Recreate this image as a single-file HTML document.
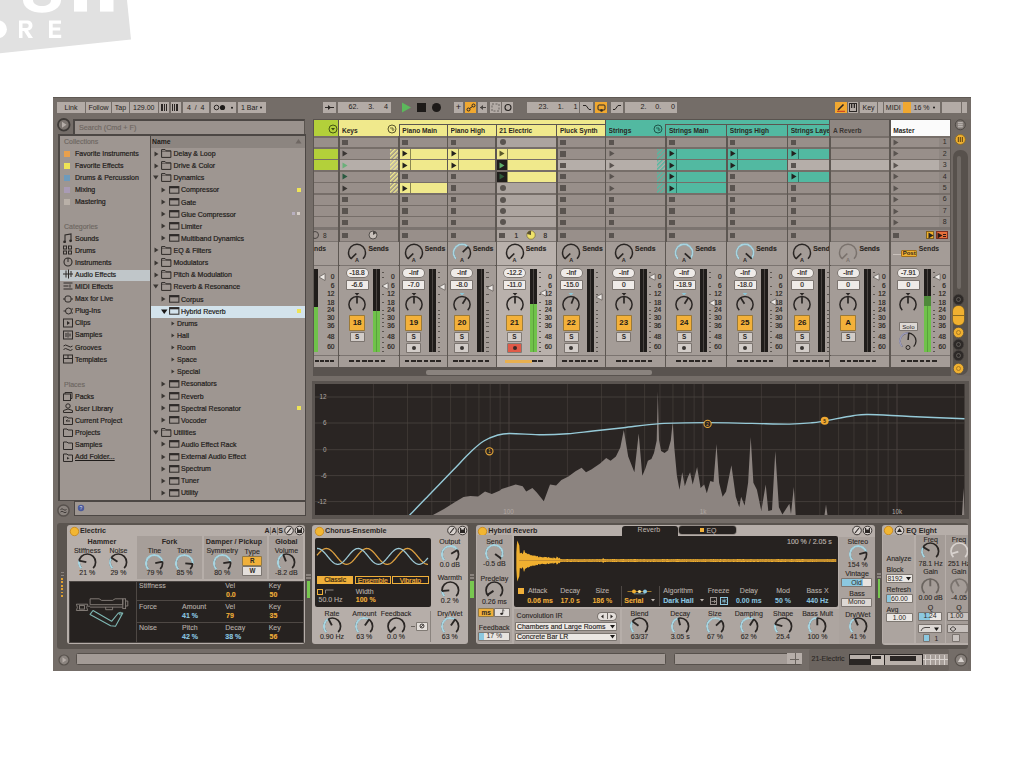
<!DOCTYPE html><html><head><meta charset="utf-8"><style>
html,body{margin:0;padding:0;background:#fff;width:1024px;height:768px;overflow:hidden;position:relative}
body>div,body>span,body>svg{position:absolute}
.t{position:absolute;font-family:"Liberation Sans",sans-serif;white-space:nowrap}
.s{-webkit-text-stroke:0.25px currentColor}
</style></head><body>
<svg style="left:0px;top:0px" width="140" height="60" viewBox="0 0 140 60"><polygon points="0,0 127,0 131,39.6 0,53.3" fill="#e1e1e1"/><path d="M23,0 C23,17 61,17 61,0 Z" fill="#fff"/><path d="M33,0 C33,8 51,8 51,0 Z" fill="#e1e1e1"/><rect x="74" y="0" width="13" height="11.6" fill="#fff"/><rect x="100" y="0" width="13.5" height="11.6" fill="#fff"/><path d="M-6,20.5 h6 a9,9 0 0 1 0,17.5 h-6z" fill="#fff"/><path d="M19,20.5 h8 a5,5 0 0 1 1,10 l5,7.5 h-4.5 l-4.5,-7 h-1.5 v7 h-3.5z M22.5,23.5 v4.5 h4 a2.2,2.2 0 0 0 0,-4.5z" fill="#fff" fill-rule="evenodd"/><path d="M49,20.5 h12 v3.2 h-8.3 v3.8 h7.5 v3 h-7.5 v4.3 h8.5 v3.2 h-12.2z" fill="#fff"/></svg>
<div style="left:53px;top:97px;width:918px;height:574px;background:#746d68;"></div>
<div style="left:53px;top:97px;width:918px;height:1px;background:#5f5954;"></div>
<div style="left:57px;top:102px;width:28px;height:11px;background:#b3aba6;"></div>
<span class="t" style="left:57px;top:102px;width:28px;height:11px;line-height:11px;text-align:center;font-size:7px;color:#1f1c1a;">Link</span>
<div style="left:86px;top:102px;width:25px;height:11px;background:#b3aba6;"></div>
<span class="t" style="left:86px;top:102px;width:25px;height:11px;line-height:11px;text-align:center;font-size:7px;color:#1f1c1a;">Follow</span>
<div style="left:112px;top:102px;width:17px;height:11px;background:#b3aba6;"></div>
<span class="t" style="left:112px;top:102px;width:17px;height:11px;line-height:11px;text-align:center;font-size:7px;color:#1f1c1a;">Tap</span>
<div style="left:130px;top:102px;width:27.5px;height:11px;background:#b3aba6;"></div>
<span class="t" style="left:130px;top:102px;width:27.5px;height:11px;line-height:11px;text-align:center;font-size:7px;color:#1f1c1a;">129.00</span>
<div style="left:159px;top:102px;width:10px;height:11px;background:#b3aba6;"></div>
<svg style="left:161px;top:104px" width="7" height="7" viewBox="0 0 7 7"><rect x="0" y="0" width="2" height="7" fill="#2a2624"/><rect x="3" y="0" width="1" height="7" fill="#2a2624"/><rect x="5" y="0" width="1" height="7" fill="#2a2624"/></svg>
<div style="left:170.5px;top:102px;width:10.5px;height:11px;background:#b3aba6;"></div>
<svg style="left:172px;top:104px" width="7" height="7" viewBox="0 0 7 7"><rect x="0" y="0" width="1" height="7" fill="#2a2624"/><rect x="2" y="0" width="1" height="7" fill="#2a2624"/><rect x="4" y="0" width="2" height="7" fill="#2a2624"/></svg>
<div style="left:182.5px;top:102px;width:26.5px;height:11px;background:#b3aba6;"></div>
<span class="t" style="left:182.5px;top:102px;width:26.5px;height:11px;line-height:11px;text-align:center;font-size:7px;color:#1f1c1a;">4&nbsp;&nbsp;/&nbsp;&nbsp;4</span>
<div style="left:211px;top:102px;width:25px;height:11px;background:#b3aba6;"></div>
<svg style="left:213px;top:104px" width="22" height="7" viewBox="0 0 22 7"><circle cx="3.5" cy="3.5" r="2.3" fill="none" stroke="#2a2624" stroke-width="1"/><circle cx="9.5" cy="3.5" r="2.6" fill="#1c1a18"/><circle cx="19" cy="3.7" r="1" fill="#1c1a18"/></svg>
<div style="left:238px;top:102px;width:28px;height:11px;background:#b3aba6;"></div>
<span class="t" style="left:238px;top:102px;width:28px;height:11px;line-height:11px;text-align:left;font-size:7px;color:#1f1c1a;padding-left:3px;box-sizing:border-box;">1 Bar</span>
<svg style="left:259px;top:106px" width="4" height="3" viewBox="0 0 4 3"><circle cx="2" cy="1.5" r="1" fill="#1c1a18"/></svg>
<div style="left:323px;top:102px;width:13px;height:11px;background:#b3aba6;"></div>
<svg style="left:325px;top:104px" width="10" height="7" viewBox="0 0 10 7"><path d="M0,3.5 h9" stroke="#2a2624" stroke-width="1"/><path d="M3,1 l3,2.5 l-3,2.5z" fill="#2a2624"/></svg>
<div style="left:338px;top:102px;width:52.5px;height:11px;background:#b3aba6;"></div>
<span class="t" style="left:348.6px;top:103.3px;font-size:7.2px;line-height:8.28px;color:#1f1c1a;">62.</span>
<span class="t" style="left:368.3px;top:103.3px;font-size:7.2px;line-height:8.28px;color:#1f1c1a;">3.</span>
<span class="t" style="left:384px;top:103.3px;font-size:7.2px;line-height:8.28px;color:#1f1c1a;">4</span>
<svg style="left:401px;top:102px" width="12" height="11" viewBox="0 0 12 11"><path d="M1,0.5 L10,5.5 L1,10.5z" fill="#5cb85c"/></svg>
<div style="left:417px;top:103px;width:9px;height:9px;background:#1d1a18;"></div>
<div style="left:431.5px;top:103px;width:9px;height:9px;background:#1d1a18;border-radius:50%"></div>
<div style="left:454px;top:102px;width:9px;height:11px;background:#b3aba6;"></div>
<span class="t" style="left:454px;top:102px;width:9px;height:11px;line-height:11px;text-align:center;font-size:9px;color:#1f1c1a;">+</span>
<div style="left:465px;top:102px;width:11px;height:11px;background:#f0a830;"></div>
<svg style="left:466px;top:103px" width="10" height="9" viewBox="0 0 10 9"><circle cx="2.5" cy="6.5" r="1.5" fill="none" stroke="#2a2624" stroke-width="1"/><circle cx="7.5" cy="2.5" r="1.5" fill="none" stroke="#2a2624" stroke-width="1"/><path d="M3.5,5.5 L6.5,3.5" stroke="#2a2624"/></svg>
<div style="left:478px;top:102px;width:9px;height:11px;background:#b3aba6;"></div>
<svg style="left:479px;top:104px" width="8" height="7" viewBox="0 0 8 7"><path d="M1,3.5 h6" stroke="#4a4542"/><path d="M1,3.5 l3,-2.5 v5z" fill="#4a4542"/></svg>
<div style="left:490px;top:102px;width:11px;height:11px;background:#b3aba6;"></div>
<svg style="left:491px;top:103px" width="9" height="9" viewBox="0 0 9 9"><rect x="1" y="1" width="7" height="7" fill="none" stroke="#6a6460" stroke-dasharray="2,1.5"/></svg>
<div style="left:502px;top:102px;width:11px;height:11px;background:#b3aba6;"></div>
<svg style="left:503px;top:103px" width="10" height="9" viewBox="0 0 10 9"><circle cx="5" cy="4.5" r="3" fill="none" stroke="#2a2624" stroke-width="1.1"/></svg>
<div style="left:527px;top:102px;width:52px;height:11px;background:#b3aba6;"></div>
<span class="t" style="left:538.5px;top:103.3px;font-size:7.2px;line-height:8.28px;color:#1f1c1a;">23.</span>
<span class="t" style="left:557.8px;top:103.3px;font-size:7.2px;line-height:8.28px;color:#1f1c1a;">1.</span>
<span class="t" style="left:573.6px;top:103.3px;font-size:7.2px;line-height:8.28px;color:#1f1c1a;">1</span>
<div style="left:580px;top:102px;width:13px;height:11px;background:#b3aba6;"></div>
<svg style="left:582px;top:104px" width="10" height="7" viewBox="0 0 10 7"><path d="M1,1.5 h3 l3,4 h2" fill="none" stroke="#2a2624" stroke-width="1"/></svg>
<div style="left:595px;top:102px;width:12px;height:11px;background:#f0a830;"></div>
<svg style="left:596px;top:103px" width="11" height="9" viewBox="0 0 11 9"><rect x="2" y="2" width="7" height="5" rx="1" fill="none" stroke="#2a2624" stroke-width="1"/><circle cx="5.5" cy="7.5" r="1.3" fill="#2a2624"/></svg>
<div style="left:610.5px;top:102px;width:12.5px;height:11px;background:#b3aba6;"></div>
<svg style="left:612px;top:104px" width="10" height="7" viewBox="0 0 10 7"><path d="M1,5.5 h2 l3,-4 h3" fill="none" stroke="#2a2624" stroke-width="1"/></svg>
<div style="left:625px;top:102px;width:52px;height:11px;background:#b3aba6;"></div>
<span class="t" style="left:640.4px;top:103.3px;font-size:7.2px;line-height:8.28px;color:#1f1c1a;">2.</span>
<span class="t" style="left:655.3px;top:103.3px;font-size:7.2px;line-height:8.28px;color:#1f1c1a;">0.</span>
<span class="t" style="left:671px;top:103.3px;font-size:7.2px;line-height:8.28px;color:#1f1c1a;">0</span>
<div style="left:835px;top:102px;width:11.5px;height:11px;background:#f0a830;"></div>
<svg style="left:836px;top:103px" width="10" height="9" viewBox="0 0 10 9"><path d="M2,7 L7.5,1.5" stroke="#2a2624" stroke-width="1.6"/><path d="M1,8.3 h8" stroke="#c83020" stroke-width="1"/></svg>
<div style="left:847.5px;top:102px;width:10.5px;height:11px;background:#b3aba6;"></div>
<svg style="left:849px;top:103px" width="8" height="9" viewBox="0 0 8 9"><rect x="0.5" y="0.5" width="7" height="8" fill="none" stroke="#2a2624"/><rect x="2" y="1" width="1.3" height="4" fill="#2a2624"/><rect x="4.7" y="1" width="1.3" height="4" fill="#2a2624"/></svg>
<div style="left:860px;top:102px;width:17px;height:11px;background:#b3aba6;"></div>
<span class="t" style="left:860px;top:102px;width:17px;height:11px;line-height:11px;text-align:center;font-size:7px;color:#1f1c1a;">Key</span>
<div style="left:878px;top:102px;width:5px;height:11px;background:#b3aba6;"></div>
<div style="left:884px;top:102px;width:18.5px;height:11px;background:#b3aba6;"></div>
<span class="t" style="left:884px;top:102px;width:18.5px;height:11px;line-height:11px;text-align:center;font-size:7px;color:#1f1c1a;">MIDI</span>
<div style="left:903px;top:102px;width:37px;height:11px;background:#b3aba6;"></div>
<span class="t" style="left:903px;top:102px;width:37px;height:11px;line-height:11px;text-align:center;font-size:7px;color:#1f1c1a;">16 %</span>
<div style="left:903px;top:102px;width:8px;height:11px;background:#f0a830;"></div>
<svg style="left:932px;top:106px" width="4" height="3" viewBox="0 0 4 3"><circle cx="2" cy="1.5" r="1" fill="#1c1a18"/></svg>
<div style="left:941.5px;top:102px;width:19.5px;height:11px;background:#b3aba6;"></div>
<div style="left:962px;top:102px;width:5px;height:11px;background:#b3aba6;"></div>
<svg style="left:57px;top:118px" width="14" height="14" viewBox="0 0 14 14"><circle cx="6.8" cy="6.8" r="5.8" fill="#7c7570" stroke="#3e3a37" stroke-width="1.8"/><path d="M5,3.8 L9.5,6.8 L5,9.8z" fill="#b5ada8"/></svg>
<div style="left:73px;top:119px;width:232px;height:16px;background:#9a928d;border-top:2px solid #4c4744;border-left:2px solid #4c4744;border-right:1px solid #5a544f;box-sizing:border-box;"></div>
<span class="t" style="left:79px;top:124px;font-size:7.2px;line-height:8.28px;color:#6e6762;-webkit-text-stroke:0.15px #6e6762">Search (Cmd + F)</span>
<div style="left:58px;top:134px;width:247.5px;height:367px;background:#9e9691;border:2px solid #4c4744;border-right-width:1px;border-bottom-width:1px;box-sizing:border-box;"></div>
<div style="left:149.5px;top:135px;width:1.2px;height:365px;background:#4c4744;"></div>
<div style="left:150.5px;top:136px;width:154px;height:12px;background:#8c8580;"></div>
<span class="t" style="left:152px;top:138.3px;font-size:6.8px;line-height:7.82px;color:#1f1c1a;font-weight:bold;">Name</span>
<svg style="left:295px;top:138px" width="7" height="6" viewBox="0 0 7 6"><path d="M0.5,5.5 L3.5,1 L6.5,5.5z" fill="#6e6762"/></svg>
<span class="t" style="left:64px;top:138.2px;font-size:7px;line-height:8.05px;color:#6d6661;-webkit-text-stroke:0.15px #6d6661">Collections</span>
<div style="left:64px;top:150.5px;width:6px;height:6px;background:#e9a04c;"></div>
<span class="t" style="left:75px;top:150.1px;font-size:7.0px;line-height:8.05px;color:#1f1c1a;-webkit-text-stroke:0.2px #1f1c1a;">Favorite Instruments</span>
<div style="left:64px;top:162.55px;width:6px;height:6px;background:#eee456;"></div>
<span class="t" style="left:75px;top:162.15px;font-size:7.0px;line-height:8.05px;color:#1f1c1a;-webkit-text-stroke:0.2px #1f1c1a;">Favorite Effects</span>
<div style="left:64px;top:174.6px;width:6px;height:6px;background:#6d9bbd;"></div>
<span class="t" style="left:75px;top:174.2px;font-size:7.0px;line-height:8.05px;color:#1f1c1a;-webkit-text-stroke:0.2px #1f1c1a;">Drums &amp; Percussion</span>
<div style="left:64px;top:186.65px;width:6px;height:6px;background:#a99bb5;"></div>
<span class="t" style="left:75px;top:186.25px;font-size:7.0px;line-height:8.05px;color:#1f1c1a;-webkit-text-stroke:0.2px #1f1c1a;">Mixing</span>
<div style="left:64px;top:198.7px;width:6px;height:6px;background:#b9b0a8;"></div>
<span class="t" style="left:75px;top:198.29999999999998px;font-size:7.0px;line-height:8.05px;color:#1f1c1a;-webkit-text-stroke:0.2px #1f1c1a;">Mastering</span>
<span class="t" style="left:64px;top:222.7px;font-size:7px;line-height:8.05px;color:#6d6661;-webkit-text-stroke:0.15px #6d6661">Categories</span>
<div style="left:60px;top:269.5px;width:89.5px;height:11.5px;background:#c0c6c9;"></div>
<svg style="left:63px;top:233.0px" width="10" height="10" viewBox="0 0 10 10"><path d="M2,9 V2 L8,1 V8" fill="none" stroke="#2e2a28" stroke-width="1.1"/><circle cx="1.6" cy="8.8" r="1.4" fill="#2e2a28"/><circle cx="7.6" cy="7.8" r="1.4" fill="#2e2a28"/></svg>
<span class="t" style="left:75px;top:234.6px;font-size:7.0px;line-height:8.05px;color:#1f1c1a;-webkit-text-stroke:0.2px #1f1c1a;">Sounds</span>
<svg style="left:63px;top:245.1px" width="10" height="10" viewBox="0 0 10 10"><rect x="0.5" y="1" width="3" height="3" fill="none" stroke="#2e2a28"/><rect x="5.5" y="1" width="3" height="3" fill="none" stroke="#2e2a28"/><rect x="0.5" y="6" width="3" height="3" fill="none" stroke="#2e2a28"/><rect x="5.5" y="6" width="3" height="3" fill="none" stroke="#2e2a28"/></svg>
<span class="t" style="left:75px;top:246.7px;font-size:7.0px;line-height:8.05px;color:#1f1c1a;-webkit-text-stroke:0.2px #1f1c1a;">Drums</span>
<svg style="left:63px;top:257.2px" width="10" height="10" viewBox="0 0 10 10"><circle cx="5" cy="5" r="4" fill="none" stroke="#2e2a28" stroke-width="1.1"/><path d="M5,1 V5" stroke="#2e2a28"/></svg>
<span class="t" style="left:75px;top:258.8px;font-size:7.0px;line-height:8.05px;color:#1f1c1a;-webkit-text-stroke:0.2px #1f1c1a;">Instruments</span>
<svg style="left:63px;top:269.3px" width="10" height="10" viewBox="0 0 10 10"><path d="M0,5 h10 M3,1.5 v7 M5.5,0.5 v9 M8,2 v6" stroke="#2e2a28" stroke-width="1"/></svg>
<span class="t" style="left:75px;top:270.90000000000003px;font-size:7.0px;line-height:8.05px;color:#1f1c1a;-webkit-text-stroke:0.2px #1f1c1a;">Audio Effects</span>
<svg style="left:63px;top:281.4px" width="10" height="10" viewBox="0 0 10 10"><path d="M0.5,2 h9 M0.5,5 h5 M0.5,8 h9 M7,3.5 v3" stroke="#2e2a28" stroke-width="1"/></svg>
<span class="t" style="left:75px;top:283.0px;font-size:7.0px;line-height:8.05px;color:#1f1c1a;-webkit-text-stroke:0.2px #1f1c1a;">MIDI Effects</span>
<svg style="left:63px;top:293.5px" width="10" height="10" viewBox="0 0 10 10"><rect x="2" y="2" width="6" height="6" rx="2" fill="none" stroke="#2e2a28"/><path d="M0,5 h2 M8,5 h2" stroke="#2e2a28"/></svg>
<span class="t" style="left:75px;top:295.1px;font-size:7.0px;line-height:8.05px;color:#1f1c1a;-webkit-text-stroke:0.2px #1f1c1a;">Max for Live</span>
<svg style="left:63px;top:305.6px" width="10" height="10" viewBox="0 0 10 10"><circle cx="5.5" cy="5" r="3" fill="none" stroke="#2e2a28"/><path d="M0.5,5 h2 M8.5,3 h1.5 M8.5,7 h1.5" stroke="#2e2a28"/></svg>
<span class="t" style="left:75px;top:307.20000000000005px;font-size:7.0px;line-height:8.05px;color:#1f1c1a;-webkit-text-stroke:0.2px #1f1c1a;">Plug-Ins</span>
<svg style="left:63px;top:317.7px" width="10" height="10" viewBox="0 0 10 10"><rect x="0.5" y="1" width="9" height="8" fill="none" stroke="#2e2a28"/><path d="M4,3 l3,2 l-3,2z" fill="#2e2a28"/></svg>
<span class="t" style="left:75px;top:319.3px;font-size:7.0px;line-height:8.05px;color:#1f1c1a;-webkit-text-stroke:0.2px #1f1c1a;">Clips</span>
<svg style="left:63px;top:329.8px" width="10" height="10" viewBox="0 0 10 10"><rect x="0.5" y="1" width="9" height="8" fill="none" stroke="#2e2a28"/><path d="M3,3 v4 M5,2.5 v5 M7,3.5 v3" stroke="#2e2a28"/></svg>
<span class="t" style="left:75px;top:331.40000000000003px;font-size:7.0px;line-height:8.05px;color:#1f1c1a;-webkit-text-stroke:0.2px #1f1c1a;">Samples</span>
<svg style="left:63px;top:341.9px" width="10" height="10" viewBox="0 0 10 10"><path d="M0.5,4 q2,-2 4.5,0 t4.5,0 M0.5,7.5 q2,-2 4.5,0 t4.5,0" fill="none" stroke="#2e2a28" stroke-width="1"/></svg>
<span class="t" style="left:75px;top:343.5px;font-size:7.0px;line-height:8.05px;color:#1f1c1a;-webkit-text-stroke:0.2px #1f1c1a;">Grooves</span>
<svg style="left:63px;top:354.0px" width="10" height="10" viewBox="0 0 10 10"><rect x="0.5" y="1" width="9" height="8" fill="none" stroke="#2e2a28"/><path d="M0.5,4.5 h9 M5,1 v3.5" stroke="#2e2a28"/></svg>
<span class="t" style="left:75px;top:355.6px;font-size:7.0px;line-height:8.05px;color:#1f1c1a;-webkit-text-stroke:0.2px #1f1c1a;">Templates</span>
<span class="t" style="left:64px;top:380.7px;font-size:7px;line-height:8.05px;color:#6d6661;-webkit-text-stroke:0.15px #6d6661">Places</span>
<svg style="left:63px;top:391.0px" width="10" height="10" viewBox="0 0 10 10"><rect x="0.5" y="3" width="7" height="6.5" fill="none" stroke="#2e2a28"/><path d="M2,3 V1.5 h7 v6 h-1.5" fill="none" stroke="#2e2a28"/></svg>
<span class="t" style="left:75px;top:392.6px;font-size:7.0px;line-height:8.05px;color:#1f1c1a;-webkit-text-stroke:0.2px #1f1c1a;">Packs</span>
<svg style="left:63px;top:403.15px" width="10" height="10" viewBox="0 0 10 10"><circle cx="5" cy="3" r="2.2" fill="none" stroke="#2e2a28"/><path d="M0.5,9.5 v-2 q4.5,-3 9,0 v2z" fill="none" stroke="#2e2a28"/></svg>
<span class="t" style="left:75px;top:404.75px;font-size:7.0px;line-height:8.05px;color:#1f1c1a;-webkit-text-stroke:0.2px #1f1c1a;">User Library</span>
<svg style="left:63px;top:415.3px" width="10" height="10" viewBox="0 0 10 10"><path d="M0.5,2 h3.5 l1,1 h4.5 v6.5 h-9z" fill="none" stroke="#2e2a28"/><path d="M3,6 h4 M3,6 l1.5,-1.3" stroke="#2e2a28"/></svg>
<span class="t" style="left:75px;top:416.90000000000003px;font-size:7.0px;line-height:8.05px;color:#1f1c1a;-webkit-text-stroke:0.2px #1f1c1a;">Current Project</span>
<svg style="left:63px;top:427.45px" width="10" height="10" viewBox="0 0 10 10"><path d="M0.5,2 h3.5 l1,1 h4.5 v6.5 h-9z" fill="none" stroke="#2e2a28"/></svg>
<span class="t" style="left:75px;top:429.05px;font-size:7.0px;line-height:8.05px;color:#1f1c1a;-webkit-text-stroke:0.2px #1f1c1a;">Projects</span>
<svg style="left:63px;top:439.6px" width="10" height="10" viewBox="0 0 10 10"><path d="M0.5,2 h3.5 l1,1 h4.5 v6.5 h-9z" fill="none" stroke="#2e2a28"/></svg>
<span class="t" style="left:75px;top:441.20000000000005px;font-size:7.0px;line-height:8.05px;color:#1f1c1a;-webkit-text-stroke:0.2px #1f1c1a;">Samples</span>
<svg style="left:63px;top:451.75px" width="10" height="10" viewBox="0 0 10 10"><path d="M0.5,2 h3.5 l1,1 h4.5 v6.5 h-9z" fill="none" stroke="#2e2a28"/><path d="M4,5 l2.5,1.3 l-2.5,1.3z" fill="#2e2a28"/></svg>
<span class="t" style="left:75px;top:453.35px;font-size:7.0px;line-height:8.05px;color:#1f1c1a;-webkit-text-stroke:0.2px #1f1c1a;text-decoration:underline;">Add Folder...</span>
<div style="left:150.5px;top:305.5px;width:154px;height:12px;background:#d3e3ec;"></div>
<svg style="left:153.5px;top:150.5px" width="5" height="6" viewBox="0 0 5 6"><path d="M0.5,0.5 L4.5,3 L0.5,5.5z" fill="#3a3633"/></svg>
<svg style="left:160.8px;top:149.0px" width="11" height="9" viewBox="0 0 11 9"><path d="M0.6,0.6 h3.5 l1,1.2 h4.8 v6.6 h-9.3z" fill="none" stroke="#2e2a28" stroke-width="1"/><path d="M0.6,2.4 h9.3" stroke="#2e2a28" stroke-width="0.5"/></svg>
<span class="t" style="left:173.5px;top:150.1px;font-size:7.0px;line-height:8.05px;color:#1f1c1a;-webkit-text-stroke:0.2px #1f1c1a;">Delay &amp; Loop</span>
<svg style="left:153.5px;top:162.62px" width="5" height="6" viewBox="0 0 5 6"><path d="M0.5,0.5 L4.5,3 L0.5,5.5z" fill="#3a3633"/></svg>
<svg style="left:160.8px;top:161.12px" width="11" height="9" viewBox="0 0 11 9"><path d="M0.6,0.6 h3.5 l1,1.2 h4.8 v6.6 h-9.3z" fill="none" stroke="#2e2a28" stroke-width="1"/><path d="M0.6,2.4 h9.3" stroke="#2e2a28" stroke-width="0.5"/></svg>
<span class="t" style="left:173.5px;top:162.22px;font-size:7.0px;line-height:8.05px;color:#1f1c1a;-webkit-text-stroke:0.2px #1f1c1a;">Drive &amp; Color</span>
<svg style="left:153.0px;top:175.24px" width="6" height="5" viewBox="0 0 6 5"><path d="M0,0.5 L5.5,0.5 L2.75,4.5z" fill="#3a3633"/></svg>
<svg style="left:160.8px;top:173.24px" width="11" height="9" viewBox="0 0 11 9"><path d="M0.6,0.6 h3.5 l1,1.2 h4.8 v6.6 h-9.3z" fill="none" stroke="#2e2a28" stroke-width="1"/><path d="M0.6,2.4 h9.3" stroke="#2e2a28" stroke-width="0.5"/></svg>
<span class="t" style="left:173.5px;top:174.34px;font-size:7.0px;line-height:8.05px;color:#1f1c1a;-webkit-text-stroke:0.2px #1f1c1a;">Dynamics</span>
<svg style="left:161.0px;top:186.86px" width="5" height="6" viewBox="0 0 5 6"><path d="M0.5,0.5 L4.5,3 L0.5,5.5z" fill="#3a3633"/></svg>
<svg style="left:168.8px;top:185.86px" width="11" height="8" viewBox="0 0 11 8"><rect x="0.6" y="0.6" width="9.3" height="6.6" fill="none" stroke="#2e2a28" stroke-width="1"/><rect x="0.6" y="0.6" width="9.3" height="1.7" fill="#2e2a28"/></svg>
<span class="t" style="left:181.0px;top:186.46px;font-size:7.0px;line-height:8.05px;color:#1f1c1a;-webkit-text-stroke:0.2px #1f1c1a;">Compressor</span>
<svg style="left:161.0px;top:198.98px" width="5" height="6" viewBox="0 0 5 6"><path d="M0.5,0.5 L4.5,3 L0.5,5.5z" fill="#3a3633"/></svg>
<svg style="left:168.8px;top:197.98px" width="11" height="8" viewBox="0 0 11 8"><rect x="0.6" y="0.6" width="9.3" height="6.6" fill="none" stroke="#2e2a28" stroke-width="1"/><rect x="0.6" y="0.6" width="9.3" height="1.7" fill="#2e2a28"/></svg>
<span class="t" style="left:181.0px;top:198.57999999999998px;font-size:7.0px;line-height:8.05px;color:#1f1c1a;-webkit-text-stroke:0.2px #1f1c1a;">Gate</span>
<svg style="left:161.0px;top:211.1px" width="5" height="6" viewBox="0 0 5 6"><path d="M0.5,0.5 L4.5,3 L0.5,5.5z" fill="#3a3633"/></svg>
<svg style="left:168.8px;top:210.1px" width="11" height="8" viewBox="0 0 11 8"><rect x="0.6" y="0.6" width="9.3" height="6.6" fill="none" stroke="#2e2a28" stroke-width="1"/><rect x="0.6" y="0.6" width="9.3" height="1.7" fill="#2e2a28"/></svg>
<span class="t" style="left:181.0px;top:210.7px;font-size:7.0px;line-height:8.05px;color:#1f1c1a;-webkit-text-stroke:0.2px #1f1c1a;">Glue Compressor</span>
<svg style="left:161.0px;top:223.22px" width="5" height="6" viewBox="0 0 5 6"><path d="M0.5,0.5 L4.5,3 L0.5,5.5z" fill="#3a3633"/></svg>
<svg style="left:168.8px;top:222.22px" width="11" height="8" viewBox="0 0 11 8"><rect x="0.6" y="0.6" width="9.3" height="6.6" fill="none" stroke="#2e2a28" stroke-width="1"/><rect x="0.6" y="0.6" width="9.3" height="1.7" fill="#2e2a28"/></svg>
<span class="t" style="left:181.0px;top:222.82px;font-size:7.0px;line-height:8.05px;color:#1f1c1a;-webkit-text-stroke:0.2px #1f1c1a;">Limiter</span>
<svg style="left:161.0px;top:235.33999999999997px" width="5" height="6" viewBox="0 0 5 6"><path d="M0.5,0.5 L4.5,3 L0.5,5.5z" fill="#3a3633"/></svg>
<svg style="left:168.8px;top:234.33999999999997px" width="11" height="8" viewBox="0 0 11 8"><rect x="0.6" y="0.6" width="9.3" height="6.6" fill="none" stroke="#2e2a28" stroke-width="1"/><rect x="0.6" y="0.6" width="9.3" height="1.7" fill="#2e2a28"/></svg>
<span class="t" style="left:181.0px;top:234.93999999999997px;font-size:7.0px;line-height:8.05px;color:#1f1c1a;-webkit-text-stroke:0.2px #1f1c1a;">Multiband Dynamics</span>
<svg style="left:153.5px;top:247.45999999999998px" width="5" height="6" viewBox="0 0 5 6"><path d="M0.5,0.5 L4.5,3 L0.5,5.5z" fill="#3a3633"/></svg>
<svg style="left:160.8px;top:245.95999999999998px" width="11" height="9" viewBox="0 0 11 9"><path d="M0.6,0.6 h3.5 l1,1.2 h4.8 v6.6 h-9.3z" fill="none" stroke="#2e2a28" stroke-width="1"/><path d="M0.6,2.4 h9.3" stroke="#2e2a28" stroke-width="0.5"/></svg>
<span class="t" style="left:173.5px;top:247.05999999999997px;font-size:7.0px;line-height:8.05px;color:#1f1c1a;-webkit-text-stroke:0.2px #1f1c1a;">EQ &amp; Filters</span>
<svg style="left:153.5px;top:259.58px" width="5" height="6" viewBox="0 0 5 6"><path d="M0.5,0.5 L4.5,3 L0.5,5.5z" fill="#3a3633"/></svg>
<svg style="left:160.8px;top:258.08px" width="11" height="9" viewBox="0 0 11 9"><path d="M0.6,0.6 h3.5 l1,1.2 h4.8 v6.6 h-9.3z" fill="none" stroke="#2e2a28" stroke-width="1"/><path d="M0.6,2.4 h9.3" stroke="#2e2a28" stroke-width="0.5"/></svg>
<span class="t" style="left:173.5px;top:259.18px;font-size:7.0px;line-height:8.05px;color:#1f1c1a;-webkit-text-stroke:0.2px #1f1c1a;">Modulators</span>
<svg style="left:153.5px;top:271.7px" width="5" height="6" viewBox="0 0 5 6"><path d="M0.5,0.5 L4.5,3 L0.5,5.5z" fill="#3a3633"/></svg>
<svg style="left:160.8px;top:270.2px" width="11" height="9" viewBox="0 0 11 9"><path d="M0.6,0.6 h3.5 l1,1.2 h4.8 v6.6 h-9.3z" fill="none" stroke="#2e2a28" stroke-width="1"/><path d="M0.6,2.4 h9.3" stroke="#2e2a28" stroke-width="0.5"/></svg>
<span class="t" style="left:173.5px;top:271.3px;font-size:7.0px;line-height:8.05px;color:#1f1c1a;-webkit-text-stroke:0.2px #1f1c1a;">Pitch &amp; Modulation</span>
<svg style="left:153.0px;top:284.32px" width="6" height="5" viewBox="0 0 6 5"><path d="M0,0.5 L5.5,0.5 L2.75,4.5z" fill="#3a3633"/></svg>
<svg style="left:160.8px;top:282.32px" width="11" height="9" viewBox="0 0 11 9"><path d="M0.6,0.6 h3.5 l1,1.2 h4.8 v6.6 h-9.3z" fill="none" stroke="#2e2a28" stroke-width="1"/><path d="M0.6,2.4 h9.3" stroke="#2e2a28" stroke-width="0.5"/></svg>
<span class="t" style="left:173.5px;top:283.42px;font-size:7.0px;line-height:8.05px;color:#1f1c1a;-webkit-text-stroke:0.2px #1f1c1a;">Reverb &amp; Resonance</span>
<svg style="left:161.0px;top:295.94px" width="5" height="6" viewBox="0 0 5 6"><path d="M0.5,0.5 L4.5,3 L0.5,5.5z" fill="#3a3633"/></svg>
<svg style="left:168.8px;top:294.94px" width="11" height="8" viewBox="0 0 11 8"><rect x="0.6" y="0.6" width="9.3" height="6.6" fill="none" stroke="#2e2a28" stroke-width="1"/><rect x="0.6" y="0.6" width="9.3" height="1.7" fill="#2e2a28"/></svg>
<span class="t" style="left:181.0px;top:295.54px;font-size:7.0px;line-height:8.05px;color:#1f1c1a;-webkit-text-stroke:0.2px #1f1c1a;">Corpus</span>
<svg style="left:160.5px;top:308.56px" width="7" height="6" viewBox="0 0 7 6"><path d="M0,0.5 L6.5,0.5 L3.25,5z" fill="#1a1816"/></svg>
<svg style="left:168.8px;top:307.06px" width="11" height="8" viewBox="0 0 11 8"><rect x="0.6" y="0.6" width="9.3" height="6.6" fill="none" stroke="#2e2a28" stroke-width="1"/><rect x="0.6" y="0.6" width="9.3" height="1.7" fill="#2e2a28"/></svg>
<span class="t" style="left:181.0px;top:307.66px;font-size:7.0px;line-height:8.05px;color:#1f1c1a;-webkit-text-stroke:0.2px #1f1c1a;">Hybrid Reverb</span>
<svg style="left:170.5px;top:320.67999999999995px" width="4" height="5" viewBox="0 0 4 5"><path d="M0.5,0.5 L3.5,2.5 L0.5,4.5z" fill="#3a3633"/></svg>
<span class="t" style="left:177.0px;top:319.78px;font-size:7.0px;line-height:8.05px;color:#1f1c1a;-webkit-text-stroke:0.2px #1f1c1a;">Drums</span>
<svg style="left:170.5px;top:332.79999999999995px" width="4" height="5" viewBox="0 0 4 5"><path d="M0.5,0.5 L3.5,2.5 L0.5,4.5z" fill="#3a3633"/></svg>
<span class="t" style="left:177.0px;top:331.9px;font-size:7.0px;line-height:8.05px;color:#1f1c1a;-webkit-text-stroke:0.2px #1f1c1a;">Hall</span>
<svg style="left:170.5px;top:344.91999999999996px" width="4" height="5" viewBox="0 0 4 5"><path d="M0.5,0.5 L3.5,2.5 L0.5,4.5z" fill="#3a3633"/></svg>
<span class="t" style="left:177.0px;top:344.02px;font-size:7.0px;line-height:8.05px;color:#1f1c1a;-webkit-text-stroke:0.2px #1f1c1a;">Room</span>
<svg style="left:170.5px;top:357.03999999999996px" width="4" height="5" viewBox="0 0 4 5"><path d="M0.5,0.5 L3.5,2.5 L0.5,4.5z" fill="#3a3633"/></svg>
<span class="t" style="left:177.0px;top:356.14px;font-size:7.0px;line-height:8.05px;color:#1f1c1a;-webkit-text-stroke:0.2px #1f1c1a;">Space</span>
<svg style="left:170.5px;top:369.15999999999997px" width="4" height="5" viewBox="0 0 4 5"><path d="M0.5,0.5 L3.5,2.5 L0.5,4.5z" fill="#3a3633"/></svg>
<span class="t" style="left:177.0px;top:368.26px;font-size:7.0px;line-height:8.05px;color:#1f1c1a;-webkit-text-stroke:0.2px #1f1c1a;">Special</span>
<svg style="left:161.0px;top:380.78px" width="5" height="6" viewBox="0 0 5 6"><path d="M0.5,0.5 L4.5,3 L0.5,5.5z" fill="#3a3633"/></svg>
<svg style="left:168.8px;top:379.78px" width="11" height="8" viewBox="0 0 11 8"><rect x="0.6" y="0.6" width="9.3" height="6.6" fill="none" stroke="#2e2a28" stroke-width="1"/><rect x="0.6" y="0.6" width="9.3" height="1.7" fill="#2e2a28"/></svg>
<span class="t" style="left:181.0px;top:380.38px;font-size:7.0px;line-height:8.05px;color:#1f1c1a;-webkit-text-stroke:0.2px #1f1c1a;">Resonators</span>
<svg style="left:161.0px;top:392.9px" width="5" height="6" viewBox="0 0 5 6"><path d="M0.5,0.5 L4.5,3 L0.5,5.5z" fill="#3a3633"/></svg>
<svg style="left:168.8px;top:391.9px" width="11" height="8" viewBox="0 0 11 8"><rect x="0.6" y="0.6" width="9.3" height="6.6" fill="none" stroke="#2e2a28" stroke-width="1"/><rect x="0.6" y="0.6" width="9.3" height="1.7" fill="#2e2a28"/></svg>
<span class="t" style="left:181.0px;top:392.5px;font-size:7.0px;line-height:8.05px;color:#1f1c1a;-webkit-text-stroke:0.2px #1f1c1a;">Reverb</span>
<svg style="left:161.0px;top:405.02px" width="5" height="6" viewBox="0 0 5 6"><path d="M0.5,0.5 L4.5,3 L0.5,5.5z" fill="#3a3633"/></svg>
<svg style="left:168.8px;top:404.02px" width="11" height="8" viewBox="0 0 11 8"><rect x="0.6" y="0.6" width="9.3" height="6.6" fill="none" stroke="#2e2a28" stroke-width="1"/><rect x="0.6" y="0.6" width="9.3" height="1.7" fill="#2e2a28"/></svg>
<span class="t" style="left:181.0px;top:404.62px;font-size:7.0px;line-height:8.05px;color:#1f1c1a;-webkit-text-stroke:0.2px #1f1c1a;">Spectral Resonator</span>
<svg style="left:161.0px;top:417.14px" width="5" height="6" viewBox="0 0 5 6"><path d="M0.5,0.5 L4.5,3 L0.5,5.5z" fill="#3a3633"/></svg>
<svg style="left:168.8px;top:416.14px" width="11" height="8" viewBox="0 0 11 8"><rect x="0.6" y="0.6" width="9.3" height="6.6" fill="none" stroke="#2e2a28" stroke-width="1"/><rect x="0.6" y="0.6" width="9.3" height="1.7" fill="#2e2a28"/></svg>
<span class="t" style="left:181.0px;top:416.74px;font-size:7.0px;line-height:8.05px;color:#1f1c1a;-webkit-text-stroke:0.2px #1f1c1a;">Vocoder</span>
<svg style="left:153.0px;top:429.76px" width="6" height="5" viewBox="0 0 6 5"><path d="M0,0.5 L5.5,0.5 L2.75,4.5z" fill="#3a3633"/></svg>
<svg style="left:160.8px;top:427.76px" width="11" height="9" viewBox="0 0 11 9"><path d="M0.6,0.6 h3.5 l1,1.2 h4.8 v6.6 h-9.3z" fill="none" stroke="#2e2a28" stroke-width="1"/><path d="M0.6,2.4 h9.3" stroke="#2e2a28" stroke-width="0.5"/></svg>
<span class="t" style="left:173.5px;top:428.86px;font-size:7.0px;line-height:8.05px;color:#1f1c1a;-webkit-text-stroke:0.2px #1f1c1a;">Utilities</span>
<svg style="left:161.0px;top:441.38px" width="5" height="6" viewBox="0 0 5 6"><path d="M0.5,0.5 L4.5,3 L0.5,5.5z" fill="#3a3633"/></svg>
<svg style="left:168.8px;top:440.38px" width="11" height="8" viewBox="0 0 11 8"><rect x="0.6" y="0.6" width="9.3" height="6.6" fill="none" stroke="#2e2a28" stroke-width="1"/><rect x="0.6" y="0.6" width="9.3" height="1.7" fill="#2e2a28"/></svg>
<span class="t" style="left:181.0px;top:440.98px;font-size:7.0px;line-height:8.05px;color:#1f1c1a;-webkit-text-stroke:0.2px #1f1c1a;">Audio Effect Rack</span>
<svg style="left:161.0px;top:453.5px" width="5" height="6" viewBox="0 0 5 6"><path d="M0.5,0.5 L4.5,3 L0.5,5.5z" fill="#3a3633"/></svg>
<svg style="left:168.8px;top:452.5px" width="11" height="8" viewBox="0 0 11 8"><rect x="0.6" y="0.6" width="9.3" height="6.6" fill="none" stroke="#2e2a28" stroke-width="1"/><rect x="0.6" y="0.6" width="9.3" height="1.7" fill="#2e2a28"/></svg>
<span class="t" style="left:181.0px;top:453.1px;font-size:7.0px;line-height:8.05px;color:#1f1c1a;-webkit-text-stroke:0.2px #1f1c1a;">External Audio Effect</span>
<svg style="left:161.0px;top:465.62px" width="5" height="6" viewBox="0 0 5 6"><path d="M0.5,0.5 L4.5,3 L0.5,5.5z" fill="#3a3633"/></svg>
<svg style="left:168.8px;top:464.62px" width="11" height="8" viewBox="0 0 11 8"><rect x="0.6" y="0.6" width="9.3" height="6.6" fill="none" stroke="#2e2a28" stroke-width="1"/><rect x="0.6" y="0.6" width="9.3" height="1.7" fill="#2e2a28"/></svg>
<span class="t" style="left:181.0px;top:465.22px;font-size:7.0px;line-height:8.05px;color:#1f1c1a;-webkit-text-stroke:0.2px #1f1c1a;">Spectrum</span>
<svg style="left:161.0px;top:477.73999999999995px" width="5" height="6" viewBox="0 0 5 6"><path d="M0.5,0.5 L4.5,3 L0.5,5.5z" fill="#3a3633"/></svg>
<svg style="left:168.8px;top:476.73999999999995px" width="11" height="8" viewBox="0 0 11 8"><rect x="0.6" y="0.6" width="9.3" height="6.6" fill="none" stroke="#2e2a28" stroke-width="1"/><rect x="0.6" y="0.6" width="9.3" height="1.7" fill="#2e2a28"/></svg>
<span class="t" style="left:181.0px;top:477.34px;font-size:7.0px;line-height:8.05px;color:#1f1c1a;-webkit-text-stroke:0.2px #1f1c1a;">Tuner</span>
<svg style="left:161.0px;top:489.85999999999996px" width="5" height="6" viewBox="0 0 5 6"><path d="M0.5,0.5 L4.5,3 L0.5,5.5z" fill="#3a3633"/></svg>
<svg style="left:168.8px;top:488.85999999999996px" width="11" height="8" viewBox="0 0 11 8"><rect x="0.6" y="0.6" width="9.3" height="6.6" fill="none" stroke="#2e2a28" stroke-width="1"/><rect x="0.6" y="0.6" width="9.3" height="1.7" fill="#2e2a28"/></svg>
<span class="t" style="left:181.0px;top:489.46px;font-size:7.0px;line-height:8.05px;color:#1f1c1a;-webkit-text-stroke:0.2px #1f1c1a;">Utility</span>
<div style="left:296.5px;top:187.5px;width:4px;height:4px;background:#eee456;"></div>
<div style="left:296.5px;top:309.3px;width:4px;height:4px;background:#eee456;"></div>
<div style="left:296.5px;top:406.3px;width:4px;height:4px;background:#eee456;"></div>
<div style="left:292px;top:211.5px;width:3px;height:3px;background:#b8b0c0;"></div>
<div style="left:296.5px;top:211.5px;width:3px;height:3px;background:#d8d0c8;"></div>
<div style="left:74px;top:501px;width:231.5px;height:14.5px;background:#9e9691;border:1px solid #4c4744;border-top-width:1.5px;box-sizing:border-box;"></div>
<svg style="left:57px;top:504px" width="13" height="13" viewBox="0 0 13 13"><circle cx="6.5" cy="6.5" r="5.6" fill="#8a837e" stroke="#57514d" stroke-width="1.5"/><path d="M3.5,5.5 q1.5,-1.5 3,0 t3,0 M3.5,8 q1.5,-1.5 3,0 t3,0" fill="none" stroke="#3a3633" stroke-width="0.9"/></svg>
<svg style="left:77px;top:504px" width="8" height="8" viewBox="0 0 8 8"><circle cx="4" cy="4" r="3.2" fill="#4a5a9a"/><text x="4" y="6" font-size="5" text-anchor="middle" fill="#dde" font-family="Liberation Sans">?</text></svg>
<div style="left:313px;top:119px;width:657px;height:257px;background:#59534f;"></div>
<div style="left:950.5px;top:119px;width:20px;height:257px;background:#716a65;"></div>
<div style="left:952.6px;top:150.4px;width:15.8px;height:225px;background:#57514c;border-radius:7px"></div>
<div style="left:956.8px;top:155.7px;width:4.6px;height:133.6px;background:#6f6964;border-radius:2px"></div>
<div style="left:314.2px;top:120px;width:24.0px;height:247px;background:#7b7470;"></div>
<div style="left:339.4px;top:120px;width:59.200000000000045px;height:247px;background:#7b7470;"></div>
<div style="left:399.8px;top:120px;width:47.0px;height:247px;background:#7b7470;"></div>
<div style="left:448.0px;top:120px;width:47.60000000000002px;height:247px;background:#7b7470;"></div>
<div style="left:496.8px;top:120px;width:59.400000000000034px;height:247px;background:#7b7470;"></div>
<div style="left:557.4000000000001px;top:120px;width:47.499999999999886px;height:247px;background:#7b7470;"></div>
<div style="left:606.1px;top:120px;width:59.10000000000002px;height:247px;background:#7b7470;"></div>
<div style="left:666.4000000000001px;top:120px;width:59.69999999999993px;height:247px;background:#7b7470;"></div>
<div style="left:727.3000000000001px;top:120px;width:59.69999999999993px;height:247px;background:#7b7470;"></div>
<div style="left:788.2px;top:120px;width:41.0px;height:247px;background:#7b7470;"></div>
<div style="left:830.4000000000001px;top:120px;width:59.09999999999991px;height:247px;background:#7b7470;"></div>
<div style="left:890.7px;top:120px;width:59.299999999999955px;height:247px;background:#7b7470;"></div>
<div style="left:398.6px;top:120px;width:206.3px;height:4.5px;background:#f0e98c;"></div>
<div style="left:665.2px;top:120px;width:164px;height:4.5px;background:#52b9a1;"></div>
<div style="left:314.2px;top:120px;width:24.0px;height:16px;background:#b3d03a;"></div>
<div style="left:339.4px;top:120px;width:59.200000000000045px;height:16px;background:#f0e98c;"></div>
<span class="t" style="left:341.9px;top:127px;font-size:6.6px;line-height:7.59px;color:#2a2622;font-weight:bold;overflow:hidden;width:56px;">Keys</span>
<div style="left:398.6px;top:124.2px;width:49.4px;height:12.3px;background:#5b5550;"></div>
<div style="left:399.8px;top:125.3px;width:47.0px;height:10.7px;background:#f0e98c;"></div>
<span class="t" style="left:402.3px;top:127px;font-size:6.6px;line-height:7.59px;color:#2a2622;font-weight:bold;overflow:hidden;width:44px;">Piano Main</span>
<div style="left:446.8px;top:124.2px;width:50.00000000000002px;height:12.3px;background:#5b5550;"></div>
<div style="left:448.0px;top:125.3px;width:47.60000000000002px;height:10.7px;background:#f0e98c;"></div>
<span class="t" style="left:450.5px;top:127px;font-size:6.6px;line-height:7.59px;color:#2a2622;font-weight:bold;overflow:hidden;width:44px;">Piano High</span>
<div style="left:495.6px;top:124.2px;width:61.80000000000003px;height:12.3px;background:#5b5550;"></div>
<div style="left:496.8px;top:125.3px;width:59.400000000000034px;height:10.7px;background:#f0e98c;"></div>
<span class="t" style="left:499.3px;top:127px;font-size:6.6px;line-height:7.59px;color:#2a2622;font-weight:bold;overflow:hidden;width:56px;">21 Electric</span>
<div style="left:556.2px;top:124.2px;width:49.899999999999885px;height:12.3px;background:#5b5550;"></div>
<div style="left:557.4000000000001px;top:125.3px;width:47.499999999999886px;height:10.7px;background:#f0e98c;"></div>
<span class="t" style="left:559.9000000000001px;top:127px;font-size:6.6px;line-height:7.59px;color:#2a2622;font-weight:bold;overflow:hidden;width:44px;">Pluck Synth</span>
<div style="left:606.1px;top:120px;width:59.10000000000002px;height:16px;background:#52b9a1;"></div>
<span class="t" style="left:608.6px;top:127px;font-size:6.6px;line-height:7.59px;color:#2a2622;font-weight:bold;overflow:hidden;width:56px;">Strings</span>
<div style="left:665.2px;top:124.2px;width:62.09999999999993px;height:12.3px;background:#5b5550;"></div>
<div style="left:666.4000000000001px;top:125.3px;width:59.69999999999993px;height:10.7px;background:#52b9a1;"></div>
<span class="t" style="left:668.9000000000001px;top:127px;font-size:6.6px;line-height:7.59px;color:#2a2622;font-weight:bold;overflow:hidden;width:56px;">Strings Main</span>
<div style="left:726.1px;top:124.2px;width:62.09999999999993px;height:12.3px;background:#5b5550;"></div>
<div style="left:727.3000000000001px;top:125.3px;width:59.69999999999993px;height:10.7px;background:#52b9a1;"></div>
<span class="t" style="left:729.8000000000001px;top:127px;font-size:6.6px;line-height:7.59px;color:#2a2622;font-weight:bold;overflow:hidden;width:56px;">Strings High</span>
<div style="left:787.0px;top:124.2px;width:43.4px;height:12.3px;background:#5b5550;"></div>
<div style="left:788.2px;top:125.3px;width:41.0px;height:10.7px;background:#52b9a1;"></div>
<span class="t" style="left:790.7px;top:127px;font-size:6.6px;line-height:7.59px;color:#2a2622;font-weight:bold;overflow:hidden;width:38px;">Strings Layer</span>
<div style="left:830.4000000000001px;top:120px;width:59.09999999999991px;height:16px;background:#8e8681;"></div>
<span class="t" style="left:832.9000000000001px;top:127px;font-size:6.6px;line-height:7.59px;color:#3a3532;font-weight:bold;overflow:hidden;width:56px;">A Reverb</span>
<div style="left:890.7px;top:120px;width:59.299999999999955px;height:16px;background:#fbfbfb;"></div>
<span class="t" style="left:893.2px;top:127px;font-size:6.6px;line-height:7.59px;color:#2a2622;font-weight:bold;overflow:hidden;width:56px;">Master</span>
<svg style="left:328px;top:124px" width="10" height="10" viewBox="0 0 10 10"><circle cx="5" cy="5" r="4" fill="none" stroke="#3a4a10" stroke-width="0.9"/><path d="M3,4 h4 l-2,2.5z" fill="#3a4a10"/></svg>
<svg style="left:387px;top:124px" width="10" height="10" viewBox="0 0 10 10"><circle cx="5" cy="5" r="4" fill="none" stroke="#4a4520" stroke-width="0.9"/><path d="M3,4 h3 v2.5 M5,5.5 l1,1 l1,-1" fill="none" stroke="#4a4520" stroke-width="0.8"/></svg>
<svg style="left:653px;top:124px" width="10" height="10" viewBox="0 0 10 10"><circle cx="5" cy="5" r="4" fill="none" stroke="#1a4a40" stroke-width="0.9"/><path d="M3,4 h3 v2.5 M5,5.5 l1,1 l1,-1" fill="none" stroke="#1a4a40" stroke-width="0.8"/></svg>
<div style="left:314.2px;top:136.0px;width:24.0px;height:11.425000000000011px;background:#988f8a;"></div>
<div style="left:314.2px;top:147.425px;width:24.0px;height:11.424999999999983px;background:#b3d03a;"></div>
<div style="left:314.2px;top:158.85px;width:24.0px;height:11.425000000000011px;background:#b3d03a;"></div>
<div style="left:314.2px;top:170.275px;width:24.0px;height:11.424999999999983px;background:#988f8a;"></div>
<div style="left:314.2px;top:181.7px;width:24.0px;height:11.425000000000011px;background:#988f8a;"></div>
<div style="left:314.2px;top:193.125px;width:24.0px;height:11.425000000000011px;background:#988f8a;"></div>
<div style="left:314.2px;top:204.55px;width:24.0px;height:11.425000000000011px;background:#988f8a;"></div>
<div style="left:314.2px;top:215.97500000000002px;width:24.0px;height:11.424999999999983px;background:#988f8a;"></div>
<div style="left:314.2px;top:229.5px;width:24.0px;height:11.5px;background:#988f8a;"></div>
<div style="left:339.4px;top:136.0px;width:59.200000000000045px;height:11.425000000000011px;background:#988f8a;"></div>
<div style="left:342.0px;top:139.6625px;width:5.5px;height:5.5px;background:#5a5450;"></div>
<div style="left:339.4px;top:147.425px;width:59.200000000000045px;height:11.424999999999983px;background:#988f8a;"></div>
<svg style="left:342.0px;top:150.3875px" width="6" height="7" viewBox="0 0 6 7"><path d="M0.5,0.5 L5.5,3.5 L0.5,6.5z" fill="#3a3633"/></svg>
<svg style="left:390.1px;top:148.925px" width="8.5" height="9.924999999999983" viewBox="0 0 8.5 9.924999999999983"><defs><pattern id="hp11" width="3" height="3" patternUnits="userSpaceOnUse" patternTransform="rotate(45)"><rect width="1.5" height="3" fill="#f0e98c"/></pattern></defs><rect width="8.5" height="9.924999999999983" fill="url(#hp11)"/></svg>
<div style="left:339.4px;top:158.85px;width:59.200000000000045px;height:11.425000000000011px;background:#b5aea9;"></div>
<svg style="left:342.0px;top:161.8125px" width="6" height="7" viewBox="0 0 6 7"><path d="M0.5,0.5 L5.5,3.5 L0.5,6.5z" fill="#6ab07a"/></svg>
<svg style="left:390.1px;top:160.35px" width="8.5" height="9.925000000000011" viewBox="0 0 8.5 9.925000000000011"><defs><pattern id="hp12" width="3" height="3" patternUnits="userSpaceOnUse" patternTransform="rotate(45)"><rect width="1.5" height="3" fill="#f0e98c"/></pattern></defs><rect width="8.5" height="9.925000000000011" fill="url(#hp12)"/></svg>
<div style="left:339.4px;top:170.275px;width:59.200000000000045px;height:11.424999999999983px;background:#988f8a;"></div>
<svg style="left:342.0px;top:173.2375px" width="6" height="7" viewBox="0 0 6 7"><path d="M0.5,0.5 L5.5,3.5 L0.5,6.5z" fill="#2a5a40"/></svg>
<svg style="left:390.1px;top:171.775px" width="8.5" height="9.924999999999983" viewBox="0 0 8.5 9.924999999999983"><defs><pattern id="hp13" width="3" height="3" patternUnits="userSpaceOnUse" patternTransform="rotate(45)"><rect width="1.5" height="3" fill="#f0e98c"/></pattern></defs><rect width="8.5" height="9.924999999999983" fill="url(#hp13)"/></svg>
<div style="left:339.4px;top:181.7px;width:59.200000000000045px;height:11.425000000000011px;background:#988f8a;"></div>
<svg style="left:342.0px;top:184.6625px" width="6" height="7" viewBox="0 0 6 7"><path d="M0.5,0.5 L5.5,3.5 L0.5,6.5z" fill="#3a3633"/></svg>
<svg style="left:390.1px;top:183.2px" width="8.5" height="9.925000000000011" viewBox="0 0 8.5 9.925000000000011"><defs><pattern id="hp14" width="3" height="3" patternUnits="userSpaceOnUse" patternTransform="rotate(45)"><rect width="1.5" height="3" fill="#f0e98c"/></pattern></defs><rect width="8.5" height="9.925000000000011" fill="url(#hp14)"/></svg>
<div style="left:339.4px;top:193.125px;width:59.200000000000045px;height:11.425000000000011px;background:#988f8a;"></div>
<div style="left:342.0px;top:196.7875px;width:5.5px;height:5.5px;background:#5a5450;"></div>
<div style="left:339.4px;top:204.55px;width:59.200000000000045px;height:11.425000000000011px;background:#988f8a;"></div>
<div style="left:342.0px;top:208.2125px;width:5.5px;height:5.5px;background:#5a5450;"></div>
<div style="left:339.4px;top:215.97500000000002px;width:59.200000000000045px;height:11.424999999999983px;background:#988f8a;"></div>
<div style="left:342.0px;top:219.6375px;width:5.5px;height:5.5px;background:#5a5450;"></div>
<div style="left:339.4px;top:229.5px;width:59.200000000000045px;height:11.5px;background:#988f8a;"></div>
<div style="left:342.0px;top:232.5px;width:5.5px;height:5.5px;background:#5a5450;"></div>
<div style="left:399.8px;top:136.0px;width:47.0px;height:11.425000000000011px;background:#988f8a;"></div>
<div style="left:402.40000000000003px;top:139.6625px;width:5.5px;height:5.5px;background:#5a5450;"></div>
<div style="left:399.8px;top:147.425px;width:47.0px;height:11.424999999999983px;background:#988f8a;"></div>
<div style="left:399.8px;top:148.925px;width:47.0px;height:9.924999999999983px;background:#f0e98c;"></div>
<div style="left:409.8px;top:148.925px;width:0.8px;height:9.924999999999983px;background:#8a8650;"></div>
<svg style="left:402.3px;top:150.3875px" width="6" height="7" viewBox="0 0 6 7"><path d="M0.5,0.5 L5.5,3.5 L0.5,6.5z" fill="#23211f"/></svg>
<div style="left:399.8px;top:158.85px;width:47.0px;height:11.425000000000011px;background:#b5aea9;"></div>
<div style="left:399.8px;top:160.35px;width:47.0px;height:9.925000000000011px;background:#f0e98c;"></div>
<div style="left:409.8px;top:160.35px;width:0.8px;height:9.925000000000011px;background:#8a8650;"></div>
<svg style="left:402.3px;top:161.8125px" width="6" height="7" viewBox="0 0 6 7"><path d="M0.5,0.5 L5.5,3.5 L0.5,6.5z" fill="#23211f"/></svg>
<div style="left:399.8px;top:170.275px;width:47.0px;height:11.424999999999983px;background:#988f8a;"></div>
<div style="left:402.40000000000003px;top:173.9375px;width:5.5px;height:5.5px;background:#5a5450;"></div>
<div style="left:399.8px;top:181.7px;width:47.0px;height:11.425000000000011px;background:#988f8a;"></div>
<div style="left:399.8px;top:183.2px;width:47.0px;height:9.925000000000011px;background:#f0e98c;"></div>
<div style="left:409.8px;top:183.2px;width:0.8px;height:9.925000000000011px;background:#8a8650;"></div>
<svg style="left:402.3px;top:184.6625px" width="6" height="7" viewBox="0 0 6 7"><path d="M0.5,0.5 L5.5,3.5 L0.5,6.5z" fill="#23211f"/></svg>
<div style="left:399.8px;top:193.125px;width:47.0px;height:11.425000000000011px;background:#988f8a;"></div>
<div style="left:402.40000000000003px;top:196.7875px;width:5.5px;height:5.5px;background:#5a5450;"></div>
<div style="left:399.8px;top:204.55px;width:47.0px;height:11.425000000000011px;background:#988f8a;"></div>
<div style="left:402.40000000000003px;top:208.2125px;width:5.5px;height:5.5px;background:#5a5450;"></div>
<div style="left:399.8px;top:215.97500000000002px;width:47.0px;height:11.424999999999983px;background:#988f8a;"></div>
<div style="left:402.40000000000003px;top:219.6375px;width:5.5px;height:5.5px;background:#5a5450;"></div>
<div style="left:399.8px;top:229.5px;width:47.0px;height:11.5px;background:#988f8a;"></div>
<div style="left:402.40000000000003px;top:232.5px;width:5.5px;height:5.5px;background:#5a5450;"></div>
<div style="left:448.0px;top:136.0px;width:47.60000000000002px;height:11.425000000000011px;background:#988f8a;"></div>
<div style="left:450.6px;top:139.6625px;width:5.5px;height:5.5px;background:#5a5450;"></div>
<div style="left:448.0px;top:147.425px;width:47.60000000000002px;height:11.424999999999983px;background:#988f8a;"></div>
<div style="left:448.0px;top:148.925px;width:47.60000000000002px;height:9.924999999999983px;background:#f0e98c;"></div>
<div style="left:458.0px;top:148.925px;width:0.8px;height:9.924999999999983px;background:#8a8650;"></div>
<svg style="left:450.5px;top:150.3875px" width="6" height="7" viewBox="0 0 6 7"><path d="M0.5,0.5 L5.5,3.5 L0.5,6.5z" fill="#23211f"/></svg>
<div style="left:448.0px;top:158.85px;width:47.60000000000002px;height:11.425000000000011px;background:#b5aea9;"></div>
<div style="left:448.0px;top:160.35px;width:47.60000000000002px;height:9.925000000000011px;background:#f0e98c;"></div>
<div style="left:458.0px;top:160.35px;width:0.8px;height:9.925000000000011px;background:#8a8650;"></div>
<svg style="left:450.5px;top:161.8125px" width="6" height="7" viewBox="0 0 6 7"><path d="M0.5,0.5 L5.5,3.5 L0.5,6.5z" fill="#23211f"/></svg>
<div style="left:448.0px;top:170.275px;width:47.60000000000002px;height:11.424999999999983px;background:#988f8a;"></div>
<div style="left:450.6px;top:173.9375px;width:5.5px;height:5.5px;background:#5a5450;"></div>
<div style="left:448.0px;top:181.7px;width:47.60000000000002px;height:11.425000000000011px;background:#988f8a;"></div>
<div style="left:450.6px;top:185.36249999999998px;width:5.5px;height:5.5px;background:#5a5450;"></div>
<div style="left:448.0px;top:193.125px;width:47.60000000000002px;height:11.425000000000011px;background:#988f8a;"></div>
<div style="left:450.6px;top:196.7875px;width:5.5px;height:5.5px;background:#5a5450;"></div>
<div style="left:448.0px;top:204.55px;width:47.60000000000002px;height:11.425000000000011px;background:#988f8a;"></div>
<div style="left:450.6px;top:208.2125px;width:5.5px;height:5.5px;background:#5a5450;"></div>
<div style="left:448.0px;top:215.97500000000002px;width:47.60000000000002px;height:11.424999999999983px;background:#988f8a;"></div>
<div style="left:450.6px;top:219.6375px;width:5.5px;height:5.5px;background:#5a5450;"></div>
<div style="left:448.0px;top:229.5px;width:47.60000000000002px;height:11.5px;background:#988f8a;"></div>
<div style="left:450.6px;top:232.5px;width:5.5px;height:5.5px;background:#5a5450;"></div>
<div style="left:496.8px;top:136.0px;width:59.400000000000034px;height:11.425000000000011px;background:#aca49f;"></div>
<div style="left:499.6px;top:139.4625px;width:6px;height:6px;background:#5a5450;border-radius:50%"></div>
<div style="left:496.8px;top:147.425px;width:59.400000000000034px;height:11.424999999999983px;background:#aca49f;"></div>
<div style="left:496.8px;top:148.925px;width:59.400000000000034px;height:9.924999999999983px;background:#f0e98c;"></div>
<div style="left:506.8px;top:148.925px;width:0.8px;height:9.924999999999983px;background:#8a8650;"></div>
<svg style="left:499.3px;top:150.3875px" width="6" height="7" viewBox="0 0 6 7"><path d="M0.5,0.5 L5.5,3.5 L0.5,6.5z" fill="#5c5a2a"/></svg>
<div style="left:496.8px;top:158.85px;width:59.400000000000034px;height:11.425000000000011px;background:#b5aea9;"></div>
<div style="left:496.8px;top:160.35px;width:59.400000000000034px;height:9.925000000000011px;background:#f0e98c;"></div>
<div style="left:506.8px;top:160.35px;width:0.8px;height:9.925000000000011px;background:#8a8650;"></div>
<div style="left:496.8px;top:160.35px;width:10px;height:9.925000000000011px;background:#1f1d1b;"></div>
<svg style="left:499.3px;top:161.8125px" width="6" height="7" viewBox="0 0 6 7"><path d="M0.5,0.5 L5.5,3.5 L0.5,6.5z" fill="#5fae6a"/></svg>
<div style="left:496.8px;top:170.275px;width:59.400000000000034px;height:11.424999999999983px;background:#aca49f;"></div>
<div style="left:496.8px;top:171.775px;width:59.400000000000034px;height:9.924999999999983px;background:#f0e98c;"></div>
<div style="left:506.8px;top:171.775px;width:0.8px;height:9.924999999999983px;background:#8a8650;"></div>
<div style="left:496.8px;top:171.775px;width:10px;height:9.924999999999983px;background:#1f1d1b;"></div>
<svg style="left:499.3px;top:173.2375px" width="6" height="7" viewBox="0 0 6 7"><path d="M0.5,0.5 L5.5,3.5 L0.5,6.5z" fill="#2f5a3a"/></svg>
<div style="left:496.8px;top:181.7px;width:59.400000000000034px;height:11.425000000000011px;background:#aca49f;"></div>
<div style="left:499.6px;top:185.1625px;width:6px;height:6px;background:#5a5450;border-radius:50%"></div>
<div style="left:496.8px;top:193.125px;width:59.400000000000034px;height:11.425000000000011px;background:#aca49f;"></div>
<div style="left:499.6px;top:196.5875px;width:6px;height:6px;background:#5a5450;border-radius:50%"></div>
<div style="left:496.8px;top:204.55px;width:59.400000000000034px;height:11.425000000000011px;background:#aca49f;"></div>
<div style="left:499.6px;top:208.01250000000002px;width:6px;height:6px;background:#5a5450;border-radius:50%"></div>
<div style="left:496.8px;top:215.97500000000002px;width:59.400000000000034px;height:11.424999999999983px;background:#aca49f;"></div>
<div style="left:499.6px;top:219.4375px;width:6px;height:6px;background:#5a5450;border-radius:50%"></div>
<div style="left:496.8px;top:229.5px;width:59.400000000000034px;height:11.5px;background:#aca49f;"></div>
<div style="left:499.40000000000003px;top:232.5px;width:5.5px;height:5.5px;background:#5a5450;"></div>
<div style="left:557.4000000000001px;top:136.0px;width:47.499999999999886px;height:11.425000000000011px;background:#988f8a;"></div>
<div style="left:560.0000000000001px;top:139.6625px;width:5.5px;height:5.5px;background:#5a5450;"></div>
<div style="left:557.4000000000001px;top:147.425px;width:47.499999999999886px;height:11.424999999999983px;background:#988f8a;"></div>
<div style="left:560.0000000000001px;top:151.08749999999998px;width:5.5px;height:5.5px;background:#5a5450;"></div>
<div style="left:557.4000000000001px;top:158.85px;width:47.499999999999886px;height:11.425000000000011px;background:#b5aea9;"></div>
<div style="left:560.0000000000001px;top:162.5125px;width:5.5px;height:5.5px;background:#5a5450;"></div>
<div style="left:557.4000000000001px;top:170.275px;width:47.499999999999886px;height:11.424999999999983px;background:#988f8a;"></div>
<div style="left:560.0000000000001px;top:173.9375px;width:5.5px;height:5.5px;background:#5a5450;"></div>
<div style="left:557.4000000000001px;top:181.7px;width:47.499999999999886px;height:11.425000000000011px;background:#988f8a;"></div>
<div style="left:560.0000000000001px;top:185.36249999999998px;width:5.5px;height:5.5px;background:#5a5450;"></div>
<div style="left:557.4000000000001px;top:193.125px;width:47.499999999999886px;height:11.425000000000011px;background:#988f8a;"></div>
<div style="left:560.0000000000001px;top:196.7875px;width:5.5px;height:5.5px;background:#5a5450;"></div>
<div style="left:557.4000000000001px;top:204.55px;width:47.499999999999886px;height:11.425000000000011px;background:#988f8a;"></div>
<div style="left:560.0000000000001px;top:208.2125px;width:5.5px;height:5.5px;background:#5a5450;"></div>
<div style="left:557.4000000000001px;top:215.97500000000002px;width:47.499999999999886px;height:11.424999999999983px;background:#988f8a;"></div>
<div style="left:560.0000000000001px;top:219.6375px;width:5.5px;height:5.5px;background:#5a5450;"></div>
<div style="left:557.4000000000001px;top:229.5px;width:47.499999999999886px;height:11.5px;background:#988f8a;"></div>
<div style="left:560.0000000000001px;top:232.5px;width:5.5px;height:5.5px;background:#5a5450;"></div>
<div style="left:606.1px;top:136.0px;width:59.10000000000002px;height:11.425000000000011px;background:#988f8a;"></div>
<div style="left:608.7px;top:139.6625px;width:5.5px;height:5.5px;background:#5a5450;"></div>
<div style="left:606.1px;top:147.425px;width:59.10000000000002px;height:11.424999999999983px;background:#988f8a;"></div>
<svg style="left:608.7px;top:150.3875px" width="6" height="7" viewBox="0 0 6 7"><path d="M0.5,0.5 L5.5,3.5 L0.5,6.5z" fill="#5a5450"/></svg>
<svg style="left:656.7px;top:148.925px" width="8.5" height="9.924999999999983" viewBox="0 0 8.5 9.924999999999983"><defs><pattern id="tp61" width="3" height="3" patternUnits="userSpaceOnUse" patternTransform="rotate(45)"><rect width="1.5" height="3" fill="#52b9a1"/></pattern></defs><rect width="8.5" height="9.924999999999983" fill="url(#tp61)"/></svg>
<div style="left:606.1px;top:158.85px;width:59.10000000000002px;height:11.425000000000011px;background:#b5aea9;"></div>
<svg style="left:608.7px;top:161.8125px" width="6" height="7" viewBox="0 0 6 7"><path d="M0.5,0.5 L5.5,3.5 L0.5,6.5z" fill="#5a5450"/></svg>
<svg style="left:656.7px;top:160.35px" width="8.5" height="9.925000000000011" viewBox="0 0 8.5 9.925000000000011"><defs><pattern id="tp62" width="3" height="3" patternUnits="userSpaceOnUse" patternTransform="rotate(45)"><rect width="1.5" height="3" fill="#52b9a1"/></pattern></defs><rect width="8.5" height="9.925000000000011" fill="url(#tp62)"/></svg>
<div style="left:606.1px;top:170.275px;width:59.10000000000002px;height:11.424999999999983px;background:#988f8a;"></div>
<svg style="left:608.7px;top:173.2375px" width="6" height="7" viewBox="0 0 6 7"><path d="M0.5,0.5 L5.5,3.5 L0.5,6.5z" fill="#5a5450"/></svg>
<svg style="left:656.7px;top:171.775px" width="8.5" height="9.924999999999983" viewBox="0 0 8.5 9.924999999999983"><defs><pattern id="tp63" width="3" height="3" patternUnits="userSpaceOnUse" patternTransform="rotate(45)"><rect width="1.5" height="3" fill="#52b9a1"/></pattern></defs><rect width="8.5" height="9.924999999999983" fill="url(#tp63)"/></svg>
<div style="left:606.1px;top:181.7px;width:59.10000000000002px;height:11.425000000000011px;background:#988f8a;"></div>
<svg style="left:608.7px;top:184.6625px" width="6" height="7" viewBox="0 0 6 7"><path d="M0.5,0.5 L5.5,3.5 L0.5,6.5z" fill="#5a5450"/></svg>
<svg style="left:656.7px;top:183.2px" width="8.5" height="9.925000000000011" viewBox="0 0 8.5 9.925000000000011"><defs><pattern id="tp64" width="3" height="3" patternUnits="userSpaceOnUse" patternTransform="rotate(45)"><rect width="1.5" height="3" fill="#52b9a1"/></pattern></defs><rect width="8.5" height="9.925000000000011" fill="url(#tp64)"/></svg>
<div style="left:606.1px;top:193.125px;width:59.10000000000002px;height:11.425000000000011px;background:#988f8a;"></div>
<div style="left:608.7px;top:196.7875px;width:5.5px;height:5.5px;background:#5a5450;"></div>
<div style="left:606.1px;top:204.55px;width:59.10000000000002px;height:11.425000000000011px;background:#988f8a;"></div>
<div style="left:608.7px;top:208.2125px;width:5.5px;height:5.5px;background:#5a5450;"></div>
<div style="left:606.1px;top:215.97500000000002px;width:59.10000000000002px;height:11.424999999999983px;background:#988f8a;"></div>
<div style="left:608.7px;top:219.6375px;width:5.5px;height:5.5px;background:#5a5450;"></div>
<div style="left:606.1px;top:229.5px;width:59.10000000000002px;height:11.5px;background:#988f8a;"></div>
<div style="left:608.7px;top:232.5px;width:5.5px;height:5.5px;background:#5a5450;"></div>
<div style="left:666.4000000000001px;top:136.0px;width:59.69999999999993px;height:11.425000000000011px;background:#988f8a;"></div>
<div style="left:669.0000000000001px;top:139.6625px;width:5.5px;height:5.5px;background:#5a5450;"></div>
<div style="left:666.4000000000001px;top:147.425px;width:59.69999999999993px;height:11.424999999999983px;background:#988f8a;"></div>
<div style="left:666.4000000000001px;top:148.925px;width:59.69999999999993px;height:9.924999999999983px;background:#52b9a1;"></div>
<div style="left:676.4000000000001px;top:148.925px;width:0.8px;height:9.924999999999983px;background:#2f7a68;"></div>
<svg style="left:668.9000000000001px;top:150.3875px" width="6" height="7" viewBox="0 0 6 7"><path d="M0.5,0.5 L5.5,3.5 L0.5,6.5z" fill="#23211f"/></svg>
<div style="left:666.4000000000001px;top:158.85px;width:59.69999999999993px;height:11.425000000000011px;background:#b5aea9;"></div>
<div style="left:666.4000000000001px;top:160.35px;width:59.69999999999993px;height:9.925000000000011px;background:#52b9a1;"></div>
<div style="left:676.4000000000001px;top:160.35px;width:0.8px;height:9.925000000000011px;background:#2f7a68;"></div>
<svg style="left:668.9000000000001px;top:161.8125px" width="6" height="7" viewBox="0 0 6 7"><path d="M0.5,0.5 L5.5,3.5 L0.5,6.5z" fill="#23211f"/></svg>
<div style="left:666.4000000000001px;top:170.275px;width:59.69999999999993px;height:11.424999999999983px;background:#988f8a;"></div>
<div style="left:666.4000000000001px;top:171.775px;width:59.69999999999993px;height:9.924999999999983px;background:#52b9a1;"></div>
<div style="left:676.4000000000001px;top:171.775px;width:0.8px;height:9.924999999999983px;background:#2f7a68;"></div>
<svg style="left:668.9000000000001px;top:173.2375px" width="6" height="7" viewBox="0 0 6 7"><path d="M0.5,0.5 L5.5,3.5 L0.5,6.5z" fill="#23211f"/></svg>
<div style="left:666.4000000000001px;top:181.7px;width:59.69999999999993px;height:11.425000000000011px;background:#988f8a;"></div>
<div style="left:666.4000000000001px;top:183.2px;width:59.69999999999993px;height:9.925000000000011px;background:#52b9a1;"></div>
<div style="left:676.4000000000001px;top:183.2px;width:0.8px;height:9.925000000000011px;background:#2f7a68;"></div>
<svg style="left:668.9000000000001px;top:184.6625px" width="6" height="7" viewBox="0 0 6 7"><path d="M0.5,0.5 L5.5,3.5 L0.5,6.5z" fill="#23211f"/></svg>
<div style="left:666.4000000000001px;top:193.125px;width:59.69999999999993px;height:11.425000000000011px;background:#988f8a;"></div>
<div style="left:669.0000000000001px;top:196.7875px;width:5.5px;height:5.5px;background:#5a5450;"></div>
<div style="left:666.4000000000001px;top:204.55px;width:59.69999999999993px;height:11.425000000000011px;background:#988f8a;"></div>
<div style="left:669.0000000000001px;top:208.2125px;width:5.5px;height:5.5px;background:#5a5450;"></div>
<div style="left:666.4000000000001px;top:215.97500000000002px;width:59.69999999999993px;height:11.424999999999983px;background:#988f8a;"></div>
<div style="left:669.0000000000001px;top:219.6375px;width:5.5px;height:5.5px;background:#5a5450;"></div>
<div style="left:666.4000000000001px;top:229.5px;width:59.69999999999993px;height:11.5px;background:#988f8a;"></div>
<div style="left:669.0000000000001px;top:232.5px;width:5.5px;height:5.5px;background:#5a5450;"></div>
<div style="left:727.3000000000001px;top:136.0px;width:59.69999999999993px;height:11.425000000000011px;background:#988f8a;"></div>
<div style="left:729.9000000000001px;top:139.6625px;width:5.5px;height:5.5px;background:#5a5450;"></div>
<div style="left:727.3000000000001px;top:147.425px;width:59.69999999999993px;height:11.424999999999983px;background:#988f8a;"></div>
<div style="left:727.3000000000001px;top:148.925px;width:59.69999999999993px;height:9.924999999999983px;background:#52b9a1;"></div>
<div style="left:737.3000000000001px;top:148.925px;width:0.8px;height:9.924999999999983px;background:#2f7a68;"></div>
<svg style="left:729.8000000000001px;top:150.3875px" width="6" height="7" viewBox="0 0 6 7"><path d="M0.5,0.5 L5.5,3.5 L0.5,6.5z" fill="#23211f"/></svg>
<div style="left:727.3000000000001px;top:158.85px;width:59.69999999999993px;height:11.425000000000011px;background:#b5aea9;"></div>
<div style="left:727.3000000000001px;top:160.35px;width:59.69999999999993px;height:9.925000000000011px;background:#52b9a1;"></div>
<div style="left:737.3000000000001px;top:160.35px;width:0.8px;height:9.925000000000011px;background:#2f7a68;"></div>
<svg style="left:729.8000000000001px;top:161.8125px" width="6" height="7" viewBox="0 0 6 7"><path d="M0.5,0.5 L5.5,3.5 L0.5,6.5z" fill="#23211f"/></svg>
<div style="left:727.3000000000001px;top:170.275px;width:59.69999999999993px;height:11.424999999999983px;background:#988f8a;"></div>
<div style="left:729.9000000000001px;top:173.9375px;width:5.5px;height:5.5px;background:#5a5450;"></div>
<div style="left:727.3000000000001px;top:181.7px;width:59.69999999999993px;height:11.425000000000011px;background:#988f8a;"></div>
<div style="left:729.9000000000001px;top:185.36249999999998px;width:5.5px;height:5.5px;background:#5a5450;"></div>
<div style="left:727.3000000000001px;top:193.125px;width:59.69999999999993px;height:11.425000000000011px;background:#988f8a;"></div>
<div style="left:729.9000000000001px;top:196.7875px;width:5.5px;height:5.5px;background:#5a5450;"></div>
<div style="left:727.3000000000001px;top:204.55px;width:59.69999999999993px;height:11.425000000000011px;background:#988f8a;"></div>
<div style="left:729.9000000000001px;top:208.2125px;width:5.5px;height:5.5px;background:#5a5450;"></div>
<div style="left:727.3000000000001px;top:215.97500000000002px;width:59.69999999999993px;height:11.424999999999983px;background:#988f8a;"></div>
<div style="left:729.9000000000001px;top:219.6375px;width:5.5px;height:5.5px;background:#5a5450;"></div>
<div style="left:727.3000000000001px;top:229.5px;width:59.69999999999993px;height:11.5px;background:#988f8a;"></div>
<div style="left:729.9000000000001px;top:232.5px;width:5.5px;height:5.5px;background:#5a5450;"></div>
<div style="left:788.2px;top:136.0px;width:41.0px;height:11.425000000000011px;background:#988f8a;"></div>
<div style="left:790.8000000000001px;top:139.6625px;width:5.5px;height:5.5px;background:#5a5450;"></div>
<div style="left:788.2px;top:147.425px;width:41.0px;height:11.424999999999983px;background:#988f8a;"></div>
<div style="left:788.2px;top:148.925px;width:41.0px;height:9.924999999999983px;background:#52b9a1;"></div>
<div style="left:798.2px;top:148.925px;width:0.8px;height:9.924999999999983px;background:#2f7a68;"></div>
<svg style="left:790.7px;top:150.3875px" width="6" height="7" viewBox="0 0 6 7"><path d="M0.5,0.5 L5.5,3.5 L0.5,6.5z" fill="#23211f"/></svg>
<div style="left:788.2px;top:158.85px;width:41.0px;height:11.425000000000011px;background:#b5aea9;"></div>
<div style="left:790.8000000000001px;top:162.5125px;width:5.5px;height:5.5px;background:#5a5450;"></div>
<div style="left:788.2px;top:170.275px;width:41.0px;height:11.424999999999983px;background:#988f8a;"></div>
<div style="left:788.2px;top:171.775px;width:41.0px;height:9.924999999999983px;background:#52b9a1;"></div>
<div style="left:798.2px;top:171.775px;width:0.8px;height:9.924999999999983px;background:#2f7a68;"></div>
<svg style="left:790.7px;top:173.2375px" width="6" height="7" viewBox="0 0 6 7"><path d="M0.5,0.5 L5.5,3.5 L0.5,6.5z" fill="#23211f"/></svg>
<div style="left:788.2px;top:181.7px;width:41.0px;height:11.425000000000011px;background:#988f8a;"></div>
<div style="left:790.8000000000001px;top:185.36249999999998px;width:5.5px;height:5.5px;background:#5a5450;"></div>
<div style="left:788.2px;top:193.125px;width:41.0px;height:11.425000000000011px;background:#988f8a;"></div>
<div style="left:790.8000000000001px;top:196.7875px;width:5.5px;height:5.5px;background:#5a5450;"></div>
<div style="left:788.2px;top:204.55px;width:41.0px;height:11.425000000000011px;background:#988f8a;"></div>
<div style="left:790.8000000000001px;top:208.2125px;width:5.5px;height:5.5px;background:#5a5450;"></div>
<div style="left:788.2px;top:215.97500000000002px;width:41.0px;height:11.424999999999983px;background:#988f8a;"></div>
<div style="left:790.8000000000001px;top:219.6375px;width:5.5px;height:5.5px;background:#5a5450;"></div>
<div style="left:788.2px;top:229.5px;width:41.0px;height:11.5px;background:#988f8a;"></div>
<div style="left:790.8000000000001px;top:232.5px;width:5.5px;height:5.5px;background:#5a5450;"></div>
<div style="left:830.4000000000001px;top:136.0px;width:59.09999999999991px;height:11.425000000000011px;background:#988f8a;"></div>
<div style="left:830.4000000000001px;top:147.425px;width:59.09999999999991px;height:11.424999999999983px;background:#988f8a;"></div>
<div style="left:830.4000000000001px;top:158.85px;width:59.09999999999991px;height:11.425000000000011px;background:#b5aea9;"></div>
<div style="left:830.4000000000001px;top:170.275px;width:59.09999999999991px;height:11.424999999999983px;background:#988f8a;"></div>
<div style="left:830.4000000000001px;top:181.7px;width:59.09999999999991px;height:11.425000000000011px;background:#988f8a;"></div>
<div style="left:830.4000000000001px;top:193.125px;width:59.09999999999991px;height:11.425000000000011px;background:#988f8a;"></div>
<div style="left:830.4000000000001px;top:204.55px;width:59.09999999999991px;height:11.425000000000011px;background:#988f8a;"></div>
<div style="left:830.4000000000001px;top:215.97500000000002px;width:59.09999999999991px;height:11.424999999999983px;background:#988f8a;"></div>
<div style="left:830.4000000000001px;top:229.5px;width:59.09999999999991px;height:11.5px;background:#988f8a;"></div>
<div style="left:890.7px;top:136.0px;width:59.299999999999955px;height:11.425000000000011px;background:#988f8a;"></div>
<div style="left:939px;top:137.5px;width:11px;height:9.925000000000011px;background:#8f8782;"></div>
<svg style="left:893.3000000000001px;top:138.9625px" width="6" height="7" viewBox="0 0 6 7"><path d="M0.5,0.5 L5.5,3.5 L0.5,6.5z" fill="#5a5450"/></svg>
<span class="t" style="left:894.7px;top:138.26250000000002px;width:100px;text-align:center;font-size:7px;line-height:8.05px;color:#2e2a27;">1</span>
<div style="left:890.7px;top:147.425px;width:59.299999999999955px;height:11.424999999999983px;background:#988f8a;"></div>
<div style="left:939px;top:148.925px;width:11px;height:9.924999999999983px;background:#8f8782;"></div>
<svg style="left:893.3000000000001px;top:150.3875px" width="6" height="7" viewBox="0 0 6 7"><path d="M0.5,0.5 L5.5,3.5 L0.5,6.5z" fill="#5a5450"/></svg>
<span class="t" style="left:894.7px;top:149.6875px;width:100px;text-align:center;font-size:7px;line-height:8.05px;color:#2e2a27;">2</span>
<div style="left:890.7px;top:158.85px;width:59.299999999999955px;height:11.425000000000011px;background:#b5aea9;"></div>
<div style="left:939px;top:160.35px;width:11px;height:9.925000000000011px;background:#9e9691;"></div>
<svg style="left:893.3000000000001px;top:161.8125px" width="6" height="7" viewBox="0 0 6 7"><path d="M0.5,0.5 L5.5,3.5 L0.5,6.5z" fill="#5a5450"/></svg>
<span class="t" style="left:894.7px;top:161.1125px;width:100px;text-align:center;font-size:7px;line-height:8.05px;color:#2e2a27;">3</span>
<div style="left:890.7px;top:170.275px;width:59.299999999999955px;height:11.424999999999983px;background:#988f8a;"></div>
<div style="left:939px;top:171.775px;width:11px;height:9.924999999999983px;background:#8f8782;"></div>
<svg style="left:893.3000000000001px;top:173.2375px" width="6" height="7" viewBox="0 0 6 7"><path d="M0.5,0.5 L5.5,3.5 L0.5,6.5z" fill="#5a5450"/></svg>
<span class="t" style="left:894.7px;top:172.53750000000002px;width:100px;text-align:center;font-size:7px;line-height:8.05px;color:#2e2a27;">4</span>
<div style="left:890.7px;top:181.7px;width:59.299999999999955px;height:11.425000000000011px;background:#988f8a;"></div>
<div style="left:939px;top:183.2px;width:11px;height:9.925000000000011px;background:#8f8782;"></div>
<svg style="left:893.3000000000001px;top:184.6625px" width="6" height="7" viewBox="0 0 6 7"><path d="M0.5,0.5 L5.5,3.5 L0.5,6.5z" fill="#5a5450"/></svg>
<span class="t" style="left:894.7px;top:183.9625px;width:100px;text-align:center;font-size:7px;line-height:8.05px;color:#2e2a27;">5</span>
<div style="left:890.7px;top:193.125px;width:59.299999999999955px;height:11.425000000000011px;background:#988f8a;"></div>
<div style="left:939px;top:194.625px;width:11px;height:9.925000000000011px;background:#8f8782;"></div>
<svg style="left:893.3000000000001px;top:196.0875px" width="6" height="7" viewBox="0 0 6 7"><path d="M0.5,0.5 L5.5,3.5 L0.5,6.5z" fill="#5a5450"/></svg>
<span class="t" style="left:894.7px;top:195.38750000000002px;width:100px;text-align:center;font-size:7px;line-height:8.05px;color:#2e2a27;">6</span>
<div style="left:890.7px;top:204.55px;width:59.299999999999955px;height:11.425000000000011px;background:#988f8a;"></div>
<div style="left:939px;top:206.05px;width:11px;height:9.925000000000011px;background:#8f8782;"></div>
<svg style="left:893.3000000000001px;top:207.51250000000002px" width="6" height="7" viewBox="0 0 6 7"><path d="M0.5,0.5 L5.5,3.5 L0.5,6.5z" fill="#5a5450"/></svg>
<span class="t" style="left:894.7px;top:206.81250000000003px;width:100px;text-align:center;font-size:7px;line-height:8.05px;color:#2e2a27;">7</span>
<div style="left:890.7px;top:215.97500000000002px;width:59.299999999999955px;height:11.424999999999983px;background:#988f8a;"></div>
<div style="left:939px;top:217.47500000000002px;width:11px;height:9.924999999999983px;background:#8f8782;"></div>
<svg style="left:893.3000000000001px;top:218.9375px" width="6" height="7" viewBox="0 0 6 7"><path d="M0.5,0.5 L5.5,3.5 L0.5,6.5z" fill="#5a5450"/></svg>
<span class="t" style="left:894.7px;top:218.2375px;width:100px;text-align:center;font-size:7px;line-height:8.05px;color:#2e2a27;">8</span>
<div style="left:890.7px;top:229.5px;width:59.299999999999955px;height:11.5px;background:#988f8a;"></div>
<div style="left:893.3000000000001px;top:232.5px;width:5.5px;height:5.5px;background:#5a5450;"></div>
<div style="left:314.2px;top:136.0px;width:24.0px;height:1.5px;background:#766e69;"></div>
<div style="left:314.2px;top:147.425px;width:24.0px;height:1.5px;background:#766e69;"></div>
<div style="left:314.2px;top:158.85px;width:24.0px;height:1.5px;background:#766e69;"></div>
<div style="left:314.2px;top:170.275px;width:24.0px;height:1.5px;background:#766e69;"></div>
<div style="left:314.2px;top:181.7px;width:24.0px;height:1.5px;background:#766e69;"></div>
<div style="left:314.2px;top:193.125px;width:24.0px;height:1.5px;background:#766e69;"></div>
<div style="left:314.2px;top:204.55px;width:24.0px;height:1.5px;background:#766e69;"></div>
<div style="left:314.2px;top:215.97500000000002px;width:24.0px;height:1.5px;background:#766e69;"></div>
<div style="left:339.4px;top:136.0px;width:59.200000000000045px;height:1.5px;background:#766e69;"></div>
<div style="left:339.4px;top:147.425px;width:59.200000000000045px;height:1.5px;background:#766e69;"></div>
<div style="left:339.4px;top:158.85px;width:59.200000000000045px;height:1.5px;background:#766e69;"></div>
<div style="left:339.4px;top:170.275px;width:59.200000000000045px;height:1.5px;background:#766e69;"></div>
<div style="left:339.4px;top:181.7px;width:59.200000000000045px;height:1.5px;background:#766e69;"></div>
<div style="left:339.4px;top:193.125px;width:59.200000000000045px;height:1.5px;background:#766e69;"></div>
<div style="left:339.4px;top:204.55px;width:59.200000000000045px;height:1.5px;background:#766e69;"></div>
<div style="left:339.4px;top:215.97500000000002px;width:59.200000000000045px;height:1.5px;background:#766e69;"></div>
<div style="left:399.8px;top:136.0px;width:47.0px;height:1.5px;background:#766e69;"></div>
<div style="left:399.8px;top:147.425px;width:47.0px;height:1.5px;background:#766e69;"></div>
<div style="left:399.8px;top:158.85px;width:47.0px;height:1.5px;background:#766e69;"></div>
<div style="left:399.8px;top:170.275px;width:47.0px;height:1.5px;background:#766e69;"></div>
<div style="left:399.8px;top:181.7px;width:47.0px;height:1.5px;background:#766e69;"></div>
<div style="left:399.8px;top:193.125px;width:47.0px;height:1.5px;background:#766e69;"></div>
<div style="left:399.8px;top:204.55px;width:47.0px;height:1.5px;background:#766e69;"></div>
<div style="left:399.8px;top:215.97500000000002px;width:47.0px;height:1.5px;background:#766e69;"></div>
<div style="left:448.0px;top:136.0px;width:47.60000000000002px;height:1.5px;background:#766e69;"></div>
<div style="left:448.0px;top:147.425px;width:47.60000000000002px;height:1.5px;background:#766e69;"></div>
<div style="left:448.0px;top:158.85px;width:47.60000000000002px;height:1.5px;background:#766e69;"></div>
<div style="left:448.0px;top:170.275px;width:47.60000000000002px;height:1.5px;background:#766e69;"></div>
<div style="left:448.0px;top:181.7px;width:47.60000000000002px;height:1.5px;background:#766e69;"></div>
<div style="left:448.0px;top:193.125px;width:47.60000000000002px;height:1.5px;background:#766e69;"></div>
<div style="left:448.0px;top:204.55px;width:47.60000000000002px;height:1.5px;background:#766e69;"></div>
<div style="left:448.0px;top:215.97500000000002px;width:47.60000000000002px;height:1.5px;background:#766e69;"></div>
<div style="left:496.8px;top:136.0px;width:59.400000000000034px;height:1.5px;background:#766e69;"></div>
<div style="left:496.8px;top:147.425px;width:59.400000000000034px;height:1.5px;background:#766e69;"></div>
<div style="left:496.8px;top:158.85px;width:59.400000000000034px;height:1.5px;background:#766e69;"></div>
<div style="left:496.8px;top:170.275px;width:59.400000000000034px;height:1.5px;background:#766e69;"></div>
<div style="left:496.8px;top:181.7px;width:59.400000000000034px;height:1.5px;background:#766e69;"></div>
<div style="left:496.8px;top:193.125px;width:59.400000000000034px;height:1.5px;background:#766e69;"></div>
<div style="left:496.8px;top:204.55px;width:59.400000000000034px;height:1.5px;background:#766e69;"></div>
<div style="left:496.8px;top:215.97500000000002px;width:59.400000000000034px;height:1.5px;background:#766e69;"></div>
<div style="left:557.4000000000001px;top:136.0px;width:47.499999999999886px;height:1.5px;background:#766e69;"></div>
<div style="left:557.4000000000001px;top:147.425px;width:47.499999999999886px;height:1.5px;background:#766e69;"></div>
<div style="left:557.4000000000001px;top:158.85px;width:47.499999999999886px;height:1.5px;background:#766e69;"></div>
<div style="left:557.4000000000001px;top:170.275px;width:47.499999999999886px;height:1.5px;background:#766e69;"></div>
<div style="left:557.4000000000001px;top:181.7px;width:47.499999999999886px;height:1.5px;background:#766e69;"></div>
<div style="left:557.4000000000001px;top:193.125px;width:47.499999999999886px;height:1.5px;background:#766e69;"></div>
<div style="left:557.4000000000001px;top:204.55px;width:47.499999999999886px;height:1.5px;background:#766e69;"></div>
<div style="left:557.4000000000001px;top:215.97500000000002px;width:47.499999999999886px;height:1.5px;background:#766e69;"></div>
<div style="left:606.1px;top:136.0px;width:59.10000000000002px;height:1.5px;background:#766e69;"></div>
<div style="left:606.1px;top:147.425px;width:59.10000000000002px;height:1.5px;background:#766e69;"></div>
<div style="left:606.1px;top:158.85px;width:59.10000000000002px;height:1.5px;background:#766e69;"></div>
<div style="left:606.1px;top:170.275px;width:59.10000000000002px;height:1.5px;background:#766e69;"></div>
<div style="left:606.1px;top:181.7px;width:59.10000000000002px;height:1.5px;background:#766e69;"></div>
<div style="left:606.1px;top:193.125px;width:59.10000000000002px;height:1.5px;background:#766e69;"></div>
<div style="left:606.1px;top:204.55px;width:59.10000000000002px;height:1.5px;background:#766e69;"></div>
<div style="left:606.1px;top:215.97500000000002px;width:59.10000000000002px;height:1.5px;background:#766e69;"></div>
<div style="left:666.4000000000001px;top:136.0px;width:59.69999999999993px;height:1.5px;background:#766e69;"></div>
<div style="left:666.4000000000001px;top:147.425px;width:59.69999999999993px;height:1.5px;background:#766e69;"></div>
<div style="left:666.4000000000001px;top:158.85px;width:59.69999999999993px;height:1.5px;background:#766e69;"></div>
<div style="left:666.4000000000001px;top:170.275px;width:59.69999999999993px;height:1.5px;background:#766e69;"></div>
<div style="left:666.4000000000001px;top:181.7px;width:59.69999999999993px;height:1.5px;background:#766e69;"></div>
<div style="left:666.4000000000001px;top:193.125px;width:59.69999999999993px;height:1.5px;background:#766e69;"></div>
<div style="left:666.4000000000001px;top:204.55px;width:59.69999999999993px;height:1.5px;background:#766e69;"></div>
<div style="left:666.4000000000001px;top:215.97500000000002px;width:59.69999999999993px;height:1.5px;background:#766e69;"></div>
<div style="left:727.3000000000001px;top:136.0px;width:59.69999999999993px;height:1.5px;background:#766e69;"></div>
<div style="left:727.3000000000001px;top:147.425px;width:59.69999999999993px;height:1.5px;background:#766e69;"></div>
<div style="left:727.3000000000001px;top:158.85px;width:59.69999999999993px;height:1.5px;background:#766e69;"></div>
<div style="left:727.3000000000001px;top:170.275px;width:59.69999999999993px;height:1.5px;background:#766e69;"></div>
<div style="left:727.3000000000001px;top:181.7px;width:59.69999999999993px;height:1.5px;background:#766e69;"></div>
<div style="left:727.3000000000001px;top:193.125px;width:59.69999999999993px;height:1.5px;background:#766e69;"></div>
<div style="left:727.3000000000001px;top:204.55px;width:59.69999999999993px;height:1.5px;background:#766e69;"></div>
<div style="left:727.3000000000001px;top:215.97500000000002px;width:59.69999999999993px;height:1.5px;background:#766e69;"></div>
<div style="left:788.2px;top:136.0px;width:41.0px;height:1.5px;background:#766e69;"></div>
<div style="left:788.2px;top:147.425px;width:41.0px;height:1.5px;background:#766e69;"></div>
<div style="left:788.2px;top:158.85px;width:41.0px;height:1.5px;background:#766e69;"></div>
<div style="left:788.2px;top:170.275px;width:41.0px;height:1.5px;background:#766e69;"></div>
<div style="left:788.2px;top:181.7px;width:41.0px;height:1.5px;background:#766e69;"></div>
<div style="left:788.2px;top:193.125px;width:41.0px;height:1.5px;background:#766e69;"></div>
<div style="left:788.2px;top:204.55px;width:41.0px;height:1.5px;background:#766e69;"></div>
<div style="left:788.2px;top:215.97500000000002px;width:41.0px;height:1.5px;background:#766e69;"></div>
<div style="left:830.4000000000001px;top:136.0px;width:59.09999999999991px;height:1.5px;background:#766e69;"></div>
<div style="left:830.4000000000001px;top:147.425px;width:59.09999999999991px;height:1.5px;background:#766e69;"></div>
<div style="left:830.4000000000001px;top:158.85px;width:59.09999999999991px;height:1.5px;background:#766e69;"></div>
<div style="left:830.4000000000001px;top:170.275px;width:59.09999999999991px;height:1.5px;background:#766e69;"></div>
<div style="left:830.4000000000001px;top:181.7px;width:59.09999999999991px;height:1.5px;background:#766e69;"></div>
<div style="left:830.4000000000001px;top:193.125px;width:59.09999999999991px;height:1.5px;background:#766e69;"></div>
<div style="left:830.4000000000001px;top:204.55px;width:59.09999999999991px;height:1.5px;background:#766e69;"></div>
<div style="left:830.4000000000001px;top:215.97500000000002px;width:59.09999999999991px;height:1.5px;background:#766e69;"></div>
<div style="left:890.7px;top:136.0px;width:59.299999999999955px;height:1.5px;background:#766e69;"></div>
<div style="left:890.7px;top:147.425px;width:59.299999999999955px;height:1.5px;background:#766e69;"></div>
<div style="left:890.7px;top:158.85px;width:59.299999999999955px;height:1.5px;background:#766e69;"></div>
<div style="left:890.7px;top:170.275px;width:59.299999999999955px;height:1.5px;background:#766e69;"></div>
<div style="left:890.7px;top:181.7px;width:59.299999999999955px;height:1.5px;background:#766e69;"></div>
<div style="left:890.7px;top:193.125px;width:59.299999999999955px;height:1.5px;background:#766e69;"></div>
<div style="left:890.7px;top:204.55px;width:59.299999999999955px;height:1.5px;background:#766e69;"></div>
<div style="left:890.7px;top:215.97500000000002px;width:59.299999999999955px;height:1.5px;background:#766e69;"></div>
<div style="left:312.8px;top:136px;width:1.7px;height:231px;background:#5d5752;"></div>
<div style="left:338.0px;top:136px;width:1.7px;height:231px;background:#5d5752;"></div>
<div style="left:398.40000000000003px;top:136px;width:1.7px;height:231px;background:#5d5752;"></div>
<div style="left:446.6px;top:136px;width:1.7px;height:231px;background:#5d5752;"></div>
<div style="left:495.40000000000003px;top:136px;width:1.7px;height:231px;background:#5d5752;"></div>
<div style="left:556.0px;top:136px;width:1.7px;height:231px;background:#5d5752;"></div>
<div style="left:604.6999999999999px;top:136px;width:1.7px;height:231px;background:#5d5752;"></div>
<div style="left:665.0px;top:136px;width:1.7px;height:231px;background:#5d5752;"></div>
<div style="left:725.9px;top:136px;width:1.7px;height:231px;background:#5d5752;"></div>
<div style="left:786.8px;top:136px;width:1.7px;height:231px;background:#5d5752;"></div>
<div style="left:829.0px;top:136px;width:1.7px;height:231px;background:#5d5752;"></div>
<div style="left:889.3px;top:136px;width:1.7px;height:231px;background:#5d5752;"></div>
<div style="left:949.8px;top:136px;width:1.7px;height:231px;background:#5d5752;"></div>
<svg style="left:313px;top:230px" width="9" height="10" viewBox="0 0 9 10"><circle cx="2" cy="5" r="3.5" fill="none" stroke="#4a4542"/></svg>
<span class="t" style="left:323px;top:231.5px;font-size:6.5px;line-height:7.47px;color:#2e2a27;">8</span>
<svg style="left:368px;top:230px" width="10" height="10" viewBox="0 0 10 10"><circle cx="5" cy="5" r="4" fill="#c8c0ba" stroke="#4a4542" stroke-width="0.9"/><path d="M5,5 V1 A4,4 0 0 1 8.5,3z" fill="#4a4542"/></svg>
<span class="t" style="left:514.5px;top:231.5px;font-size:6.5px;line-height:7.47px;color:#2e2a27;-webkit-text-stroke:0.2px #2e2a27">1</span>
<svg style="left:526.3px;top:230.3px" width="10" height="10" viewBox="0 0 10 10"><circle cx="5" cy="5" r="4.2" fill="#efe26a" stroke="#6a6030" stroke-width="0.6"/><path d="M5,5 V0.8 A4.2,4.2 0 0 0 1,4z" fill="#5a5030"/></svg>
<span class="t" style="left:543.5px;top:231.5px;font-size:6.5px;line-height:7.47px;color:#2e2a27;-webkit-text-stroke:0.2px #2e2a27">8</span>
<div style="left:925.5px;top:231px;width:8.5px;height:8px;background:#f0b02a;border:0.8px solid #806020;box-sizing:border-box"></div>
<svg style="left:927.5px;top:231.5px" width="6" height="7" viewBox="0 0 6 7"><path d="M0.5,0.5 L5.5,3.5 L0.5,6.5z" fill="#2a2624"/></svg>
<div style="left:935.5px;top:231px;width:12px;height:8px;background:#e8703a;border:0.8px solid #803020;box-sizing:border-box"></div>
<svg style="left:937px;top:231.5px" width="6" height="7" viewBox="0 0 6 7"><path d="M0.5,0.5 L5.5,3.5 L0.5,6.5z" fill="#2a1a14"/></svg>
<div style="left:942.5px;top:233.5px;width:3.5px;height:0.9px;background:#2a1a14;"></div>
<div style="left:942.5px;top:235.5px;width:3.5px;height:0.9px;background:#2a1a14;"></div>
<div style="left:314.2px;top:242px;width:24.0px;height:23px;background:#a49c97;"></div>
<span class="t" style="left:314px;top:245px;font-size:6.8px;line-height:7.82px;color:#2a2622;font-weight:bold;">nds</span>
<div style="left:339.4px;top:242px;width:59.200000000000045px;height:23px;background:#a49c97;"></div>
<svg style="left:346.09999999999997px;top:241px" width="22" height="22" viewBox="0 0 22 22"><path d="M4.99,17.81 A8.5,8.5 0 1 1 17.01,17.81" fill="none" stroke="#2a2624" stroke-width="1.5"/><path d="M10.29,12.51 L4.78,18.02" stroke="#2a2624" stroke-width="1.7"/></svg>
<span class="t" style="left:307.09999999999997px;top:256.5px;width:100px;text-align:center;font-size:5.5px;line-height:6.32px;color:#2a2624;font-weight:bold;">A</span>
<span class="t" style="left:368.4px;top:245px;font-size:6.8px;line-height:7.82px;color:#2a2622;font-weight:bold;-webkit-text-stroke:0.15px #2a2622;overflow:hidden;width:30px">Sends</span>
<div style="left:399.8px;top:242px;width:47.0px;height:23px;background:#a49c97;"></div>
<svg style="left:402.7px;top:241px" width="22" height="22" viewBox="0 0 22 22"><path d="M4.99,17.81 A8.5,8.5 0 1 1 17.01,17.81" fill="none" stroke="#2a2624" stroke-width="1.5"/><path d="M10.29,12.51 L4.78,18.02" stroke="#2a2624" stroke-width="1.7"/></svg>
<span class="t" style="left:363.7px;top:256.5px;width:100px;text-align:center;font-size:5.5px;line-height:6.32px;color:#2a2624;font-weight:bold;">A</span>
<span class="t" style="left:424.8px;top:245px;font-size:6.8px;line-height:7.82px;color:#2a2622;font-weight:bold;-webkit-text-stroke:0.15px #2a2622;overflow:hidden;width:22px">Sends</span>
<div style="left:448.0px;top:242px;width:47.60000000000002px;height:23px;background:#a49c97;"></div>
<svg style="left:450.9px;top:241px" width="22" height="22" viewBox="0 0 22 22"><path d="M4.99,17.81 A8.5,8.5 0 1 1 17.01,17.81" fill="none" stroke="#2a2624" stroke-width="1.5"/><path d="M4.99,17.81 A8.5,8.5 0 1 1 17.10,5.88" fill="none" stroke="#a8d4e0" stroke-width="1.9"/><path d="M11.72,11.10 L17.32,5.68" stroke="#2a2624" stroke-width="1.7"/></svg>
<span class="t" style="left:411.9px;top:256.5px;width:100px;text-align:center;font-size:5.5px;line-height:6.32px;color:#2a2624;font-weight:bold;">A</span>
<span class="t" style="left:473.0px;top:245px;font-size:6.8px;line-height:7.82px;color:#2a2622;font-weight:bold;-webkit-text-stroke:0.15px #2a2622;overflow:hidden;width:22px">Sends</span>
<div style="left:496.8px;top:242px;width:59.400000000000034px;height:23px;background:#b9b1ac;"></div>
<svg style="left:503.5px;top:241px" width="22" height="22" viewBox="0 0 22 22"><path d="M4.99,17.81 A8.5,8.5 0 1 1 17.01,17.81" fill="none" stroke="#2a2624" stroke-width="1.5"/><path d="M10.29,12.51 L4.78,18.02" stroke="#2a2624" stroke-width="1.7"/></svg>
<span class="t" style="left:464.5px;top:256.5px;width:100px;text-align:center;font-size:5.5px;line-height:6.32px;color:#2a2624;font-weight:bold;">A</span>
<span class="t" style="left:525.8px;top:245px;font-size:6.8px;line-height:7.82px;color:#2a2622;font-weight:bold;-webkit-text-stroke:0.15px #2a2622;overflow:hidden;width:30px">Sends</span>
<div style="left:557.4000000000001px;top:242px;width:47.499999999999886px;height:23px;background:#a49c97;"></div>
<svg style="left:560.3000000000001px;top:241px" width="22" height="22" viewBox="0 0 22 22"><path d="M4.99,17.81 A8.5,8.5 0 1 1 17.01,17.81" fill="none" stroke="#2a2624" stroke-width="1.5"/><path d="M10.29,12.51 L4.78,18.02" stroke="#2a2624" stroke-width="1.7"/></svg>
<span class="t" style="left:521.3000000000001px;top:256.5px;width:100px;text-align:center;font-size:5.5px;line-height:6.32px;color:#2a2624;font-weight:bold;">A</span>
<span class="t" style="left:582.4000000000001px;top:245px;font-size:6.8px;line-height:7.82px;color:#2a2622;font-weight:bold;-webkit-text-stroke:0.15px #2a2622;overflow:hidden;width:22px">Sends</span>
<div style="left:606.1px;top:242px;width:59.10000000000002px;height:23px;background:#a49c97;"></div>
<svg style="left:612.8000000000001px;top:241px" width="22" height="22" viewBox="0 0 22 22"><path d="M4.99,17.81 A8.5,8.5 0 1 1 17.01,17.81" fill="none" stroke="#2a2624" stroke-width="1.5"/><path d="M10.29,12.51 L4.78,18.02" stroke="#2a2624" stroke-width="1.7"/></svg>
<span class="t" style="left:573.8000000000001px;top:256.5px;width:100px;text-align:center;font-size:5.5px;line-height:6.32px;color:#2a2624;font-weight:bold;">A</span>
<span class="t" style="left:635.1px;top:245px;font-size:6.8px;line-height:7.82px;color:#2a2622;font-weight:bold;-webkit-text-stroke:0.15px #2a2622;overflow:hidden;width:30px">Sends</span>
<div style="left:666.4000000000001px;top:242px;width:59.69999999999993px;height:23px;background:#a49c97;"></div>
<svg style="left:673.1000000000001px;top:241px" width="22" height="22" viewBox="0 0 22 22"><path d="M4.99,17.81 A8.5,8.5 0 1 1 17.01,17.81" fill="none" stroke="#2a2624" stroke-width="1.5"/><path d="M4.99,17.81 A8.5,8.5 0 1 1 17.42,17.37" fill="none" stroke="#a8d4e0" stroke-width="1.9"/><path d="M11.76,12.46 L17.65,17.57" stroke="#2a2624" stroke-width="1.7"/></svg>
<span class="t" style="left:634.1000000000001px;top:256.5px;width:100px;text-align:center;font-size:5.5px;line-height:6.32px;color:#2a2624;font-weight:bold;">A</span>
<span class="t" style="left:695.4000000000001px;top:245px;font-size:6.8px;line-height:7.82px;color:#2a2622;font-weight:bold;-webkit-text-stroke:0.15px #2a2622;overflow:hidden;width:30px">Sends</span>
<div style="left:727.3000000000001px;top:242px;width:59.69999999999993px;height:23px;background:#a49c97;"></div>
<svg style="left:734.0000000000001px;top:241px" width="22" height="22" viewBox="0 0 22 22"><path d="M4.99,17.81 A8.5,8.5 0 1 1 17.01,17.81" fill="none" stroke="#2a2624" stroke-width="1.5"/><path d="M4.99,17.81 A8.5,8.5 0 1 1 17.42,17.37" fill="none" stroke="#a8d4e0" stroke-width="1.9"/><path d="M11.76,12.46 L17.65,17.57" stroke="#2a2624" stroke-width="1.7"/></svg>
<span class="t" style="left:695.0000000000001px;top:256.5px;width:100px;text-align:center;font-size:5.5px;line-height:6.32px;color:#2a2624;font-weight:bold;">A</span>
<span class="t" style="left:756.3000000000001px;top:245px;font-size:6.8px;line-height:7.82px;color:#2a2622;font-weight:bold;-webkit-text-stroke:0.15px #2a2622;overflow:hidden;width:30px">Sends</span>
<div style="left:788.2px;top:242px;width:41.0px;height:23px;background:#a49c97;"></div>
<svg style="left:791.1px;top:241px" width="22" height="22" viewBox="0 0 22 22"><path d="M4.99,17.81 A8.5,8.5 0 1 1 17.01,17.81" fill="none" stroke="#2a2624" stroke-width="1.5"/><path d="M10.29,12.51 L4.78,18.02" stroke="#2a2624" stroke-width="1.7"/></svg>
<span class="t" style="left:752.1px;top:256.5px;width:100px;text-align:center;font-size:5.5px;line-height:6.32px;color:#2a2624;font-weight:bold;">A</span>
<span class="t" style="left:813.2px;top:245px;font-size:6.8px;line-height:7.82px;color:#2a2622;font-weight:bold;-webkit-text-stroke:0.15px #2a2622;overflow:hidden;width:16px">Sends</span>
<div style="left:830.4000000000001px;top:242px;width:59.09999999999991px;height:23px;background:#a49c97;"></div>
<svg style="left:837.1000000000001px;top:241px" width="22" height="22" viewBox="0 0 22 22"><path d="M4.99,17.81 A8.5,8.5 0 1 1 17.01,17.81" fill="none" stroke="#7a726d" stroke-width="1.5"/><path d="M10.29,12.51 L4.78,18.02" stroke="#7a726d" stroke-width="1.7"/></svg>
<span class="t" style="left:798.1000000000001px;top:256.5px;width:100px;text-align:center;font-size:5.5px;line-height:6.32px;color:#7a726d;font-weight:bold;">A</span>
<span class="t" style="left:859.4000000000001px;top:245px;font-size:6.8px;line-height:7.82px;color:#2a2622;font-weight:bold;-webkit-text-stroke:0.15px #2a2622;overflow:hidden;width:30px">Sends</span>
<div style="left:890.7px;top:242px;width:59.299999999999955px;height:23px;background:#a49c97;"></div>
<span class="t" style="left:918.7px;top:245px;font-size:6.8px;line-height:7.82px;color:#2a2622;font-weight:bold;">Sends</span>
<div style="left:892.7px;top:254px;width:9px;height:0.8px;background:#c8c0ba;"></div>
<div style="left:901.2px;top:249.5px;width:16px;height:7.5px;background:#f0b030;border:0.8px solid #a07020;box-sizing:border-box;border-radius:1px"></div>
<span class="t" style="left:859.2px;top:250px;width:100px;text-align:center;font-size:6px;line-height:6.9px;color:#2a2624;font-weight:bold;">Post</span>
<div style="left:314.2px;top:266px;width:24.0px;height:88.5px;background:#a49c97;"></div>
<div style="left:314.2px;top:355.5px;width:24.0px;height:11.5px;background:#a49c97;"></div>
<div style="left:314px;top:269px;width:4px;height:83px;background:#1f1c1a;"></div>
<div style="left:314px;top:307px;width:4px;height:45px;background:#6fc24a;"></div>
<svg style="left:318px;top:273px" width="8" height="8" viewBox="0 0 8 8"><path d="M7,0.5 L1,4 L7,7.5z" fill="#eeeae6" stroke="#4a4542" stroke-width="0.6"/></svg>
<span class="t" style="left:234.5px;top:273.4px;width:100px;text-align:right;font-size:6.6px;line-height:7.59px;color:#2a2622;-webkit-text-stroke:0.2px #2a2622">0</span>
<span class="t" style="left:234.5px;top:282.2px;width:100px;text-align:right;font-size:6.6px;line-height:7.59px;color:#2a2622;-webkit-text-stroke:0.2px #2a2622">6</span>
<span class="t" style="left:234.5px;top:290.29999999999995px;width:100px;text-align:right;font-size:6.6px;line-height:7.59px;color:#2a2622;-webkit-text-stroke:0.2px #2a2622">12</span>
<span class="t" style="left:234.5px;top:298.7px;width:100px;text-align:right;font-size:6.6px;line-height:7.59px;color:#2a2622;-webkit-text-stroke:0.2px #2a2622">18</span>
<span class="t" style="left:234.5px;top:306.29999999999995px;width:100px;text-align:right;font-size:6.6px;line-height:7.59px;color:#2a2622;-webkit-text-stroke:0.2px #2a2622">24</span>
<span class="t" style="left:234.5px;top:314.4px;width:100px;text-align:right;font-size:6.6px;line-height:7.59px;color:#2a2622;-webkit-text-stroke:0.2px #2a2622">30</span>
<span class="t" style="left:234.5px;top:322.0px;width:100px;text-align:right;font-size:6.6px;line-height:7.59px;color:#2a2622;-webkit-text-stroke:0.2px #2a2622">36</span>
<span class="t" style="left:234.5px;top:333.4px;width:100px;text-align:right;font-size:6.6px;line-height:7.59px;color:#2a2622;-webkit-text-stroke:0.2px #2a2622">48</span>
<span class="t" style="left:234.5px;top:343.09999999999997px;width:100px;text-align:right;font-size:6.6px;line-height:7.59px;color:#2a2622;-webkit-text-stroke:0.2px #2a2622">60</span>
<div style="left:315px;top:360px;width:4px;height:2px;background:#2a2624;"></div>
<div style="left:320px;top:360px;width:4px;height:2px;background:#2a2624;"></div>
<div style="left:325px;top:360px;width:4px;height:2px;background:#2a2624;"></div>
<div style="left:330px;top:360px;width:4px;height:2px;background:#2a2624;"></div>
<div style="left:339.4px;top:266px;width:59.200000000000045px;height:88.5px;background:#a49c97;"></div>
<div style="left:339.4px;top:355.5px;width:59.200000000000045px;height:11.5px;background:#a49c97;"></div>
<span class="t" style="left:346.59999999999997px;top:269.3px;width:21px;height:7.6px;line-height:7.6px;background:#efebe8;border-radius:4px;text-align:center;font-size:6.6px;color:#2a2624;-webkit-text-stroke:0.2px #2a2624;box-shadow:0 0 0 0.7px #6a645f">-18.8</span>
<span class="t" style="left:346.59999999999997px;top:281.2px;width:21px;height:7.6px;line-height:7.6px;background:#efebe8;text-align:center;font-size:6.6px;color:#2a2624;-webkit-text-stroke:0.2px #2a2624;box-shadow:0 0 0 0.7px #6a645f">-6.6</span>
<svg style="left:348.09999999999997px;top:292.8px" width="18" height="20" viewBox="0 0 18 20"><path d="M3.27,17.33 A8.1,8.1 0 1 1 14.73,17.33" fill="none" stroke="#2a2624" stroke-width="1.5"/><path d="M9.00,10.60 L9.00,3.20" stroke="#2a2624" stroke-width="1.7"/><path d="M6.6,0 h4.8 l-2.4,2.6z" fill="#2a2624"/></svg>
<span class="t" style="left:349.79999999999995px;top:315.7px;width:14.6px;height:14.5px;line-height:14.5px;background:#f3b13a;text-align:center;font-size:8px;font-weight:bold;color:#1e1b19;box-shadow:0 0 0 0.8px #9a7020">18</span>
<span class="t" style="left:350.59999999999997px;top:332.7px;width:13px;height:8.3px;line-height:8.3px;background:#d2ccc8;text-align:center;font-size:6.4px;font-weight:bold;color:#2a2624;box-shadow:0 0 0 0.7px #6a645f">S</span>
<div style="left:372.79999999999995px;top:269px;width:7px;height:83px;background:#1f1c1a;"></div>
<div style="left:375.99999999999994px;top:269px;width:0.6px;height:83px;background:#4a4542;"></div>
<div style="left:372.79999999999995px;top:311px;width:7px;height:41px;background:#6fc24a;"></div>
<div style="left:375.99999999999994px;top:311px;width:0.6px;height:41px;background:#5aa03c;"></div>
<div style="left:381.79999999999995px;top:272px;width:2.2px;height:0.8px;background:#5a544f;"></div>
<div style="left:381.79999999999995px;top:277px;width:2.2px;height:0.8px;background:#5a544f;"></div>
<div style="left:381.79999999999995px;top:285.8px;width:2.2px;height:0.8px;background:#5a544f;"></div>
<div style="left:381.79999999999995px;top:293.9px;width:2.2px;height:0.8px;background:#5a544f;"></div>
<div style="left:381.79999999999995px;top:302.3px;width:2.2px;height:0.8px;background:#5a544f;"></div>
<div style="left:381.79999999999995px;top:309.9px;width:2.2px;height:0.8px;background:#5a544f;"></div>
<div style="left:381.79999999999995px;top:318px;width:2.2px;height:0.8px;background:#5a544f;"></div>
<div style="left:381.79999999999995px;top:325.6px;width:2.2px;height:0.8px;background:#5a544f;"></div>
<div style="left:381.79999999999995px;top:337px;width:2.2px;height:0.8px;background:#5a544f;"></div>
<div style="left:381.79999999999995px;top:346.7px;width:2.2px;height:0.8px;background:#5a544f;"></div>
<div style="left:381.79999999999995px;top:314px;width:2.2px;height:0.8px;background:#5a544f;"></div>
<div style="left:381.79999999999995px;top:321.5px;width:2.2px;height:0.8px;background:#5a544f;"></div>
<div style="left:381.79999999999995px;top:331px;width:2.2px;height:0.8px;background:#5a544f;"></div>
<div style="left:381.79999999999995px;top:342px;width:2.2px;height:0.8px;background:#5a544f;"></div>
<div style="left:381.79999999999995px;top:350.5px;width:2.2px;height:0.8px;background:#5a544f;"></div>
<span class="t" style="left:294.59999999999997px;top:273.4px;width:100px;text-align:right;font-size:6.6px;line-height:7.59px;color:#2a2622;-webkit-text-stroke:0.2px #2a2622">0</span>
<span class="t" style="left:294.59999999999997px;top:282.2px;width:100px;text-align:right;font-size:6.6px;line-height:7.59px;color:#2a2622;-webkit-text-stroke:0.2px #2a2622">6</span>
<span class="t" style="left:294.59999999999997px;top:290.29999999999995px;width:100px;text-align:right;font-size:6.6px;line-height:7.59px;color:#2a2622;-webkit-text-stroke:0.2px #2a2622">12</span>
<span class="t" style="left:294.59999999999997px;top:298.7px;width:100px;text-align:right;font-size:6.6px;line-height:7.59px;color:#2a2622;-webkit-text-stroke:0.2px #2a2622">18</span>
<span class="t" style="left:294.59999999999997px;top:306.29999999999995px;width:100px;text-align:right;font-size:6.6px;line-height:7.59px;color:#2a2622;-webkit-text-stroke:0.2px #2a2622">24</span>
<span class="t" style="left:294.59999999999997px;top:314.4px;width:100px;text-align:right;font-size:6.6px;line-height:7.59px;color:#2a2622;-webkit-text-stroke:0.2px #2a2622">30</span>
<span class="t" style="left:294.59999999999997px;top:322.0px;width:100px;text-align:right;font-size:6.6px;line-height:7.59px;color:#2a2622;-webkit-text-stroke:0.2px #2a2622">36</span>
<span class="t" style="left:294.59999999999997px;top:333.4px;width:100px;text-align:right;font-size:6.6px;line-height:7.59px;color:#2a2622;-webkit-text-stroke:0.2px #2a2622">48</span>
<span class="t" style="left:294.59999999999997px;top:343.09999999999997px;width:100px;text-align:right;font-size:6.6px;line-height:7.59px;color:#2a2622;-webkit-text-stroke:0.2px #2a2622">60</span>
<svg style="left:381.29999999999995px;top:281.5px" width="8" height="8" viewBox="0 0 8 8"><path d="M7,0.8 L1,4 L7,7.2z" fill="#efebe8" stroke="#4a4542" stroke-width="0.6"/></svg>
<div style="left:349.4px;top:360.3px;width:4.6px;height:2.2px;background:#2a2624;"></div>
<div style="left:355.7px;top:360.3px;width:4.6px;height:2.2px;background:#2a2624;"></div>
<div style="left:362.0px;top:360.3px;width:4.6px;height:2.2px;background:#2a2624;"></div>
<div style="left:368.29999999999995px;top:360.3px;width:4.6px;height:2.2px;background:#2a2624;"></div>
<div style="left:374.59999999999997px;top:360.3px;width:4.6px;height:2.2px;background:#2a2624;"></div>
<div style="left:380.9px;top:360.3px;width:4.6px;height:2.2px;background:#2a2624;"></div>
<div style="left:399.8px;top:266px;width:47.0px;height:88.5px;background:#a49c97;"></div>
<div style="left:399.8px;top:355.5px;width:47.0px;height:11.5px;background:#a49c97;"></div>
<span class="t" style="left:403.2px;top:269.3px;width:21px;height:7.6px;line-height:7.6px;background:#efebe8;border-radius:4px;text-align:center;font-size:6.6px;color:#2a2624;-webkit-text-stroke:0.2px #2a2624;box-shadow:0 0 0 0.7px #6a645f">-Inf</span>
<span class="t" style="left:403.2px;top:281.2px;width:21px;height:7.6px;line-height:7.6px;background:#efebe8;text-align:center;font-size:6.6px;color:#2a2624;-webkit-text-stroke:0.2px #2a2624;box-shadow:0 0 0 0.7px #6a645f">-7.0</span>
<svg style="left:404.7px;top:292.8px" width="18" height="20" viewBox="0 0 18 20"><path d="M3.27,17.33 A8.1,8.1 0 1 1 14.73,17.33" fill="none" stroke="#2a2624" stroke-width="1.5"/><path d="M9.00,10.60 L9.00,3.20" stroke="#2a2624" stroke-width="1.7"/><path d="M6.6,0 h4.8 l-2.4,2.6z" fill="#2a2624"/></svg>
<span class="t" style="left:406.4px;top:315.7px;width:14.6px;height:14.5px;line-height:14.5px;background:#f3b13a;text-align:center;font-size:8px;font-weight:bold;color:#1e1b19;box-shadow:0 0 0 0.8px #9a7020">19</span>
<span class="t" style="left:407.2px;top:332.7px;width:13px;height:8.3px;line-height:8.3px;background:#d2ccc8;text-align:center;font-size:6.4px;font-weight:bold;color:#2a2624;box-shadow:0 0 0 0.7px #6a645f">S</span>
<div style="left:407.2px;top:343.6px;width:13px;height:8.2px;background:#d2ccc8;box-shadow:0 0 0 0.7px #6a645f"></div>
<div style="left:411.7px;top:345.7px;width:4px;height:4px;background:#3a3633;border-radius:50%"></div>
<div style="left:429.2px;top:269px;width:7px;height:83px;background:#1f1c1a;"></div>
<div style="left:432.4px;top:269px;width:0.6px;height:83px;background:#4a4542;"></div>
<div style="left:438.2px;top:272px;width:2.2px;height:0.8px;background:#5a544f;"></div>
<div style="left:438.2px;top:277px;width:2.2px;height:0.8px;background:#5a544f;"></div>
<div style="left:438.2px;top:285.8px;width:2.2px;height:0.8px;background:#5a544f;"></div>
<div style="left:438.2px;top:293.9px;width:2.2px;height:0.8px;background:#5a544f;"></div>
<div style="left:438.2px;top:302.3px;width:2.2px;height:0.8px;background:#5a544f;"></div>
<div style="left:438.2px;top:309.9px;width:2.2px;height:0.8px;background:#5a544f;"></div>
<div style="left:438.2px;top:318px;width:2.2px;height:0.8px;background:#5a544f;"></div>
<div style="left:438.2px;top:325.6px;width:2.2px;height:0.8px;background:#5a544f;"></div>
<div style="left:438.2px;top:337px;width:2.2px;height:0.8px;background:#5a544f;"></div>
<div style="left:438.2px;top:346.7px;width:2.2px;height:0.8px;background:#5a544f;"></div>
<div style="left:438.2px;top:314px;width:2.2px;height:0.8px;background:#5a544f;"></div>
<div style="left:438.2px;top:321.5px;width:2.2px;height:0.8px;background:#5a544f;"></div>
<div style="left:438.2px;top:331px;width:2.2px;height:0.8px;background:#5a544f;"></div>
<div style="left:438.2px;top:342px;width:2.2px;height:0.8px;background:#5a544f;"></div>
<div style="left:438.2px;top:350.5px;width:2.2px;height:0.8px;background:#5a544f;"></div>
<svg style="left:437.7px;top:283px" width="8" height="8" viewBox="0 0 8 8"><path d="M7,0.8 L1,4 L7,7.2z" fill="#efebe8" stroke="#4a4542" stroke-width="0.6"/></svg>
<div style="left:404.8px;top:360.3px;width:4.6px;height:2.2px;background:#2a2624;"></div>
<div style="left:411.1px;top:360.3px;width:4.6px;height:2.2px;background:#2a2624;"></div>
<div style="left:417.40000000000003px;top:360.3px;width:4.6px;height:2.2px;background:#2a2624;"></div>
<div style="left:423.7px;top:360.3px;width:4.6px;height:2.2px;background:#2a2624;"></div>
<div style="left:430.0px;top:360.3px;width:4.6px;height:2.2px;background:#2a2624;"></div>
<div style="left:436.3px;top:360.3px;width:4.6px;height:2.2px;background:#2a2624;"></div>
<div style="left:448.0px;top:266px;width:47.60000000000002px;height:88.5px;background:#a49c97;"></div>
<div style="left:448.0px;top:355.5px;width:47.60000000000002px;height:11.5px;background:#a49c97;"></div>
<span class="t" style="left:451.4px;top:269.3px;width:21px;height:7.6px;line-height:7.6px;background:#efebe8;border-radius:4px;text-align:center;font-size:6.6px;color:#2a2624;-webkit-text-stroke:0.2px #2a2624;box-shadow:0 0 0 0.7px #6a645f">-Inf</span>
<span class="t" style="left:451.4px;top:281.2px;width:21px;height:7.6px;line-height:7.6px;background:#efebe8;text-align:center;font-size:6.6px;color:#2a2624;-webkit-text-stroke:0.2px #2a2624;box-shadow:0 0 0 0.7px #6a645f">-8.0</span>
<svg style="left:452.9px;top:292.8px" width="18" height="20" viewBox="0 0 18 20"><path d="M3.27,17.33 A8.1,8.1 0 1 1 14.73,17.33" fill="none" stroke="#2a2624" stroke-width="1.5"/><path d="M9.54,10.76 L13.50,4.51" stroke="#2a2624" stroke-width="1.7"/><path d="M6.6,0 h4.8 l-2.4,2.6z" fill="#8cc8d8"/></svg>
<span class="t" style="left:454.59999999999997px;top:315.7px;width:14.6px;height:14.5px;line-height:14.5px;background:#f3b13a;text-align:center;font-size:8px;font-weight:bold;color:#1e1b19;box-shadow:0 0 0 0.8px #9a7020">20</span>
<span class="t" style="left:455.4px;top:332.7px;width:13px;height:8.3px;line-height:8.3px;background:#d2ccc8;text-align:center;font-size:6.4px;font-weight:bold;color:#2a2624;box-shadow:0 0 0 0.7px #6a645f">S</span>
<div style="left:455.4px;top:343.6px;width:13px;height:8.2px;background:#d2ccc8;box-shadow:0 0 0 0.7px #6a645f"></div>
<div style="left:459.9px;top:345.7px;width:4px;height:4px;background:#3a3633;border-radius:50%"></div>
<div style="left:477.4px;top:269px;width:7px;height:83px;background:#1f1c1a;"></div>
<div style="left:480.59999999999997px;top:269px;width:0.6px;height:83px;background:#4a4542;"></div>
<div style="left:486.4px;top:272px;width:2.2px;height:0.8px;background:#5a544f;"></div>
<div style="left:486.4px;top:277px;width:2.2px;height:0.8px;background:#5a544f;"></div>
<div style="left:486.4px;top:285.8px;width:2.2px;height:0.8px;background:#5a544f;"></div>
<div style="left:486.4px;top:293.9px;width:2.2px;height:0.8px;background:#5a544f;"></div>
<div style="left:486.4px;top:302.3px;width:2.2px;height:0.8px;background:#5a544f;"></div>
<div style="left:486.4px;top:309.9px;width:2.2px;height:0.8px;background:#5a544f;"></div>
<div style="left:486.4px;top:318px;width:2.2px;height:0.8px;background:#5a544f;"></div>
<div style="left:486.4px;top:325.6px;width:2.2px;height:0.8px;background:#5a544f;"></div>
<div style="left:486.4px;top:337px;width:2.2px;height:0.8px;background:#5a544f;"></div>
<div style="left:486.4px;top:346.7px;width:2.2px;height:0.8px;background:#5a544f;"></div>
<div style="left:486.4px;top:314px;width:2.2px;height:0.8px;background:#5a544f;"></div>
<div style="left:486.4px;top:321.5px;width:2.2px;height:0.8px;background:#5a544f;"></div>
<div style="left:486.4px;top:331px;width:2.2px;height:0.8px;background:#5a544f;"></div>
<div style="left:486.4px;top:342px;width:2.2px;height:0.8px;background:#5a544f;"></div>
<div style="left:486.4px;top:350.5px;width:2.2px;height:0.8px;background:#5a544f;"></div>
<svg style="left:485.9px;top:284px" width="8" height="8" viewBox="0 0 8 8"><path d="M7,0.8 L1,4 L7,7.2z" fill="#efebe8" stroke="#4a4542" stroke-width="0.6"/></svg>
<div style="left:453.0px;top:360.3px;width:4.6px;height:2.2px;background:#2a2624;"></div>
<div style="left:459.3px;top:360.3px;width:4.6px;height:2.2px;background:#2a2624;"></div>
<div style="left:465.6px;top:360.3px;width:4.6px;height:2.2px;background:#2a2624;"></div>
<div style="left:471.9px;top:360.3px;width:4.6px;height:2.2px;background:#2a2624;"></div>
<div style="left:478.2px;top:360.3px;width:4.6px;height:2.2px;background:#2a2624;"></div>
<div style="left:484.5px;top:360.3px;width:4.6px;height:2.2px;background:#2a2624;"></div>
<div style="left:496.8px;top:266px;width:59.400000000000034px;height:88.5px;background:#b9b1ac;"></div>
<div style="left:496.8px;top:355.5px;width:59.400000000000034px;height:11.5px;background:#b9b1ac;"></div>
<span class="t" style="left:504.0px;top:269.3px;width:21px;height:7.6px;line-height:7.6px;background:#efebe8;border-radius:4px;text-align:center;font-size:6.6px;color:#2a2624;-webkit-text-stroke:0.2px #2a2624;box-shadow:0 0 0 0.7px #6a645f">-12.2</span>
<span class="t" style="left:504.0px;top:281.2px;width:21px;height:7.6px;line-height:7.6px;background:#efebe8;text-align:center;font-size:6.6px;color:#2a2624;-webkit-text-stroke:0.2px #2a2624;box-shadow:0 0 0 0.7px #6a645f">-11.0</span>
<svg style="left:505.5px;top:292.8px" width="18" height="20" viewBox="0 0 18 20"><path d="M3.27,17.33 A8.1,8.1 0 1 1 14.73,17.33" fill="none" stroke="#2a2624" stroke-width="1.5"/><path d="M9.00,10.60 L9.00,3.20" stroke="#2a2624" stroke-width="1.7"/><path d="M6.6,0 h4.8 l-2.4,2.6z" fill="#2a2624"/></svg>
<span class="t" style="left:507.2px;top:315.7px;width:14.6px;height:14.5px;line-height:14.5px;background:#f3b13a;text-align:center;font-size:8px;font-weight:bold;color:#1e1b19;box-shadow:0 0 0 0.8px #9a7020">21</span>
<span class="t" style="left:508.0px;top:332.7px;width:13px;height:8.3px;line-height:8.3px;background:#d2ccc8;text-align:center;font-size:6.4px;font-weight:bold;color:#2a2624;box-shadow:0 0 0 0.7px #6a645f">S</span>
<div style="left:508.0px;top:343.6px;width:13px;height:8.2px;background:#e05a48;box-shadow:0 0 0 0.7px #6a645f"></div>
<div style="left:512.5px;top:345.7px;width:4px;height:4px;background:#3a2a28;border-radius:50%"></div>
<div style="left:530.2px;top:269px;width:7px;height:83px;background:#1f1c1a;"></div>
<div style="left:533.4000000000001px;top:269px;width:0.6px;height:83px;background:#4a4542;"></div>
<div style="left:530.2px;top:303.5px;width:7px;height:48.5px;background:#6fc24a;"></div>
<div style="left:533.4000000000001px;top:303.5px;width:0.6px;height:48.5px;background:#5aa03c;"></div>
<div style="left:539.2px;top:272px;width:2.2px;height:0.8px;background:#5a544f;"></div>
<div style="left:539.2px;top:277px;width:2.2px;height:0.8px;background:#5a544f;"></div>
<div style="left:539.2px;top:285.8px;width:2.2px;height:0.8px;background:#5a544f;"></div>
<div style="left:539.2px;top:293.9px;width:2.2px;height:0.8px;background:#5a544f;"></div>
<div style="left:539.2px;top:302.3px;width:2.2px;height:0.8px;background:#5a544f;"></div>
<div style="left:539.2px;top:309.9px;width:2.2px;height:0.8px;background:#5a544f;"></div>
<div style="left:539.2px;top:318px;width:2.2px;height:0.8px;background:#5a544f;"></div>
<div style="left:539.2px;top:325.6px;width:2.2px;height:0.8px;background:#5a544f;"></div>
<div style="left:539.2px;top:337px;width:2.2px;height:0.8px;background:#5a544f;"></div>
<div style="left:539.2px;top:346.7px;width:2.2px;height:0.8px;background:#5a544f;"></div>
<div style="left:539.2px;top:314px;width:2.2px;height:0.8px;background:#5a544f;"></div>
<div style="left:539.2px;top:321.5px;width:2.2px;height:0.8px;background:#5a544f;"></div>
<div style="left:539.2px;top:331px;width:2.2px;height:0.8px;background:#5a544f;"></div>
<div style="left:539.2px;top:342px;width:2.2px;height:0.8px;background:#5a544f;"></div>
<div style="left:539.2px;top:350.5px;width:2.2px;height:0.8px;background:#5a544f;"></div>
<span class="t" style="left:452.0px;top:273.4px;width:100px;text-align:right;font-size:6.6px;line-height:7.59px;color:#2a2622;-webkit-text-stroke:0.2px #2a2622">0</span>
<span class="t" style="left:452.0px;top:282.2px;width:100px;text-align:right;font-size:6.6px;line-height:7.59px;color:#2a2622;-webkit-text-stroke:0.2px #2a2622">6</span>
<span class="t" style="left:452.0px;top:290.29999999999995px;width:100px;text-align:right;font-size:6.6px;line-height:7.59px;color:#2a2622;-webkit-text-stroke:0.2px #2a2622">12</span>
<span class="t" style="left:452.0px;top:298.7px;width:100px;text-align:right;font-size:6.6px;line-height:7.59px;color:#2a2622;-webkit-text-stroke:0.2px #2a2622">18</span>
<span class="t" style="left:452.0px;top:306.29999999999995px;width:100px;text-align:right;font-size:6.6px;line-height:7.59px;color:#2a2622;-webkit-text-stroke:0.2px #2a2622">24</span>
<span class="t" style="left:452.0px;top:314.4px;width:100px;text-align:right;font-size:6.6px;line-height:7.59px;color:#2a2622;-webkit-text-stroke:0.2px #2a2622">30</span>
<span class="t" style="left:452.0px;top:322.0px;width:100px;text-align:right;font-size:6.6px;line-height:7.59px;color:#2a2622;-webkit-text-stroke:0.2px #2a2622">36</span>
<span class="t" style="left:452.0px;top:333.4px;width:100px;text-align:right;font-size:6.6px;line-height:7.59px;color:#2a2622;-webkit-text-stroke:0.2px #2a2622">48</span>
<span class="t" style="left:452.0px;top:343.09999999999997px;width:100px;text-align:right;font-size:6.6px;line-height:7.59px;color:#2a2622;-webkit-text-stroke:0.2px #2a2622">60</span>
<svg style="left:538.7px;top:288.5px" width="8" height="8" viewBox="0 0 8 8"><path d="M7,0.8 L1,4 L7,7.2z" fill="#efebe8" stroke="#4a4542" stroke-width="0.6"/></svg>
<div style="left:506.8px;top:360.3px;width:4.6px;height:2.2px;background:#2a2624;"></div>
<div style="left:513.1px;top:360.3px;width:4.6px;height:2.2px;background:#2a2624;"></div>
<div style="left:519.4px;top:360.3px;width:4.6px;height:2.2px;background:#2a2624;"></div>
<div style="left:525.7px;top:360.3px;width:4.6px;height:2.2px;background:#2a2624;"></div>
<div style="left:532.0px;top:360.3px;width:4.6px;height:2.2px;background:#2a2624;"></div>
<div style="left:538.3px;top:360.3px;width:4.6px;height:2.2px;background:#2a2624;"></div>
<div style="left:557.4000000000001px;top:266px;width:47.499999999999886px;height:88.5px;background:#a49c97;"></div>
<div style="left:557.4000000000001px;top:355.5px;width:47.499999999999886px;height:11.5px;background:#a49c97;"></div>
<span class="t" style="left:560.8000000000001px;top:269.3px;width:21px;height:7.6px;line-height:7.6px;background:#efebe8;border-radius:4px;text-align:center;font-size:6.6px;color:#2a2624;-webkit-text-stroke:0.2px #2a2624;box-shadow:0 0 0 0.7px #6a645f">-Inf</span>
<span class="t" style="left:560.8000000000001px;top:281.2px;width:21px;height:7.6px;line-height:7.6px;background:#efebe8;text-align:center;font-size:6.6px;color:#2a2624;-webkit-text-stroke:0.2px #2a2624;box-shadow:0 0 0 0.7px #6a645f">-15.0</span>
<svg style="left:562.3000000000001px;top:292.8px" width="18" height="20" viewBox="0 0 18 20"><path d="M3.27,17.33 A8.1,8.1 0 1 1 14.73,17.33" fill="none" stroke="#2a2624" stroke-width="1.5"/><path d="M9.37,10.67 L12.09,3.79" stroke="#2a2624" stroke-width="1.7"/><path d="M6.6,0 h4.8 l-2.4,2.6z" fill="#8cc8d8"/></svg>
<span class="t" style="left:564.0000000000001px;top:315.7px;width:14.6px;height:14.5px;line-height:14.5px;background:#f3b13a;text-align:center;font-size:8px;font-weight:bold;color:#1e1b19;box-shadow:0 0 0 0.8px #9a7020">22</span>
<span class="t" style="left:564.8000000000001px;top:332.7px;width:13px;height:8.3px;line-height:8.3px;background:#d2ccc8;text-align:center;font-size:6.4px;font-weight:bold;color:#2a2624;box-shadow:0 0 0 0.7px #6a645f">S</span>
<div style="left:564.8000000000001px;top:343.6px;width:13px;height:8.2px;background:#d2ccc8;box-shadow:0 0 0 0.7px #6a645f"></div>
<div style="left:569.3000000000001px;top:345.7px;width:4px;height:4px;background:#3a3633;border-radius:50%"></div>
<div style="left:586.8000000000001px;top:269px;width:7px;height:83px;background:#1f1c1a;"></div>
<div style="left:590.0000000000001px;top:269px;width:0.6px;height:83px;background:#4a4542;"></div>
<div style="left:595.8000000000001px;top:272px;width:2.2px;height:0.8px;background:#5a544f;"></div>
<div style="left:595.8000000000001px;top:277px;width:2.2px;height:0.8px;background:#5a544f;"></div>
<div style="left:595.8000000000001px;top:285.8px;width:2.2px;height:0.8px;background:#5a544f;"></div>
<div style="left:595.8000000000001px;top:293.9px;width:2.2px;height:0.8px;background:#5a544f;"></div>
<div style="left:595.8000000000001px;top:302.3px;width:2.2px;height:0.8px;background:#5a544f;"></div>
<div style="left:595.8000000000001px;top:309.9px;width:2.2px;height:0.8px;background:#5a544f;"></div>
<div style="left:595.8000000000001px;top:318px;width:2.2px;height:0.8px;background:#5a544f;"></div>
<div style="left:595.8000000000001px;top:325.6px;width:2.2px;height:0.8px;background:#5a544f;"></div>
<div style="left:595.8000000000001px;top:337px;width:2.2px;height:0.8px;background:#5a544f;"></div>
<div style="left:595.8000000000001px;top:346.7px;width:2.2px;height:0.8px;background:#5a544f;"></div>
<div style="left:595.8000000000001px;top:314px;width:2.2px;height:0.8px;background:#5a544f;"></div>
<div style="left:595.8000000000001px;top:321.5px;width:2.2px;height:0.8px;background:#5a544f;"></div>
<div style="left:595.8000000000001px;top:331px;width:2.2px;height:0.8px;background:#5a544f;"></div>
<div style="left:595.8000000000001px;top:342px;width:2.2px;height:0.8px;background:#5a544f;"></div>
<div style="left:595.8000000000001px;top:350.5px;width:2.2px;height:0.8px;background:#5a544f;"></div>
<svg style="left:595.3000000000001px;top:293px" width="8" height="8" viewBox="0 0 8 8"><path d="M7,0.8 L1,4 L7,7.2z" fill="#efebe8" stroke="#4a4542" stroke-width="0.6"/></svg>
<div style="left:562.4000000000001px;top:360.3px;width:4.6px;height:2.2px;background:#2a2624;"></div>
<div style="left:568.7px;top:360.3px;width:4.6px;height:2.2px;background:#2a2624;"></div>
<div style="left:575.0000000000001px;top:360.3px;width:4.6px;height:2.2px;background:#2a2624;"></div>
<div style="left:581.3000000000001px;top:360.3px;width:4.6px;height:2.2px;background:#2a2624;"></div>
<div style="left:587.6000000000001px;top:360.3px;width:4.6px;height:2.2px;background:#2a2624;"></div>
<div style="left:593.9000000000001px;top:360.3px;width:4.6px;height:2.2px;background:#2a2624;"></div>
<div style="left:606.1px;top:266px;width:59.10000000000002px;height:88.5px;background:#a49c97;"></div>
<div style="left:606.1px;top:355.5px;width:59.10000000000002px;height:11.5px;background:#a49c97;"></div>
<span class="t" style="left:613.3000000000001px;top:269.3px;width:21px;height:7.6px;line-height:7.6px;background:#efebe8;border-radius:4px;text-align:center;font-size:6.6px;color:#2a2624;-webkit-text-stroke:0.2px #2a2624;box-shadow:0 0 0 0.7px #6a645f">-Inf</span>
<span class="t" style="left:613.3000000000001px;top:281.2px;width:21px;height:7.6px;line-height:7.6px;background:#efebe8;text-align:center;font-size:6.6px;color:#2a2624;-webkit-text-stroke:0.2px #2a2624;box-shadow:0 0 0 0.7px #6a645f">0</span>
<svg style="left:614.8000000000001px;top:292.8px" width="18" height="20" viewBox="0 0 18 20"><path d="M3.27,17.33 A8.1,8.1 0 1 1 14.73,17.33" fill="none" stroke="#2a2624" stroke-width="1.5"/><path d="M9.00,10.60 L9.00,3.20" stroke="#2a2624" stroke-width="1.7"/><path d="M6.6,0 h4.8 l-2.4,2.6z" fill="#2a2624"/></svg>
<span class="t" style="left:616.5000000000001px;top:315.7px;width:14.6px;height:14.5px;line-height:14.5px;background:#f3b13a;text-align:center;font-size:8px;font-weight:bold;color:#1e1b19;box-shadow:0 0 0 0.8px #9a7020">23</span>
<span class="t" style="left:617.3000000000001px;top:332.7px;width:13px;height:8.3px;line-height:8.3px;background:#d2ccc8;text-align:center;font-size:6.4px;font-weight:bold;color:#2a2624;box-shadow:0 0 0 0.7px #6a645f">S</span>
<div style="left:639.5px;top:269px;width:7px;height:83px;background:#1f1c1a;"></div>
<div style="left:642.7px;top:269px;width:0.6px;height:83px;background:#4a4542;"></div>
<div style="left:648.5px;top:272px;width:2.2px;height:0.8px;background:#5a544f;"></div>
<div style="left:648.5px;top:277px;width:2.2px;height:0.8px;background:#5a544f;"></div>
<div style="left:648.5px;top:285.8px;width:2.2px;height:0.8px;background:#5a544f;"></div>
<div style="left:648.5px;top:293.9px;width:2.2px;height:0.8px;background:#5a544f;"></div>
<div style="left:648.5px;top:302.3px;width:2.2px;height:0.8px;background:#5a544f;"></div>
<div style="left:648.5px;top:309.9px;width:2.2px;height:0.8px;background:#5a544f;"></div>
<div style="left:648.5px;top:318px;width:2.2px;height:0.8px;background:#5a544f;"></div>
<div style="left:648.5px;top:325.6px;width:2.2px;height:0.8px;background:#5a544f;"></div>
<div style="left:648.5px;top:337px;width:2.2px;height:0.8px;background:#5a544f;"></div>
<div style="left:648.5px;top:346.7px;width:2.2px;height:0.8px;background:#5a544f;"></div>
<div style="left:648.5px;top:314px;width:2.2px;height:0.8px;background:#5a544f;"></div>
<div style="left:648.5px;top:321.5px;width:2.2px;height:0.8px;background:#5a544f;"></div>
<div style="left:648.5px;top:331px;width:2.2px;height:0.8px;background:#5a544f;"></div>
<div style="left:648.5px;top:342px;width:2.2px;height:0.8px;background:#5a544f;"></div>
<div style="left:648.5px;top:350.5px;width:2.2px;height:0.8px;background:#5a544f;"></div>
<span class="t" style="left:561.3px;top:273.4px;width:100px;text-align:right;font-size:6.6px;line-height:7.59px;color:#2a2622;-webkit-text-stroke:0.2px #2a2622">0</span>
<span class="t" style="left:561.3px;top:282.2px;width:100px;text-align:right;font-size:6.6px;line-height:7.59px;color:#2a2622;-webkit-text-stroke:0.2px #2a2622">6</span>
<span class="t" style="left:561.3px;top:290.29999999999995px;width:100px;text-align:right;font-size:6.6px;line-height:7.59px;color:#2a2622;-webkit-text-stroke:0.2px #2a2622">12</span>
<span class="t" style="left:561.3px;top:298.7px;width:100px;text-align:right;font-size:6.6px;line-height:7.59px;color:#2a2622;-webkit-text-stroke:0.2px #2a2622">18</span>
<span class="t" style="left:561.3px;top:306.29999999999995px;width:100px;text-align:right;font-size:6.6px;line-height:7.59px;color:#2a2622;-webkit-text-stroke:0.2px #2a2622">24</span>
<span class="t" style="left:561.3px;top:314.4px;width:100px;text-align:right;font-size:6.6px;line-height:7.59px;color:#2a2622;-webkit-text-stroke:0.2px #2a2622">30</span>
<span class="t" style="left:561.3px;top:322.0px;width:100px;text-align:right;font-size:6.6px;line-height:7.59px;color:#2a2622;-webkit-text-stroke:0.2px #2a2622">36</span>
<span class="t" style="left:561.3px;top:333.4px;width:100px;text-align:right;font-size:6.6px;line-height:7.59px;color:#2a2622;-webkit-text-stroke:0.2px #2a2622">48</span>
<span class="t" style="left:561.3px;top:343.09999999999997px;width:100px;text-align:right;font-size:6.6px;line-height:7.59px;color:#2a2622;-webkit-text-stroke:0.2px #2a2622">60</span>
<svg style="left:648.0px;top:273px" width="8" height="8" viewBox="0 0 8 8"><path d="M7,0.8 L1,4 L7,7.2z" fill="#efebe8" stroke="#4a4542" stroke-width="0.6"/></svg>
<div style="left:616.1px;top:360.3px;width:4.6px;height:2.2px;background:#2a2624;"></div>
<div style="left:622.4px;top:360.3px;width:4.6px;height:2.2px;background:#2a2624;"></div>
<div style="left:628.7px;top:360.3px;width:4.6px;height:2.2px;background:#2a2624;"></div>
<div style="left:635.0px;top:360.3px;width:4.6px;height:2.2px;background:#2a2624;"></div>
<div style="left:641.3000000000001px;top:360.3px;width:4.6px;height:2.2px;background:#2a2624;"></div>
<div style="left:647.6px;top:360.3px;width:4.6px;height:2.2px;background:#2a2624;"></div>
<div style="left:666.4000000000001px;top:266px;width:59.69999999999993px;height:88.5px;background:#a49c97;"></div>
<div style="left:666.4000000000001px;top:355.5px;width:59.69999999999993px;height:11.5px;background:#a49c97;"></div>
<span class="t" style="left:673.6000000000001px;top:269.3px;width:21px;height:7.6px;line-height:7.6px;background:#efebe8;border-radius:4px;text-align:center;font-size:6.6px;color:#2a2624;-webkit-text-stroke:0.2px #2a2624;box-shadow:0 0 0 0.7px #6a645f">-Inf</span>
<span class="t" style="left:673.6000000000001px;top:281.2px;width:21px;height:7.6px;line-height:7.6px;background:#efebe8;text-align:center;font-size:6.6px;color:#2a2624;-webkit-text-stroke:0.2px #2a2624;box-shadow:0 0 0 0.7px #6a645f">-18.9</span>
<svg style="left:675.1000000000001px;top:292.8px" width="18" height="20" viewBox="0 0 18 20"><path d="M3.27,17.33 A8.1,8.1 0 1 1 14.73,17.33" fill="none" stroke="#2a2624" stroke-width="1.5"/><path d="M9.54,10.76 L13.50,4.51" stroke="#2a2624" stroke-width="1.7"/><path d="M6.6,0 h4.8 l-2.4,2.6z" fill="#8cc8d8"/></svg>
<span class="t" style="left:676.8000000000002px;top:315.7px;width:14.6px;height:14.5px;line-height:14.5px;background:#f3b13a;text-align:center;font-size:8px;font-weight:bold;color:#1e1b19;box-shadow:0 0 0 0.8px #9a7020">24</span>
<span class="t" style="left:677.6000000000001px;top:332.7px;width:13px;height:8.3px;line-height:8.3px;background:#d2ccc8;text-align:center;font-size:6.4px;font-weight:bold;color:#2a2624;box-shadow:0 0 0 0.7px #6a645f">S</span>
<div style="left:677.6000000000001px;top:343.6px;width:13px;height:8.2px;background:#d2ccc8;box-shadow:0 0 0 0.7px #6a645f"></div>
<div style="left:682.1000000000001px;top:345.7px;width:4px;height:4px;background:#3a3633;border-radius:50%"></div>
<div style="left:699.8000000000001px;top:269px;width:7px;height:83px;background:#1f1c1a;"></div>
<div style="left:703.0000000000001px;top:269px;width:0.6px;height:83px;background:#4a4542;"></div>
<div style="left:708.8000000000001px;top:272px;width:2.2px;height:0.8px;background:#5a544f;"></div>
<div style="left:708.8000000000001px;top:277px;width:2.2px;height:0.8px;background:#5a544f;"></div>
<div style="left:708.8000000000001px;top:285.8px;width:2.2px;height:0.8px;background:#5a544f;"></div>
<div style="left:708.8000000000001px;top:293.9px;width:2.2px;height:0.8px;background:#5a544f;"></div>
<div style="left:708.8000000000001px;top:302.3px;width:2.2px;height:0.8px;background:#5a544f;"></div>
<div style="left:708.8000000000001px;top:309.9px;width:2.2px;height:0.8px;background:#5a544f;"></div>
<div style="left:708.8000000000001px;top:318px;width:2.2px;height:0.8px;background:#5a544f;"></div>
<div style="left:708.8000000000001px;top:325.6px;width:2.2px;height:0.8px;background:#5a544f;"></div>
<div style="left:708.8000000000001px;top:337px;width:2.2px;height:0.8px;background:#5a544f;"></div>
<div style="left:708.8000000000001px;top:346.7px;width:2.2px;height:0.8px;background:#5a544f;"></div>
<div style="left:708.8000000000001px;top:314px;width:2.2px;height:0.8px;background:#5a544f;"></div>
<div style="left:708.8000000000001px;top:321.5px;width:2.2px;height:0.8px;background:#5a544f;"></div>
<div style="left:708.8000000000001px;top:331px;width:2.2px;height:0.8px;background:#5a544f;"></div>
<div style="left:708.8000000000001px;top:342px;width:2.2px;height:0.8px;background:#5a544f;"></div>
<div style="left:708.8000000000001px;top:350.5px;width:2.2px;height:0.8px;background:#5a544f;"></div>
<span class="t" style="left:621.6px;top:273.4px;width:100px;text-align:right;font-size:6.6px;line-height:7.59px;color:#2a2622;-webkit-text-stroke:0.2px #2a2622">0</span>
<span class="t" style="left:621.6px;top:282.2px;width:100px;text-align:right;font-size:6.6px;line-height:7.59px;color:#2a2622;-webkit-text-stroke:0.2px #2a2622">6</span>
<span class="t" style="left:621.6px;top:290.29999999999995px;width:100px;text-align:right;font-size:6.6px;line-height:7.59px;color:#2a2622;-webkit-text-stroke:0.2px #2a2622">12</span>
<span class="t" style="left:621.6px;top:298.7px;width:100px;text-align:right;font-size:6.6px;line-height:7.59px;color:#2a2622;-webkit-text-stroke:0.2px #2a2622">18</span>
<span class="t" style="left:621.6px;top:306.29999999999995px;width:100px;text-align:right;font-size:6.6px;line-height:7.59px;color:#2a2622;-webkit-text-stroke:0.2px #2a2622">24</span>
<span class="t" style="left:621.6px;top:314.4px;width:100px;text-align:right;font-size:6.6px;line-height:7.59px;color:#2a2622;-webkit-text-stroke:0.2px #2a2622">30</span>
<span class="t" style="left:621.6px;top:322.0px;width:100px;text-align:right;font-size:6.6px;line-height:7.59px;color:#2a2622;-webkit-text-stroke:0.2px #2a2622">36</span>
<span class="t" style="left:621.6px;top:333.4px;width:100px;text-align:right;font-size:6.6px;line-height:7.59px;color:#2a2622;-webkit-text-stroke:0.2px #2a2622">48</span>
<span class="t" style="left:621.6px;top:343.09999999999997px;width:100px;text-align:right;font-size:6.6px;line-height:7.59px;color:#2a2622;-webkit-text-stroke:0.2px #2a2622">60</span>
<svg style="left:708.3000000000001px;top:299px" width="8" height="8" viewBox="0 0 8 8"><path d="M7,0.8 L1,4 L7,7.2z" fill="#efebe8" stroke="#4a4542" stroke-width="0.6"/></svg>
<div style="left:676.4000000000001px;top:360.3px;width:4.6px;height:2.2px;background:#2a2624;"></div>
<div style="left:682.7px;top:360.3px;width:4.6px;height:2.2px;background:#2a2624;"></div>
<div style="left:689.0000000000001px;top:360.3px;width:4.6px;height:2.2px;background:#2a2624;"></div>
<div style="left:695.3000000000001px;top:360.3px;width:4.6px;height:2.2px;background:#2a2624;"></div>
<div style="left:701.6000000000001px;top:360.3px;width:4.6px;height:2.2px;background:#2a2624;"></div>
<div style="left:707.9000000000001px;top:360.3px;width:4.6px;height:2.2px;background:#2a2624;"></div>
<div style="left:727.3000000000001px;top:266px;width:59.69999999999993px;height:88.5px;background:#a49c97;"></div>
<div style="left:727.3000000000001px;top:355.5px;width:59.69999999999993px;height:11.5px;background:#a49c97;"></div>
<span class="t" style="left:734.5000000000001px;top:269.3px;width:21px;height:7.6px;line-height:7.6px;background:#efebe8;border-radius:4px;text-align:center;font-size:6.6px;color:#2a2624;-webkit-text-stroke:0.2px #2a2624;box-shadow:0 0 0 0.7px #6a645f">-Inf</span>
<span class="t" style="left:734.5000000000001px;top:281.2px;width:21px;height:7.6px;line-height:7.6px;background:#efebe8;text-align:center;font-size:6.6px;color:#2a2624;-webkit-text-stroke:0.2px #2a2624;box-shadow:0 0 0 0.7px #6a645f">-18.0</span>
<svg style="left:736.0000000000001px;top:292.8px" width="18" height="20" viewBox="0 0 18 20"><path d="M3.27,17.33 A8.1,8.1 0 1 1 14.73,17.33" fill="none" stroke="#2a2624" stroke-width="1.5"/><path d="M8.46,10.76 L4.50,4.51" stroke="#2a2624" stroke-width="1.7"/><path d="M6.6,0 h4.8 l-2.4,2.6z" fill="#8cc8d8"/></svg>
<span class="t" style="left:737.7000000000002px;top:315.7px;width:14.6px;height:14.5px;line-height:14.5px;background:#f3b13a;text-align:center;font-size:8px;font-weight:bold;color:#1e1b19;box-shadow:0 0 0 0.8px #9a7020">25</span>
<span class="t" style="left:738.5000000000001px;top:332.7px;width:13px;height:8.3px;line-height:8.3px;background:#d2ccc8;text-align:center;font-size:6.4px;font-weight:bold;color:#2a2624;box-shadow:0 0 0 0.7px #6a645f">S</span>
<div style="left:738.5000000000001px;top:343.6px;width:13px;height:8.2px;background:#d2ccc8;box-shadow:0 0 0 0.7px #6a645f"></div>
<div style="left:743.0000000000001px;top:345.7px;width:4px;height:4px;background:#3a3633;border-radius:50%"></div>
<div style="left:760.7px;top:269px;width:7px;height:83px;background:#1f1c1a;"></div>
<div style="left:763.9000000000001px;top:269px;width:0.6px;height:83px;background:#4a4542;"></div>
<div style="left:769.7px;top:272px;width:2.2px;height:0.8px;background:#5a544f;"></div>
<div style="left:769.7px;top:277px;width:2.2px;height:0.8px;background:#5a544f;"></div>
<div style="left:769.7px;top:285.8px;width:2.2px;height:0.8px;background:#5a544f;"></div>
<div style="left:769.7px;top:293.9px;width:2.2px;height:0.8px;background:#5a544f;"></div>
<div style="left:769.7px;top:302.3px;width:2.2px;height:0.8px;background:#5a544f;"></div>
<div style="left:769.7px;top:309.9px;width:2.2px;height:0.8px;background:#5a544f;"></div>
<div style="left:769.7px;top:318px;width:2.2px;height:0.8px;background:#5a544f;"></div>
<div style="left:769.7px;top:325.6px;width:2.2px;height:0.8px;background:#5a544f;"></div>
<div style="left:769.7px;top:337px;width:2.2px;height:0.8px;background:#5a544f;"></div>
<div style="left:769.7px;top:346.7px;width:2.2px;height:0.8px;background:#5a544f;"></div>
<div style="left:769.7px;top:314px;width:2.2px;height:0.8px;background:#5a544f;"></div>
<div style="left:769.7px;top:321.5px;width:2.2px;height:0.8px;background:#5a544f;"></div>
<div style="left:769.7px;top:331px;width:2.2px;height:0.8px;background:#5a544f;"></div>
<div style="left:769.7px;top:342px;width:2.2px;height:0.8px;background:#5a544f;"></div>
<div style="left:769.7px;top:350.5px;width:2.2px;height:0.8px;background:#5a544f;"></div>
<span class="t" style="left:682.5px;top:273.4px;width:100px;text-align:right;font-size:6.6px;line-height:7.59px;color:#2a2622;-webkit-text-stroke:0.2px #2a2622">0</span>
<span class="t" style="left:682.5px;top:282.2px;width:100px;text-align:right;font-size:6.6px;line-height:7.59px;color:#2a2622;-webkit-text-stroke:0.2px #2a2622">6</span>
<span class="t" style="left:682.5px;top:290.29999999999995px;width:100px;text-align:right;font-size:6.6px;line-height:7.59px;color:#2a2622;-webkit-text-stroke:0.2px #2a2622">12</span>
<span class="t" style="left:682.5px;top:298.7px;width:100px;text-align:right;font-size:6.6px;line-height:7.59px;color:#2a2622;-webkit-text-stroke:0.2px #2a2622">18</span>
<span class="t" style="left:682.5px;top:306.29999999999995px;width:100px;text-align:right;font-size:6.6px;line-height:7.59px;color:#2a2622;-webkit-text-stroke:0.2px #2a2622">24</span>
<span class="t" style="left:682.5px;top:314.4px;width:100px;text-align:right;font-size:6.6px;line-height:7.59px;color:#2a2622;-webkit-text-stroke:0.2px #2a2622">30</span>
<span class="t" style="left:682.5px;top:322.0px;width:100px;text-align:right;font-size:6.6px;line-height:7.59px;color:#2a2622;-webkit-text-stroke:0.2px #2a2622">36</span>
<span class="t" style="left:682.5px;top:333.4px;width:100px;text-align:right;font-size:6.6px;line-height:7.59px;color:#2a2622;-webkit-text-stroke:0.2px #2a2622">48</span>
<span class="t" style="left:682.5px;top:343.09999999999997px;width:100px;text-align:right;font-size:6.6px;line-height:7.59px;color:#2a2622;-webkit-text-stroke:0.2px #2a2622">60</span>
<svg style="left:769.2px;top:298px" width="8" height="8" viewBox="0 0 8 8"><path d="M7,0.8 L1,4 L7,7.2z" fill="#efebe8" stroke="#4a4542" stroke-width="0.6"/></svg>
<div style="left:737.3000000000001px;top:360.3px;width:4.6px;height:2.2px;background:#2a2624;"></div>
<div style="left:743.6px;top:360.3px;width:4.6px;height:2.2px;background:#2a2624;"></div>
<div style="left:749.9000000000001px;top:360.3px;width:4.6px;height:2.2px;background:#2a2624;"></div>
<div style="left:756.2px;top:360.3px;width:4.6px;height:2.2px;background:#2a2624;"></div>
<div style="left:762.5000000000001px;top:360.3px;width:4.6px;height:2.2px;background:#2a2624;"></div>
<div style="left:768.8000000000001px;top:360.3px;width:4.6px;height:2.2px;background:#2a2624;"></div>
<div style="left:788.2px;top:266px;width:41.0px;height:88.5px;background:#a49c97;"></div>
<div style="left:788.2px;top:355.5px;width:41.0px;height:11.5px;background:#a49c97;"></div>
<span class="t" style="left:791.6px;top:269.3px;width:21px;height:7.6px;line-height:7.6px;background:#efebe8;border-radius:4px;text-align:center;font-size:6.6px;color:#2a2624;-webkit-text-stroke:0.2px #2a2624;box-shadow:0 0 0 0.7px #6a645f">-Inf</span>
<span class="t" style="left:791.6px;top:281.2px;width:21px;height:7.6px;line-height:7.6px;background:#efebe8;text-align:center;font-size:6.6px;color:#2a2624;-webkit-text-stroke:0.2px #2a2624;box-shadow:0 0 0 0.7px #6a645f">0</span>
<svg style="left:793.1px;top:292.8px" width="18" height="20" viewBox="0 0 18 20"><path d="M3.27,17.33 A8.1,8.1 0 1 1 14.73,17.33" fill="none" stroke="#2a2624" stroke-width="1.5"/><path d="M9.00,10.60 L9.00,3.20" stroke="#2a2624" stroke-width="1.7"/><path d="M6.6,0 h4.8 l-2.4,2.6z" fill="#2a2624"/></svg>
<span class="t" style="left:794.8000000000001px;top:315.7px;width:14.6px;height:14.5px;line-height:14.5px;background:#f3b13a;text-align:center;font-size:8px;font-weight:bold;color:#1e1b19;box-shadow:0 0 0 0.8px #9a7020">26</span>
<span class="t" style="left:795.6px;top:332.7px;width:13px;height:8.3px;line-height:8.3px;background:#d2ccc8;text-align:center;font-size:6.4px;font-weight:bold;color:#2a2624;box-shadow:0 0 0 0.7px #6a645f">S</span>
<div style="left:795.6px;top:343.6px;width:13px;height:8.2px;background:#d2ccc8;box-shadow:0 0 0 0.7px #6a645f"></div>
<div style="left:800.1px;top:345.7px;width:4px;height:4px;background:#3a3633;border-radius:50%"></div>
<div style="left:817.6px;top:269px;width:7px;height:83px;background:#1f1c1a;"></div>
<div style="left:820.8000000000001px;top:269px;width:0.6px;height:83px;background:#4a4542;"></div>
<div style="left:826.6px;top:272px;width:2.2px;height:0.8px;background:#5a544f;"></div>
<div style="left:826.6px;top:277px;width:2.2px;height:0.8px;background:#5a544f;"></div>
<div style="left:826.6px;top:285.8px;width:2.2px;height:0.8px;background:#5a544f;"></div>
<div style="left:826.6px;top:293.9px;width:2.2px;height:0.8px;background:#5a544f;"></div>
<div style="left:826.6px;top:302.3px;width:2.2px;height:0.8px;background:#5a544f;"></div>
<div style="left:826.6px;top:309.9px;width:2.2px;height:0.8px;background:#5a544f;"></div>
<div style="left:826.6px;top:318px;width:2.2px;height:0.8px;background:#5a544f;"></div>
<div style="left:826.6px;top:325.6px;width:2.2px;height:0.8px;background:#5a544f;"></div>
<div style="left:826.6px;top:337px;width:2.2px;height:0.8px;background:#5a544f;"></div>
<div style="left:826.6px;top:346.7px;width:2.2px;height:0.8px;background:#5a544f;"></div>
<div style="left:826.6px;top:314px;width:2.2px;height:0.8px;background:#5a544f;"></div>
<div style="left:826.6px;top:321.5px;width:2.2px;height:0.8px;background:#5a544f;"></div>
<div style="left:826.6px;top:331px;width:2.2px;height:0.8px;background:#5a544f;"></div>
<div style="left:826.6px;top:342px;width:2.2px;height:0.8px;background:#5a544f;"></div>
<div style="left:826.6px;top:350.5px;width:2.2px;height:0.8px;background:#5a544f;"></div>
<div style="left:793.2px;top:360.3px;width:4.6px;height:2.2px;background:#2a2624;"></div>
<div style="left:799.5px;top:360.3px;width:4.6px;height:2.2px;background:#2a2624;"></div>
<div style="left:805.8000000000001px;top:360.3px;width:4.6px;height:2.2px;background:#2a2624;"></div>
<div style="left:812.1px;top:360.3px;width:4.6px;height:2.2px;background:#2a2624;"></div>
<div style="left:818.4000000000001px;top:360.3px;width:4.6px;height:2.2px;background:#2a2624;"></div>
<div style="left:824.7px;top:360.3px;width:4.6px;height:2.2px;background:#2a2624;"></div>
<div style="left:830.4000000000001px;top:266px;width:59.09999999999991px;height:88.5px;background:#a49c97;"></div>
<div style="left:830.4000000000001px;top:355.5px;width:59.09999999999991px;height:11.5px;background:#a49c97;"></div>
<span class="t" style="left:837.6000000000001px;top:269.3px;width:21px;height:7.6px;line-height:7.6px;background:#efebe8;border-radius:4px;text-align:center;font-size:6.6px;color:#2a2624;-webkit-text-stroke:0.2px #2a2624;box-shadow:0 0 0 0.7px #6a645f">-Inf</span>
<span class="t" style="left:837.6000000000001px;top:281.2px;width:21px;height:7.6px;line-height:7.6px;background:#efebe8;text-align:center;font-size:6.6px;color:#2a2624;-webkit-text-stroke:0.2px #2a2624;box-shadow:0 0 0 0.7px #6a645f">0</span>
<svg style="left:839.1000000000001px;top:292.8px" width="18" height="20" viewBox="0 0 18 20"><path d="M3.27,17.33 A8.1,8.1 0 1 1 14.73,17.33" fill="none" stroke="#2a2624" stroke-width="1.5"/><path d="M9.00,10.60 L9.00,3.20" stroke="#2a2624" stroke-width="1.7"/><path d="M6.6,0 h4.8 l-2.4,2.6z" fill="#2a2624"/></svg>
<span class="t" style="left:840.8000000000002px;top:315.7px;width:14.6px;height:14.5px;line-height:14.5px;background:#f3b13a;text-align:center;font-size:8px;font-weight:bold;color:#1e1b19;box-shadow:0 0 0 0.8px #9a7020">A</span>
<span class="t" style="left:841.6000000000001px;top:332.7px;width:13px;height:8.3px;line-height:8.3px;background:#d2ccc8;text-align:center;font-size:6.4px;font-weight:bold;color:#2a2624;box-shadow:0 0 0 0.7px #6a645f">S</span>
<div style="left:863.8000000000001px;top:269px;width:7px;height:83px;background:#1f1c1a;"></div>
<div style="left:867.0000000000001px;top:269px;width:0.6px;height:83px;background:#4a4542;"></div>
<div style="left:872.8000000000001px;top:272px;width:2.2px;height:0.8px;background:#5a544f;"></div>
<div style="left:872.8000000000001px;top:277px;width:2.2px;height:0.8px;background:#5a544f;"></div>
<div style="left:872.8000000000001px;top:285.8px;width:2.2px;height:0.8px;background:#5a544f;"></div>
<div style="left:872.8000000000001px;top:293.9px;width:2.2px;height:0.8px;background:#5a544f;"></div>
<div style="left:872.8000000000001px;top:302.3px;width:2.2px;height:0.8px;background:#5a544f;"></div>
<div style="left:872.8000000000001px;top:309.9px;width:2.2px;height:0.8px;background:#5a544f;"></div>
<div style="left:872.8000000000001px;top:318px;width:2.2px;height:0.8px;background:#5a544f;"></div>
<div style="left:872.8000000000001px;top:325.6px;width:2.2px;height:0.8px;background:#5a544f;"></div>
<div style="left:872.8000000000001px;top:337px;width:2.2px;height:0.8px;background:#5a544f;"></div>
<div style="left:872.8000000000001px;top:346.7px;width:2.2px;height:0.8px;background:#5a544f;"></div>
<div style="left:872.8000000000001px;top:314px;width:2.2px;height:0.8px;background:#5a544f;"></div>
<div style="left:872.8000000000001px;top:321.5px;width:2.2px;height:0.8px;background:#5a544f;"></div>
<div style="left:872.8000000000001px;top:331px;width:2.2px;height:0.8px;background:#5a544f;"></div>
<div style="left:872.8000000000001px;top:342px;width:2.2px;height:0.8px;background:#5a544f;"></div>
<div style="left:872.8000000000001px;top:350.5px;width:2.2px;height:0.8px;background:#5a544f;"></div>
<span class="t" style="left:785.6px;top:273.4px;width:100px;text-align:right;font-size:6.6px;line-height:7.59px;color:#2a2622;-webkit-text-stroke:0.2px #2a2622">0</span>
<span class="t" style="left:785.6px;top:282.2px;width:100px;text-align:right;font-size:6.6px;line-height:7.59px;color:#2a2622;-webkit-text-stroke:0.2px #2a2622">6</span>
<span class="t" style="left:785.6px;top:290.29999999999995px;width:100px;text-align:right;font-size:6.6px;line-height:7.59px;color:#2a2622;-webkit-text-stroke:0.2px #2a2622">12</span>
<span class="t" style="left:785.6px;top:298.7px;width:100px;text-align:right;font-size:6.6px;line-height:7.59px;color:#2a2622;-webkit-text-stroke:0.2px #2a2622">18</span>
<span class="t" style="left:785.6px;top:306.29999999999995px;width:100px;text-align:right;font-size:6.6px;line-height:7.59px;color:#2a2622;-webkit-text-stroke:0.2px #2a2622">24</span>
<span class="t" style="left:785.6px;top:314.4px;width:100px;text-align:right;font-size:6.6px;line-height:7.59px;color:#2a2622;-webkit-text-stroke:0.2px #2a2622">30</span>
<span class="t" style="left:785.6px;top:322.0px;width:100px;text-align:right;font-size:6.6px;line-height:7.59px;color:#2a2622;-webkit-text-stroke:0.2px #2a2622">36</span>
<span class="t" style="left:785.6px;top:333.4px;width:100px;text-align:right;font-size:6.6px;line-height:7.59px;color:#2a2622;-webkit-text-stroke:0.2px #2a2622">48</span>
<span class="t" style="left:785.6px;top:343.09999999999997px;width:100px;text-align:right;font-size:6.6px;line-height:7.59px;color:#2a2622;-webkit-text-stroke:0.2px #2a2622">60</span>
<svg style="left:872.3000000000001px;top:273px" width="8" height="8" viewBox="0 0 8 8"><path d="M7,0.8 L1,4 L7,7.2z" fill="#efebe8" stroke="#4a4542" stroke-width="0.6"/></svg>
<div style="left:840.4000000000001px;top:360.3px;width:4.6px;height:2.2px;background:#2a2624;"></div>
<div style="left:846.7px;top:360.3px;width:4.6px;height:2.2px;background:#2a2624;"></div>
<div style="left:853.0000000000001px;top:360.3px;width:4.6px;height:2.2px;background:#2a2624;"></div>
<div style="left:859.3000000000001px;top:360.3px;width:4.6px;height:2.2px;background:#2a2624;"></div>
<div style="left:865.6000000000001px;top:360.3px;width:4.6px;height:2.2px;background:#2a2624;"></div>
<div style="left:871.9000000000001px;top:360.3px;width:4.6px;height:2.2px;background:#2a2624;"></div>
<div style="left:890.7px;top:266px;width:59.299999999999955px;height:88.5px;background:#a49c97;"></div>
<div style="left:890.7px;top:355.5px;width:59.299999999999955px;height:11.5px;background:#a49c97;"></div>
<span class="t" style="left:897.9000000000001px;top:269.3px;width:21px;height:7.6px;line-height:7.6px;background:#efebe8;border-radius:4px;text-align:center;font-size:6.6px;color:#2a2624;-webkit-text-stroke:0.2px #2a2624;box-shadow:0 0 0 0.7px #6a645f">-7.91</span>
<span class="t" style="left:897.9000000000001px;top:281.2px;width:21px;height:7.6px;line-height:7.6px;background:#efebe8;text-align:center;font-size:6.6px;color:#2a2624;-webkit-text-stroke:0.2px #2a2624;box-shadow:0 0 0 0.7px #6a645f">0</span>
<svg style="left:899.4000000000001px;top:292.8px" width="18" height="20" viewBox="0 0 18 20"><path d="M3.27,17.33 A8.1,8.1 0 1 1 14.73,17.33" fill="none" stroke="#2a2624" stroke-width="1.5"/><path d="M9.00,10.60 L9.00,3.20" stroke="#2a2624" stroke-width="1.7"/><path d="M6.6,0 h4.8 l-2.4,2.6z" fill="#2a2624"/></svg>
<span class="t" style="left:899.9000000000001px;top:322.5px;width:17px;height:7.5px;line-height:7.5px;background:#ddd8d4;text-align:center;font-size:6.2px;color:#2a2624;box-shadow:0 0 0 0.7px #6a645f">Solo</span>
<svg style="left:898.4000000000001px;top:331px" width="20" height="20" viewBox="0 0 20 20"><path d="M4.34,15.66 A8,8 0 1 1 15.66,15.66" fill="none" stroke="#2a2624" stroke-width="1.3"/><path d="M4.34,15.66 A8,8 0 0 1 10.75,2.04" fill="none" stroke="#9a9ab8" stroke-width="1.7000000000000002"/><path d="M10.09,9.00 L10.78,1.74" stroke="#2a2624" stroke-width="1.5"/><circle cx="10" cy="16.5" r="2" fill="none" stroke="#2a2624" stroke-width="1"/></svg>
<div style="left:924.1px;top:269px;width:7px;height:83px;background:#1f1c1a;"></div>
<div style="left:927.3000000000001px;top:269px;width:0.6px;height:83px;background:#4a4542;"></div>
<div style="left:924.1px;top:305.5px;width:7px;height:46.5px;background:#6fc24a;"></div>
<div style="left:927.3000000000001px;top:305.5px;width:0.6px;height:46.5px;background:#5aa03c;"></div>
<div style="left:924.1px;top:296px;width:7px;height:9.5px;background:#4f8a3a;"></div>
<div style="left:933.1px;top:272px;width:2.2px;height:0.8px;background:#5a544f;"></div>
<div style="left:933.1px;top:277px;width:2.2px;height:0.8px;background:#5a544f;"></div>
<div style="left:933.1px;top:285.8px;width:2.2px;height:0.8px;background:#5a544f;"></div>
<div style="left:933.1px;top:293.9px;width:2.2px;height:0.8px;background:#5a544f;"></div>
<div style="left:933.1px;top:302.3px;width:2.2px;height:0.8px;background:#5a544f;"></div>
<div style="left:933.1px;top:309.9px;width:2.2px;height:0.8px;background:#5a544f;"></div>
<div style="left:933.1px;top:318px;width:2.2px;height:0.8px;background:#5a544f;"></div>
<div style="left:933.1px;top:325.6px;width:2.2px;height:0.8px;background:#5a544f;"></div>
<div style="left:933.1px;top:337px;width:2.2px;height:0.8px;background:#5a544f;"></div>
<div style="left:933.1px;top:346.7px;width:2.2px;height:0.8px;background:#5a544f;"></div>
<div style="left:933.1px;top:314px;width:2.2px;height:0.8px;background:#5a544f;"></div>
<div style="left:933.1px;top:321.5px;width:2.2px;height:0.8px;background:#5a544f;"></div>
<div style="left:933.1px;top:331px;width:2.2px;height:0.8px;background:#5a544f;"></div>
<div style="left:933.1px;top:342px;width:2.2px;height:0.8px;background:#5a544f;"></div>
<div style="left:933.1px;top:350.5px;width:2.2px;height:0.8px;background:#5a544f;"></div>
<span class="t" style="left:845.9px;top:273.4px;width:100px;text-align:right;font-size:6.6px;line-height:7.59px;color:#2a2622;-webkit-text-stroke:0.2px #2a2622">0</span>
<span class="t" style="left:845.9px;top:282.2px;width:100px;text-align:right;font-size:6.6px;line-height:7.59px;color:#2a2622;-webkit-text-stroke:0.2px #2a2622">6</span>
<span class="t" style="left:845.9px;top:290.29999999999995px;width:100px;text-align:right;font-size:6.6px;line-height:7.59px;color:#2a2622;-webkit-text-stroke:0.2px #2a2622">12</span>
<span class="t" style="left:845.9px;top:298.7px;width:100px;text-align:right;font-size:6.6px;line-height:7.59px;color:#2a2622;-webkit-text-stroke:0.2px #2a2622">18</span>
<span class="t" style="left:845.9px;top:306.29999999999995px;width:100px;text-align:right;font-size:6.6px;line-height:7.59px;color:#2a2622;-webkit-text-stroke:0.2px #2a2622">24</span>
<span class="t" style="left:845.9px;top:314.4px;width:100px;text-align:right;font-size:6.6px;line-height:7.59px;color:#2a2622;-webkit-text-stroke:0.2px #2a2622">30</span>
<span class="t" style="left:845.9px;top:322.0px;width:100px;text-align:right;font-size:6.6px;line-height:7.59px;color:#2a2622;-webkit-text-stroke:0.2px #2a2622">36</span>
<span class="t" style="left:845.9px;top:333.4px;width:100px;text-align:right;font-size:6.6px;line-height:7.59px;color:#2a2622;-webkit-text-stroke:0.2px #2a2622">48</span>
<span class="t" style="left:845.9px;top:343.09999999999997px;width:100px;text-align:right;font-size:6.6px;line-height:7.59px;color:#2a2622;-webkit-text-stroke:0.2px #2a2622">60</span>
<svg style="left:932.6px;top:273px" width="8" height="8" viewBox="0 0 8 8"><path d="M7,0.8 L1,4 L7,7.2z" fill="#efebe8" stroke="#4a4542" stroke-width="0.6"/></svg>
<div style="left:900.7px;top:360.3px;width:4.6px;height:2.2px;background:#2a2624;"></div>
<div style="left:907.0px;top:360.3px;width:4.6px;height:2.2px;background:#2a2624;"></div>
<div style="left:913.3000000000001px;top:360.3px;width:4.6px;height:2.2px;background:#2a2624;"></div>
<div style="left:919.6px;top:360.3px;width:4.6px;height:2.2px;background:#2a2624;"></div>
<div style="left:925.9000000000001px;top:360.3px;width:4.6px;height:2.2px;background:#2a2624;"></div>
<div style="left:932.2px;top:360.3px;width:4.6px;height:2.2px;background:#2a2624;"></div>
<div style="left:504.6px;top:360px;width:27px;height:3px;background:#e8b050;"></div>
<div style="left:425.5px;top:370px;width:226px;height:4.5px;background:#8a837e;border-radius:2px"></div>
<svg style="left:954px;top:118px" width="13" height="13" viewBox="0 0 13 13"><circle cx="6.3" cy="6.8" r="5" fill="#7e7772" stroke="#4e4945" stroke-width="1"/><path d="M3.8,4.8 h5 M3.8,6.8 h5 M3.8,8.8 h5" stroke="#d8d2ce" stroke-width="0.9"/></svg>
<svg style="left:954px;top:133px" width="13" height="13" viewBox="0 0 13 13"><circle cx="6.3" cy="6.5" r="5" fill="#f0b030" stroke="#8a6a20" stroke-width="0.8"/><path d="M4.3,4 v5 M6.3,4 v5 M8.3,4 v5" stroke="#5a4010" stroke-width="1"/></svg>
<svg style="left:952px;top:293.2px" width="13" height="13" viewBox="0 0 13 13"><circle cx="6.5" cy="6.5" r="5.2" fill="#2e2a28" stroke="#4a4542" stroke-width="0.6"/><circle cx="6.5" cy="6.5" r="2" fill="none" stroke="#6a6460" stroke-width="0.8"/></svg>
<svg style="left:952px;top:325.9px" width="13" height="13" viewBox="0 0 13 13"><circle cx="6.5" cy="6.5" r="5.2" fill="#f0b030" stroke="#4a4542" stroke-width="0.6"/><circle cx="6.5" cy="6.5" r="2" fill="none" stroke="#9a7020" stroke-width="0.8"/></svg>
<svg style="left:952px;top:337.8px" width="13" height="13" viewBox="0 0 13 13"><circle cx="6.5" cy="6.5" r="5.2" fill="#2e2a28" stroke="#4a4542" stroke-width="0.6"/><circle cx="6.5" cy="6.5" r="2" fill="none" stroke="#6a6460" stroke-width="0.8"/></svg>
<svg style="left:952px;top:349.4px" width="13" height="13" viewBox="0 0 13 13"><circle cx="6.5" cy="6.5" r="5.2" fill="#2e2a28" stroke="#4a4542" stroke-width="0.6"/><circle cx="6.5" cy="6.5" r="2" fill="none" stroke="#6a6460" stroke-width="0.8"/></svg>
<svg style="left:952px;top:361.7px" width="13" height="13" viewBox="0 0 13 13"><circle cx="6.5" cy="6.5" r="5.2" fill="#f0b030" stroke="#4a4542" stroke-width="0.6"/><circle cx="6.5" cy="6.5" r="2" fill="none" stroke="#9a7020" stroke-width="0.8"/></svg>
<div style="left:953.3px;top:305.8px;width:10.5px;height:19px;background:#f0b030;border-radius:5px;box-shadow:0 0 0 0.6px #8a6a20"></div>
<div style="left:953.3px;top:315.2px;width:10.5px;height:0.7px;background:#8a6a20;"></div>
<div style="left:312px;top:381px;width:657px;height:137.5px;background:#5a5450;"></div>
<svg style="left:315px;top:384px" width="649.5" height="131" viewBox="0 0 649.5 131"><rect x="0" y="0" width="649.5" height="131" fill="#2a2523"/><line x1="58.40" y1="0" x2="58.40" y2="131" stroke="#433c39" stroke-width="0.8"/><line x1="92.56" y1="0" x2="92.56" y2="131" stroke="#433c39" stroke-width="0.8"/><line x1="116.80" y1="0" x2="116.80" y2="131" stroke="#433c39" stroke-width="0.8"/><line x1="135.60" y1="0" x2="135.60" y2="131" stroke="#433c39" stroke-width="0.8"/><line x1="150.96" y1="0" x2="150.96" y2="131" stroke="#433c39" stroke-width="0.8"/><line x1="163.95" y1="0" x2="163.95" y2="131" stroke="#433c39" stroke-width="0.8"/><line x1="175.20" y1="0" x2="175.20" y2="131" stroke="#433c39" stroke-width="0.8"/><line x1="185.12" y1="0" x2="185.12" y2="131" stroke="#433c39" stroke-width="0.8"/><line x1="194.00" y1="0" x2="194.00" y2="131" stroke="#504844" stroke-width="0.8"/><line x1="252.40" y1="0" x2="252.40" y2="131" stroke="#433c39" stroke-width="0.8"/><line x1="286.56" y1="0" x2="286.56" y2="131" stroke="#433c39" stroke-width="0.8"/><line x1="310.80" y1="0" x2="310.80" y2="131" stroke="#433c39" stroke-width="0.8"/><line x1="329.60" y1="0" x2="329.60" y2="131" stroke="#433c39" stroke-width="0.8"/><line x1="344.96" y1="0" x2="344.96" y2="131" stroke="#433c39" stroke-width="0.8"/><line x1="357.95" y1="0" x2="357.95" y2="131" stroke="#433c39" stroke-width="0.8"/><line x1="369.20" y1="0" x2="369.20" y2="131" stroke="#433c39" stroke-width="0.8"/><line x1="379.12" y1="0" x2="379.12" y2="131" stroke="#433c39" stroke-width="0.8"/><line x1="388.00" y1="0" x2="388.00" y2="131" stroke="#504844" stroke-width="0.8"/><line x1="446.40" y1="0" x2="446.40" y2="131" stroke="#433c39" stroke-width="0.8"/><line x1="480.56" y1="0" x2="480.56" y2="131" stroke="#433c39" stroke-width="0.8"/><line x1="504.80" y1="0" x2="504.80" y2="131" stroke="#433c39" stroke-width="0.8"/><line x1="523.60" y1="0" x2="523.60" y2="131" stroke="#433c39" stroke-width="0.8"/><line x1="538.96" y1="0" x2="538.96" y2="131" stroke="#433c39" stroke-width="0.8"/><line x1="551.95" y1="0" x2="551.95" y2="131" stroke="#433c39" stroke-width="0.8"/><line x1="563.20" y1="0" x2="563.20" y2="131" stroke="#433c39" stroke-width="0.8"/><line x1="573.12" y1="0" x2="573.12" y2="131" stroke="#433c39" stroke-width="0.8"/><line x1="582.00" y1="0" x2="582.00" y2="131" stroke="#504844" stroke-width="0.8"/><line x1="640.40" y1="0" x2="640.40" y2="131" stroke="#433c39" stroke-width="0.8"/><line x1="0" y1="13" x2="649.5" y2="13" stroke="#4a4440" stroke-width="0.8"/><line x1="0" y1="39" x2="649.5" y2="39" stroke="#4a4440" stroke-width="0.8"/><line x1="0" y1="65.69999999999999" x2="649.5" y2="65.69999999999999" stroke="#4a4440" stroke-width="0.8"/><line x1="0" y1="91.60000000000002" x2="649.5" y2="91.60000000000002" stroke="#4a4440" stroke-width="0.8"/><line x1="0" y1="117.60000000000002" x2="649.5" y2="117.60000000000002" stroke="#4a4440" stroke-width="0.8"/><polygon points="117.2,131.4 129.0,125.0 139.7,118.2 148.5,112.9 155.3,111.9 163.1,112.4 170.0,107.5 176.8,109.9 185.0,106.5 186.6,104.9 193.0,103.0 200.7,100.5 207.7,102.2 211.2,107.5 217.4,104.0 221.8,108.4 228.8,117.2 235.0,100.5 241.1,101.4 246.4,96.1 253.4,92.6 260.5,87.3 266.6,83.8 271.0,88.2 276.3,85.6 285.1,79.4 291.2,74.1 295.6,76.8 300.9,72.4 305.3,63.6 308.8,46.0 313.2,72.4 319.4,88.2 323.7,49.5 327.3,91.7 330.3,84.7 332.9,76.8 336.4,75.0 339.0,68.9 341.7,56.5 342.8,7.6 344.0,56.0 346.1,67.0 349.6,68.9 353.1,66.2 355.8,56.5 357.7,38.0 359.3,63.6 361.9,91.7 364.5,105.8 367.2,88.2 369.8,102.2 372.5,94.0 375.1,88.2 377.7,100.5 382.1,82.9 385.6,104.0 389.2,100.5 391.8,109.3 395.3,97.0 398.5,98.0 401.5,60.0 404.1,98.7 407.6,112.8 411.1,107.5 416.4,81.2 420.8,112.8 424.3,123.3 426.1,112.8 429.6,121.6 433.1,98.7 435.7,53.0 438.4,98.7 441.9,105.8 446.3,126.9 450.7,100.5 453.3,126.9 457.0,126.0 460.3,67.0 463.9,123.3 467.4,130.4 474.4,119.8 476.0,130.0 478.8,103.1 480.6,131.2 509.5,131.2 511.0,120.6 512.5,131.2 647.0,131.2 648.6,104.0 649.5,131.2" fill="#8c8480"/><path d="M90.00,135.00 C90.80,134.32 90.38,135.32 94.80,130.90 C99.22,126.48 109.27,115.98 116.50,108.50 C123.73,101.02 131.60,92.83 138.20,86.00 C144.80,79.17 151.00,72.33 156.10,67.50 C161.20,62.67 164.57,59.67 168.80,57.00 C173.03,54.33 177.27,52.75 181.50,51.50 C185.73,50.25 186.58,49.62 194.20,49.50 C201.82,49.38 217.47,50.75 227.20,50.80 C236.93,50.85 244.13,50.43 252.60,49.80 C261.07,49.17 268.68,48.02 278.00,47.00 C287.32,45.98 297.33,44.93 308.50,43.70 C319.67,42.47 331.07,40.45 345.00,39.60 C358.93,38.75 376.83,38.63 392.10,38.60 C407.37,38.57 422.83,39.15 436.60,39.40 C450.37,39.65 464.63,40.20 474.70,40.10 C484.77,40.00 491.08,39.35 497.00,38.80 C502.92,38.25 503.35,37.98 510.20,36.80 C517.05,35.62 530.90,32.75 538.10,31.70 C545.30,30.65 543.92,30.37 553.40,30.50 C562.88,30.63 578.98,31.78 595.00,32.50 C611.02,33.22 640.42,34.42 649.50,34.80" fill="none" stroke="#96cad8" stroke-width="1.4"/><circle cx="174.39999999999998" cy="67.30000000000001" r="3.6" fill="#2a2523" stroke="#e8a838" stroke-width="1.1"/><text x="174.39999999999998" y="69.30000000000001" font-size="4.5" text-anchor="middle" fill="#e8a838" font-family="Liberation Sans">1</text><circle cx="392.6" cy="39.89999999999998" r="3.6" fill="#2a2523" stroke="#e8a838" stroke-width="1.1"/><text x="392.6" y="41.89999999999998" font-size="4.5" text-anchor="middle" fill="#e8a838" font-family="Liberation Sans">2</text><circle cx="509.70000000000005" cy="36.80000000000001" r="4" fill="#f0a830"/><text x="509.70000000000005" y="38.80000000000001" font-size="5" text-anchor="middle" fill="#3a2a10" font-weight="bold" font-family="Liberation Sans">5</text><text x="11.5" y="15.3" font-size="6.3" text-anchor="end" fill="#b0a8a3" font-family="Liberation Sans">12</text><text x="11.5" y="41.3" font-size="6.3" text-anchor="end" fill="#b0a8a3" font-family="Liberation Sans">6</text><text x="11.5" y="67.99999999999999" font-size="6.3" text-anchor="end" fill="#b0a8a3" font-family="Liberation Sans">0</text><text x="11.5" y="93.90000000000002" font-size="6.3" text-anchor="end" fill="#b0a8a3" font-family="Liberation Sans">-6</text><text x="11.5" y="119.90000000000002" font-size="6.3" text-anchor="end" fill="#b0a8a3" font-family="Liberation Sans">-12</text><text x="193.60000000000002" y="129.5" font-size="6.3" text-anchor="middle" fill="#b0a8a3" font-family="Liberation Sans">100</text><text x="388" y="129.5" font-size="6.3" text-anchor="middle" fill="#b0a8a3" font-family="Liberation Sans">1k</text><text x="582" y="129.5" font-size="6.3" text-anchor="middle" fill="#b0a8a3" font-family="Liberation Sans">10k</text></svg>
<div style="left:57px;top:522.5px;width:911px;height:126px;background:#5a544f;border-radius:3px"></div>
<div style="left:60.5px;top:572px;width:3px;height:0.9px;background:#8a837e;"></div>
<div style="left:60.5px;top:574.5px;width:3px;height:0.9px;background:#8a837e;"></div>
<div style="left:61px;top:578.0px;width:2px;height:1.8px;background:#e0a030;"></div>
<div style="left:61px;top:581.4px;width:2px;height:1.8px;background:#e0a030;"></div>
<div style="left:61px;top:584.8px;width:2px;height:1.8px;background:#e0a030;"></div>
<div style="left:61px;top:588.2px;width:2px;height:1.8px;background:#e0a030;"></div>
<div style="left:61px;top:591.6px;width:2px;height:1.8px;background:#e0a030;"></div>
<div style="left:61px;top:595.0px;width:2px;height:1.8px;background:#e0a030;"></div>
<div style="left:67px;top:525px;width:237.5px;height:119.29999999999995px;background:#b6aea9;border-radius:3px"></div>
<svg style="left:68.5px;top:525.8px" width="11" height="11" viewBox="0 0 11 11"><circle cx="5.5" cy="5.5" r="4.2" fill="#f2b632" stroke="#c88a20" stroke-width="0.9"/></svg>
<span class="t" style="left:80px;top:526.8px;font-size:7.2px;line-height:8.28px;color:#2a2624;font-weight:bold;">Electric</span>
<div style="left:137.2px;top:535.8px;width:64.5px;height:43.2px;background:#a69e99;"></div>
<div style="left:204px;top:535.8px;width:63px;height:43.2px;background:#a69e99;"></div>
<div style="left:269px;top:535.8px;width:34px;height:43.2px;background:#a69e99;"></div>
<span class="t" style="left:51.900000000000006px;top:537.7px;width:100px;text-align:center;font-size:7.2px;line-height:8.28px;color:#2a2624;font-weight:bold;">Hammer</span>
<span class="t" style="left:119.5px;top:537.7px;width:100px;text-align:center;font-size:7.2px;line-height:8.28px;color:#2a2624;font-weight:bold;">Fork</span>
<span class="t" style="left:184px;top:537.7px;width:100px;text-align:center;font-size:7.2px;line-height:8.28px;color:#2a2624;font-weight:bold;">Damper / Pickup</span>
<span class="t" style="left:236.39999999999998px;top:537.7px;width:100px;text-align:center;font-size:7.2px;line-height:8.28px;color:#2a2624;font-weight:bold;">Global</span>
<svg style="left:76.0px;top:551.1px" width="22.6" height="22.6" viewBox="0 0 22.6 22.6"><path d="M5.43,17.17 A8.3,8.3 0 1 1 17.17,17.17" fill="none" stroke="#2a2624" stroke-width="1.7"/><path d="M5.43,17.17 A8.3,8.3 0 0 1 3.17,9.62" fill="none" stroke="#a8d4e0" stroke-width="2.1"/><path d="M10.32,11.10 L2.88,9.56" stroke="#2a2624" stroke-width="1.9"/></svg>
<span class="t" style="left:37.3px;top:546.5px;width:100px;text-align:center;font-size:7px;line-height:8.05px;color:#2a2624;-webkit-text-stroke:0.1px #2a2624">Stiffness</span>
<span class="t" style="left:37.3px;top:569.3px;width:100px;text-align:center;font-size:7px;line-height:8.05px;color:#2a2624;-webkit-text-stroke:0.1px #2a2624">21 %</span>
<svg style="left:107.10000000000001px;top:551.1px" width="22.6" height="22.6" viewBox="0 0 22.6 22.6"><path d="M5.43,17.17 A8.3,8.3 0 1 1 17.17,17.17" fill="none" stroke="#2a2624" stroke-width="1.7"/><path d="M5.43,17.17 A8.3,8.3 0 0 1 4.36,6.74" fill="none" stroke="#a8d4e0" stroke-width="2.1"/><path d="M10.46,10.75 L4.11,6.58" stroke="#2a2624" stroke-width="1.9"/></svg>
<span class="t" style="left:68.4px;top:546.5px;width:100px;text-align:center;font-size:7px;line-height:8.05px;color:#2a2624;-webkit-text-stroke:0.1px #2a2624">Noise</span>
<span class="t" style="left:68.4px;top:569.3px;width:100px;text-align:center;font-size:7px;line-height:8.05px;color:#2a2624;-webkit-text-stroke:0.1px #2a2624">29 %</span>
<svg style="left:143.2px;top:551.5px" width="22.6" height="22.6" viewBox="0 0 22.6 22.6"><path d="M5.43,17.17 A8.3,8.3 0 1 1 17.17,17.17" fill="none" stroke="#2a2624" stroke-width="1.7"/><path d="M5.43,17.17 A8.3,8.3 0 1 1 19.43,9.62" fill="none" stroke="#a8d4e0" stroke-width="2.1"/><path d="M12.28,11.10 L19.72,9.56" stroke="#2a2624" stroke-width="1.9"/></svg>
<span class="t" style="left:104.5px;top:546.5px;width:100px;text-align:center;font-size:7px;line-height:8.05px;color:#2a2624;-webkit-text-stroke:0.1px #2a2624">Tine</span>
<span class="t" style="left:104.5px;top:569.3px;width:100px;text-align:center;font-size:7px;line-height:8.05px;color:#2a2624;-webkit-text-stroke:0.1px #2a2624">79 %</span>
<svg style="left:173.29999999999998px;top:551.5px" width="22.6" height="22.6" viewBox="0 0 22.6 22.6"><path d="M5.43,17.17 A8.3,8.3 0 1 1 17.17,17.17" fill="none" stroke="#2a2624" stroke-width="1.7"/><path d="M5.43,17.17 A8.3,8.3 0 1 1 19.57,11.95" fill="none" stroke="#a8d4e0" stroke-width="2.1"/><path d="M12.30,11.38 L19.87,11.97" stroke="#2a2624" stroke-width="1.9"/></svg>
<span class="t" style="left:134.6px;top:546.5px;width:100px;text-align:center;font-size:7px;line-height:8.05px;color:#2a2624;-webkit-text-stroke:0.1px #2a2624">Tone</span>
<span class="t" style="left:134.6px;top:569.3px;width:100px;text-align:center;font-size:7px;line-height:8.05px;color:#2a2624;-webkit-text-stroke:0.1px #2a2624">85 %</span>
<svg style="left:210.89999999999998px;top:551.7px" width="22.6" height="22.6" viewBox="0 0 22.6 22.6"><path d="M5.43,17.17 A8.3,8.3 0 1 1 17.17,17.17" fill="none" stroke="#2a2624" stroke-width="1.7"/><path d="M5.43,17.17 A8.3,8.3 0 1 1 19.50,10.00" fill="none" stroke="#a8d4e0" stroke-width="2.1"/><path d="M12.29,11.14 L19.79,9.95" stroke="#2a2624" stroke-width="1.9"/></svg>
<span class="t" style="left:172.2px;top:546.5999999999999px;width:100px;text-align:center;font-size:7px;line-height:8.05px;color:#2a2624;-webkit-text-stroke:0.1px #2a2624">Symmetry</span>
<span class="t" style="left:172.2px;top:569.3px;width:100px;text-align:center;font-size:7px;line-height:8.05px;color:#2a2624;-webkit-text-stroke:0.1px #2a2624">80 %</span>
<svg style="left:275.09999999999997px;top:550.5px" width="22.6" height="22.6" viewBox="0 0 22.6 22.6"><path d="M5.43,17.17 A8.3,8.3 0 1 1 17.17,17.17" fill="none" stroke="#2a2624" stroke-width="1.7"/><path d="M5.43,17.17 A8.3,8.3 0 0 1 8.24,3.58" fill="none" stroke="#a8d4e0" stroke-width="2.1"/><path d="M10.93,10.37 L8.13,3.30" stroke="#2a2624" stroke-width="1.9"/></svg>
<span class="t" style="left:236.39999999999998px;top:546.5999999999999px;width:100px;text-align:center;font-size:7px;line-height:8.05px;color:#2a2624;-webkit-text-stroke:0.1px #2a2624">Volume</span>
<span class="t" style="left:236.39999999999998px;top:569.3px;width:100px;text-align:center;font-size:7px;line-height:8.05px;color:#2a2624;-webkit-text-stroke:0.1px #2a2624">-8.2 dB</span>
<span class="t" style="left:202.2px;top:548px;width:100px;text-align:center;font-size:7px;line-height:8.05px;color:#2a2624;-webkit-text-stroke:0.1px #2a2624">Type</span>
<span class="t" style="left:243.4px;top:557px;width:18px;height:7.5px;line-height:7.5px;background:#f0b03a;text-align:center;font-size:6.3px;font-weight:bold;color:#2a2624;box-shadow:0 0 0 0.7px #8a6a20">R</span>
<span class="t" style="left:243.4px;top:567.3px;width:18px;height:7.3px;line-height:7.3px;background:#e4dfdb;text-align:center;font-size:6.3px;font-weight:bold;color:#2a2624;box-shadow:0 0 0 0.7px #6a645f">W</span>
<span class="t" style="left:264.5px;top:526.7px;font-size:7px;line-height:8.05px;color:#2a2624;font-weight:bold;">A</span>
<span class="t" style="left:271.5px;top:526.7px;font-size:7px;line-height:8.05px;color:#2a2624;font-weight:bold;">A</span>
<span class="t" style="left:278.3px;top:526.7px;font-size:7px;line-height:8.05px;color:#2a2624;font-weight:bold;">S</span>
<div style="left:270.3px;top:526.5px;width:0.7px;height:8px;background:#8a837e;"></div>
<div style="left:277px;top:526.5px;width:0.7px;height:8px;background:#8a837e;"></div>
<svg style="left:283.5px;top:525px" width="22" height="11" viewBox="0 0 22 11"><circle cx="5" cy="5.5" r="4.3" fill="#d8d2ce" stroke="#2a2624" stroke-width="0.9"/><path d="M3,8 L7,3" stroke="#2a2624" stroke-width="1.2"/><circle cx="15.5" cy="5.5" r="4.3" fill="#d8d2ce" stroke="#2a2624" stroke-width="0.9"/><rect x="13" y="3" width="5" height="5" fill="#2a2624"/><rect x="14.2" y="3" width="2.6" height="1.6" fill="#d8d2ce"/></svg>
<div style="left:68.5px;top:581px;width:235.5px;height:62px;background:#262220;border:0.8px solid #4a4542;box-sizing:border-box"></div>
<div style="left:136.4px;top:581.5px;width:0.8px;height:61px;background:#4e4844;"></div>
<div style="left:137px;top:600.3px;width:166.5px;height:0.8px;background:#4e4844;"></div>
<div style="left:137px;top:621.7px;width:166.5px;height:0.8px;background:#4e4844;"></div>
<span class="t" style="left:139px;top:582.3px;font-size:7px;line-height:8.05px;color:#b8b0aa;-webkit-text-stroke:0.1px #b8b0aa">Stiffness</span>
<span class="t" style="left:225.3px;top:582.3px;font-size:7px;line-height:8.05px;color:#b8b0aa;-webkit-text-stroke:0.1px #b8b0aa">Vel</span>
<span class="t" style="left:268.7px;top:582.3px;font-size:7px;line-height:8.05px;color:#b8b0aa;-webkit-text-stroke:0.1px #b8b0aa">Key</span>
<span class="t" style="left:226px;top:590.5999999999999px;font-size:7px;line-height:8.05px;color:#f0b03a;font-weight:bold;-webkit-text-stroke:0.1px #f0b03a">0.0</span>
<span class="t" style="left:269.5px;top:590.5999999999999px;font-size:7px;line-height:8.05px;color:#f0b03a;font-weight:bold;-webkit-text-stroke:0.1px #f0b03a">50</span>
<span class="t" style="left:139px;top:603.3px;font-size:7px;line-height:8.05px;color:#b8b0aa;-webkit-text-stroke:0.1px #b8b0aa">Force</span>
<span class="t" style="left:182px;top:603.3px;font-size:7px;line-height:8.05px;color:#b8b0aa;-webkit-text-stroke:0.1px #b8b0aa">Amount</span>
<span class="t" style="left:225.3px;top:603.3px;font-size:7px;line-height:8.05px;color:#b8b0aa;-webkit-text-stroke:0.1px #b8b0aa">Vel</span>
<span class="t" style="left:268.7px;top:603.3px;font-size:7px;line-height:8.05px;color:#b8b0aa;-webkit-text-stroke:0.1px #b8b0aa">Key</span>
<span class="t" style="left:182px;top:611.5999999999999px;font-size:7px;line-height:8.05px;color:#8cc8e0;font-weight:bold;-webkit-text-stroke:0.1px #8cc8e0">41 %</span>
<span class="t" style="left:226px;top:611.5999999999999px;font-size:7px;line-height:8.05px;color:#f0b03a;font-weight:bold;-webkit-text-stroke:0.1px #f0b03a">79</span>
<span class="t" style="left:269.5px;top:611.5999999999999px;font-size:7px;line-height:8.05px;color:#f0b03a;font-weight:bold;-webkit-text-stroke:0.1px #f0b03a">35</span>
<span class="t" style="left:139px;top:624.3px;font-size:7px;line-height:8.05px;color:#b8b0aa;-webkit-text-stroke:0.1px #b8b0aa">Noise</span>
<span class="t" style="left:182px;top:624.3px;font-size:7px;line-height:8.05px;color:#b8b0aa;-webkit-text-stroke:0.1px #b8b0aa">Pitch</span>
<span class="t" style="left:225.3px;top:624.3px;font-size:7px;line-height:8.05px;color:#b8b0aa;-webkit-text-stroke:0.1px #b8b0aa">Decay</span>
<span class="t" style="left:268.7px;top:624.3px;font-size:7px;line-height:8.05px;color:#b8b0aa;-webkit-text-stroke:0.1px #b8b0aa">Key</span>
<span class="t" style="left:182px;top:632.5999999999999px;font-size:7px;line-height:8.05px;color:#8cc8e0;font-weight:bold;-webkit-text-stroke:0.1px #8cc8e0">42 %</span>
<span class="t" style="left:225.3px;top:632.5999999999999px;font-size:7px;line-height:8.05px;color:#8cc8e0;font-weight:bold;-webkit-text-stroke:0.1px #8cc8e0">38 %</span>
<span class="t" style="left:269.5px;top:632.5999999999999px;font-size:7px;line-height:8.05px;color:#f0b03a;font-weight:bold;-webkit-text-stroke:0.1px #f0b03a">56</span>
<svg style="left:74px;top:596px" width="58" height="36" viewBox="0 0 58 36"><g fill="none" stroke="#8a837e" stroke-width="0.9"><path d="M2.4,8.2 h11.3 l-1,3.15 l1,3.15 h-11.3 l1,-3.15z"/><rect x="5.5" y="9.6" width="5" height="3.5"/><path d="M13.7,10.2 h2.4 M16.1,2.8 h9 l2.5,1.6 h11 l2.5,-1.6 h7.7 v5.9 h-32.7z M16.1,11.1 h32.5 M31.7,11.1 v2.6 h6.9 v-2.6"/><rect x="48.8" y="2.8" width="2.8" height="9.8"/><path d="M51.6,5 h2.2 v5 h-2.2"/></g><path d="M16.1,18.4 L19,14.5 L37.6,25.3 L44.4,17 L48.8,17 L41.5,30.2 L36.6,29.7 Z" fill="none" stroke="#7fb8b4" stroke-width="1.1" stroke-linejoin="round"/><circle cx="46.3" cy="17.6" r="1.3" fill="none" stroke="#7fb8b4" stroke-width="0.8"/></svg>
<div style="left:306.5px;top:580.6px;width:3.5px;height:17px;background:#78c850;"></div>
<div style="left:306px;top:574px;width:4.5px;height:2px;background:#8a837e;"></div>
<div style="left:306px;top:577px;width:4.5px;height:2px;background:#8a837e;"></div>
<div style="left:312.1px;top:524.8px;width:156.29999999999995px;height:119.30000000000007px;background:#b6aea9;border-radius:3px"></div>
<svg style="left:313.6px;top:525.5999999999999px" width="11" height="11" viewBox="0 0 11 11"><circle cx="5.5" cy="5.5" r="4.2" fill="#f2b632" stroke="#c88a20" stroke-width="0.9"/></svg>
<span class="t" style="left:325px;top:526.5999999999999px;font-size:7.2px;line-height:8.28px;color:#2a2624;font-weight:bold;">Chorus-Ensemble</span>
<svg style="left:447px;top:525px" width="22" height="11" viewBox="0 0 22 11"><circle cx="5" cy="5.5" r="4.3" fill="#d8d2ce" stroke="#2a2624" stroke-width="0.9"/><path d="M3,8 L7,3" stroke="#2a2624" stroke-width="1.2"/><circle cx="15.5" cy="5.5" r="4.3" fill="#d8d2ce" stroke="#2a2624" stroke-width="0.9"/><rect x="13" y="3" width="5" height="5" fill="#2a2624"/><rect x="14.2" y="3" width="2.6" height="1.6" fill="#d8d2ce"/></svg>
<div style="left:315.2px;top:538.3px;width:115.4px;height:69.1px;background:#262220;border-radius:2px"></div>
<svg style="left:315px;top:538px" width="116" height="40" viewBox="0 0 116 40"><polyline points="2.00,17.36 2.50,16.76 3.00,16.17 3.50,15.59 4.00,15.03 4.50,14.48 5.00,13.96 5.50,13.47 6.00,13.01 6.50,12.58 7.00,12.18 7.50,11.83 8.00,11.51 8.50,11.23 9.00,10.99 9.50,10.80 10.00,10.66 10.50,10.56 11.00,10.51 11.50,10.50 12.00,10.55 12.50,10.64 13.00,10.77 13.50,10.95 14.00,11.18 14.50,11.45 15.00,11.76 15.50,12.11 16.00,12.50 16.50,12.92 17.00,13.38 17.50,13.87 18.00,14.38 18.50,14.92 19.00,15.48 19.50,16.05 20.00,16.64 20.50,17.24 21.00,17.85 21.50,18.46 22.00,19.07 22.50,19.68 23.00,20.28 23.50,20.87 24.00,21.44 24.50,21.99 25.00,22.53 25.50,23.04 26.00,23.52 26.50,23.97 27.00,24.38 27.50,24.76 28.00,25.11 28.50,25.41 29.00,25.67 29.50,25.89 30.00,26.06 30.50,26.19 31.00,26.27 31.50,26.30 32.00,26.28 32.50,26.22 33.00,26.11 33.50,25.96 34.00,25.76 34.50,25.52 35.00,25.23 35.50,24.90 36.00,24.54 36.50,24.13 37.00,23.70 37.50,23.23 38.00,22.73 38.50,22.21 39.00,21.66 39.50,21.09 40.00,20.51 40.50,19.92 41.00,19.31 41.50,18.70 42.00,18.09 42.50,17.48 43.00,16.88 43.50,16.28 44.00,15.70 44.50,15.14 45.00,14.59 45.50,14.07 46.00,13.57 46.50,13.10 47.00,12.66 47.50,12.26 48.00,11.89 48.50,11.57 49.00,11.28 49.50,11.04 50.00,10.84 50.50,10.68 51.00,10.58 51.50,10.52 52.00,10.50 52.50,10.53 53.00,10.61 53.50,10.74 54.00,10.91 54.50,11.13 55.00,11.39 55.50,11.70 56.00,12.04 56.50,12.42 57.00,12.84 57.50,13.29 58.00,13.77 58.50,14.28 59.00,14.81 59.50,15.36 60.00,15.94 60.50,16.53 61.00,17.12 61.50,17.73 62.00,18.34 62.50,18.95 63.00,19.56 63.50,20.16 64.00,20.75 64.50,21.33 65.00,21.88 65.50,22.42 66.00,22.94 66.50,23.42 67.00,23.88 67.50,24.30 68.00,24.69 68.50,25.04 69.00,25.35 69.50,25.62 70.00,25.85 70.50,26.03 71.00,26.16 71.50,26.25 72.00,26.30 72.50,26.29 73.00,26.24 73.50,26.14 74.00,25.99 74.50,25.80 75.00,25.57 75.50,25.29 76.00,24.97 76.50,24.61 77.00,24.22 77.50,23.79 78.00,23.32 78.50,22.83 79.00,22.31 79.50,21.77 80.00,21.21 80.50,20.63 81.00,20.04 81.50,19.43 82.00,18.83 82.50,18.21 83.00,17.60 83.50,17.00 84.00,16.40 84.50,15.82 85.00,15.25 85.50,14.70 86.00,14.17 86.50,13.67 87.00,13.19 87.50,12.75 88.00,12.34 88.50,11.96 89.00,11.63 89.50,11.34 90.00,11.08 90.50,10.87 91.00,10.71 91.50,10.59 92.00,10.52 92.50,10.50 93.00,10.52 93.50,10.59 94.00,10.71 94.50,10.88 95.00,11.08 95.50,11.34 96.00,11.63 96.50,11.97 97.00,12.34 97.50,12.75 98.00,13.19 98.50,13.67 99.00,14.17 99.50,14.70 100.00,15.25 100.50,15.82 101.00,16.41 101.50,17.00 102.00,17.61 102.50,18.22 103.00,18.83 103.50,19.44 104.00,20.04 104.50,20.63 105.00,21.21 105.50,21.77 106.00,22.32 106.50,22.84 107.00,23.33 107.50,23.79 108.00,24.22 108.50,24.62 109.00,24.97 109.50,25.29 110.00,25.57 110.50,25.81 111.00,26.00 111.50,26.14 112.00,26.24 112.50,26.29 113.00,26.30" fill="none" stroke="#dca040" stroke-width="1.3"/><polyline points="2.00,10.52 2.50,10.50 3.00,10.52 3.50,10.59 4.00,10.71 4.50,10.88 5.00,11.09 5.50,11.34 6.00,11.63 6.50,11.97 7.00,12.34 7.50,12.75 8.00,13.20 8.50,13.67 9.00,14.17 9.50,14.70 10.00,15.25 10.50,15.82 11.00,16.41 11.50,17.00 12.00,17.61 12.50,18.22 13.00,18.83 13.50,19.44 14.00,20.04 14.50,20.63 15.00,21.21 15.50,21.78 16.00,22.32 16.50,22.84 17.00,23.33 17.50,23.79 18.00,24.22 18.50,24.62 19.00,24.97 19.50,25.29 20.00,25.57 20.50,25.81 21.00,26.00 21.50,26.14 22.00,26.24 22.50,26.29 23.00,26.30 23.50,26.25 24.00,26.16 24.50,26.03 25.00,25.85 25.50,25.62 26.00,25.35 26.50,25.04 27.00,24.69 27.50,24.30 28.00,23.87 28.50,23.42 29.00,22.93 29.50,22.42 30.00,21.88 30.50,21.32 31.00,20.75 31.50,20.15 32.00,19.55 32.50,18.95 33.00,18.34 33.50,17.73 34.00,17.12 34.50,16.52 35.00,15.93 35.50,15.36 36.00,14.81 36.50,14.27 37.00,13.76 37.50,13.28 38.00,12.83 38.50,12.42 39.00,12.04 39.50,11.69 40.00,11.39 40.50,11.13 41.00,10.91 41.50,10.74 42.00,10.61 42.50,10.53 43.00,10.50 43.50,10.52 44.00,10.58 44.50,10.69 45.00,10.84 45.50,11.04 46.00,11.28 46.50,11.57 47.00,11.90 47.50,12.26 48.00,12.67 48.50,13.10 49.00,13.57 49.50,14.07 50.00,14.59 50.50,15.14 51.00,15.71 51.50,16.29 52.00,16.88 52.50,17.49 53.00,18.10 53.50,18.71 54.00,19.32 54.50,19.92 55.00,20.52 55.50,21.10 56.00,21.66 56.50,22.21 57.00,22.73 57.50,23.23 58.00,23.70 58.50,24.14 59.00,24.54 59.50,24.91 60.00,25.23 60.50,25.52 61.00,25.76 61.50,25.96 62.00,26.12 62.50,26.22 63.00,26.29 63.50,26.30 64.00,26.27 64.50,26.19 65.00,26.06 65.50,25.89 66.00,25.67 66.50,25.41 67.00,25.10 67.50,24.76 68.00,24.38 68.50,23.96 69.00,23.51 69.50,23.03 70.00,22.52 70.50,21.99 71.00,21.43 71.50,20.86 72.00,20.27 72.50,19.68 73.00,19.07 73.50,18.46 74.00,17.85 74.50,17.24 75.00,16.64 75.50,16.05 76.00,15.47 76.50,14.91 77.00,14.38 77.50,13.86 78.00,13.38 78.50,12.92 79.00,12.50 79.50,12.11 80.00,11.76 80.50,11.45 81.00,11.18 81.50,10.95 82.00,10.77 82.50,10.64 83.00,10.55 83.50,10.50 84.00,10.51 84.50,10.56 85.00,10.66 85.50,10.81 86.00,11.00 86.50,11.23 87.00,11.51 87.50,11.83 88.00,12.19 88.50,12.58 89.00,13.01 89.50,13.48 90.00,13.97 90.50,14.49 91.00,15.03 91.50,15.59 92.00,16.17 92.50,16.76 93.00,17.37 93.50,17.98 94.00,18.59 94.50,19.20 95.00,19.80 95.50,20.40 96.00,20.98 96.50,21.55 97.00,22.10 97.50,22.63 98.00,23.13 98.50,23.61 99.00,24.05 99.50,24.46 100.00,24.84 100.50,25.17 101.00,25.47 101.50,25.72 102.00,25.93 102.50,26.09 103.00,26.21 103.50,26.28 104.00,26.30 104.50,26.28 105.00,26.21 105.50,26.09 106.00,25.92 106.50,25.71 107.00,25.46 107.50,25.17 108.00,24.83 108.50,24.46 109.00,24.05 109.50,23.60 110.00,23.13 110.50,22.63 111.00,22.10 111.50,21.55 112.00,20.98 112.50,20.39 113.00,19.80" fill="none" stroke="#9cc8d4" stroke-width="1.3"/></svg>
<span class="t" style="left:316.9px;top:575.9px;width:36.4px;height:8.1px;line-height:8.1px;background:#f0b03a;text-align:center;font-size:6.8px;color:#3a2a10;-webkit-text-stroke:0.2px #3a2a10">Classic</span>
<span class="t" style="left:355px;top:575.9px;width:35.5px;height:8.1px;line-height:8.1px;box-sizing:border-box;border:0.9px solid #f0b03a;text-align:center;font-size:6.8px;color:#f0b03a;-webkit-text-stroke:0.2px #f0b03a">Ensemble</span>
<span class="t" style="left:392.2px;top:575.9px;width:36.4px;height:8.1px;line-height:8.1px;box-sizing:border-box;border:0.9px solid #f0b03a;text-align:center;font-size:6.8px;color:#f0b03a;-webkit-text-stroke:0.2px #f0b03a">Vibrato</span>
<div style="left:317px;top:589px;width:5.5px;height:5.5px;border:0.9px solid #f0b03a;box-sizing:border-box"></div>
<svg style="left:325px;top:589px" width="10" height="5" viewBox="0 0 10 5"><path d="M0.5,4.5 V1 h8" fill="none" stroke="#9a938e" stroke-width="0.9"/></svg>
<span class="t" style="left:318.5px;top:596.0999999999999px;font-size:7px;line-height:8.05px;color:#b8b0aa;-webkit-text-stroke:0.1px #b8b0aa">50.0 Hz</span>
<span class="t" style="left:355.8px;top:587.8px;font-size:7px;line-height:8.05px;color:#b8b0aa;-webkit-text-stroke:0.1px #b8b0aa">Width</span>
<span class="t" style="left:355.8px;top:596.3px;font-size:7px;line-height:8.05px;color:#f0b03a;font-weight:bold;-webkit-text-stroke:0.1px #f0b03a">100 %</span>
<span class="t" style="left:399.8px;top:538px;width:100px;text-align:center;font-size:7px;line-height:8.05px;color:#2a2624;-webkit-text-stroke:0.1px #2a2624">Output</span>
<svg style="left:438.5px;top:543.1px" width="22.6" height="22.6" viewBox="0 0 22.6 22.6"><path d="M5.43,17.17 A8.3,8.3 0 1 1 17.17,17.17" fill="none" stroke="#2a2624" stroke-width="1.7"/><path d="M5.43,17.17 A8.3,8.3 0 1 1 18.44,7.07" fill="none" stroke="#a8d4e0" stroke-width="2.1"/><path d="M12.16,10.79 L18.70,6.92" stroke="#2a2624" stroke-width="1.9"/></svg>
<span class="t" style="left:399.8px;top:561.1999999999999px;width:100px;text-align:center;font-size:7px;line-height:8.05px;color:#2a2624;-webkit-text-stroke:0.1px #2a2624">0.0 dB</span>
<svg style="left:438.5px;top:578.7px" width="22.6" height="22.6" viewBox="0 0 22.6 22.6"><path d="M5.43,17.17 A8.3,8.3 0 1 1 17.17,17.17" fill="none" stroke="#2a2624" stroke-width="1.7"/><path d="M5.43,17.17 A8.3,8.3 0 0 1 3.03,11.95" fill="none" stroke="#a8d4e0" stroke-width="2.1"/><path d="M10.30,11.38 L2.73,11.97" stroke="#2a2624" stroke-width="1.9"/></svg>
<span class="t" style="left:399.8px;top:573.8px;width:100px;text-align:center;font-size:7px;line-height:8.05px;color:#2a2624;-webkit-text-stroke:0.1px #2a2624">Warmth</span>
<span class="t" style="left:399.8px;top:596.8px;width:100px;text-align:center;font-size:7px;line-height:8.05px;color:#2a2624;-webkit-text-stroke:0.1px #2a2624">0.2 %</span>
<svg style="left:438.5px;top:615.1px" width="22.6" height="22.6" viewBox="0 0 22.6 22.6"><path d="M5.43,17.17 A8.3,8.3 0 1 1 17.17,17.17" fill="none" stroke="#2a2624" stroke-width="1.7"/><path d="M5.43,17.17 A8.3,8.3 0 0 1 16.07,4.51" fill="none" stroke="#a8d4e0" stroke-width="2.1"/><path d="M11.88,10.48 L16.25,4.26" stroke="#2a2624" stroke-width="1.9"/></svg>
<span class="t" style="left:399.8px;top:610.3px;width:100px;text-align:center;font-size:7px;line-height:8.05px;color:#2a2624;-webkit-text-stroke:0.1px #2a2624">Dry/Wet</span>
<span class="t" style="left:399.8px;top:633.1999999999999px;width:100px;text-align:center;font-size:7px;line-height:8.05px;color:#2a2624;-webkit-text-stroke:0.1px #2a2624">63 %</span>
<svg style="left:320.7px;top:615.1px" width="22.6" height="22.6" viewBox="0 0 22.6 22.6"><path d="M5.43,17.17 A8.3,8.3 0 1 1 17.17,17.17" fill="none" stroke="#2a2624" stroke-width="1.7"/><path d="M5.43,17.17 A8.3,8.3 0 0 1 7.53,3.90" fill="none" stroke="#a8d4e0" stroke-width="2.1"/><path d="M10.85,10.41 L7.40,3.64" stroke="#2a2624" stroke-width="1.9"/></svg>
<span class="t" style="left:282px;top:610.3px;width:100px;text-align:center;font-size:7px;line-height:8.05px;color:#2a2624;-webkit-text-stroke:0.1px #2a2624">Rate</span>
<span class="t" style="left:282px;top:633.1999999999999px;width:100px;text-align:center;font-size:7px;line-height:8.05px;color:#2a2624;-webkit-text-stroke:0.1px #2a2624">0.90 Hz</span>
<svg style="left:353.0px;top:615.1px" width="22.6" height="22.6" viewBox="0 0 22.6 22.6"><path d="M5.43,17.17 A8.3,8.3 0 1 1 17.17,17.17" fill="none" stroke="#2a2624" stroke-width="1.7"/><path d="M5.43,17.17 A8.3,8.3 0 0 1 16.07,4.51" fill="none" stroke="#a8d4e0" stroke-width="2.1"/><path d="M11.88,10.48 L16.25,4.26" stroke="#2a2624" stroke-width="1.9"/></svg>
<span class="t" style="left:314.3px;top:610.3px;width:100px;text-align:center;font-size:7px;line-height:8.05px;color:#2a2624;-webkit-text-stroke:0.1px #2a2624">Amount</span>
<span class="t" style="left:314.3px;top:633.1999999999999px;width:100px;text-align:center;font-size:7px;line-height:8.05px;color:#2a2624;-webkit-text-stroke:0.1px #2a2624">63 %</span>
<svg style="left:384.7px;top:615.1px" width="22.6" height="22.6" viewBox="0 0 22.6 22.6"><path d="M5.43,17.17 A8.3,8.3 0 1 1 17.17,17.17" fill="none" stroke="#2a2624" stroke-width="1.7"/><path d="M10.59,12.01 L5.22,17.38" stroke="#2a2624" stroke-width="1.9"/></svg>
<span class="t" style="left:346px;top:610.3px;width:100px;text-align:center;font-size:7px;line-height:8.05px;color:#2a2624;-webkit-text-stroke:0.1px #2a2624">Feedback</span>
<span class="t" style="left:346px;top:633.1999999999999px;width:100px;text-align:center;font-size:7px;line-height:8.05px;color:#2a2624;-webkit-text-stroke:0.1px #2a2624">0.0 %</span>
<div style="left:411px;top:626px;width:4px;height:0.8px;background:#6a645f;"></div>
<div style="left:416.7px;top:623px;width:9.9px;height:6.7px;background:#e4dfdb;box-shadow:0 0 0 0.7px #6a645f"></div>
<svg style="left:418.6px;top:623.4px" width="6" height="6" viewBox="0 0 6 6"><circle cx="3" cy="3" r="2" fill="none" stroke="#2a2624" stroke-width="0.9"/><path d="M1.5,4.5 L4.5,1.5" stroke="#2a2624" stroke-width="0.8"/></svg>
<div style="left:430.3px;top:610.8px;width:0.8px;height:31px;background:#8a837e;"></div>
<div style="left:470px;top:580.6px;width:3.5px;height:17px;background:#78c850;"></div>
<div style="left:469.5px;top:574px;width:4.5px;height:2px;background:#8a837e;"></div>
<div style="left:469.5px;top:577px;width:4.5px;height:2px;background:#8a837e;"></div>
<div style="left:475.9px;top:524.8px;width:399.6px;height:119.3px;background:#b6aea9;border-radius:3px"></div>
<svg style="left:477.4px;top:525.6px" width="11" height="11" viewBox="0 0 11 11"><circle cx="5.5" cy="5.5" r="4.2" fill="#f2b632" stroke="#c88a20" stroke-width="0.9"/></svg>
<span class="t" style="left:488.3px;top:526.6px;font-size:7.2px;line-height:8.28px;color:#2a2624;font-weight:bold;">Hybrid Reverb</span>
<div style="left:476.8px;top:535px;width:35px;height:107.5px;background:#aaa29d;"></div>
<div style="left:513.7px;top:608.6px;width:106.5px;height:35px;background:#a69e99;"></div>
<div style="left:621.8px;top:608.6px;width:37.2px;height:35px;background:#ada5a0;"></div>
<div style="left:659.4px;top:608.6px;width:179.6px;height:35px;background:#ada5a0;"></div>
<div style="left:839px;top:536.5px;width:36px;height:107px;background:#aaa29d;"></div>
<svg style="left:483.09999999999997px;top:542.2px" width="22.6" height="22.6" viewBox="0 0 22.6 22.6"><path d="M5.43,17.17 A8.3,8.3 0 1 1 17.17,17.17" fill="none" stroke="#2a2624" stroke-width="1.7"/><path d="M5.43,17.17 A8.3,8.3 0 1 1 17.94,16.28" fill="none" stroke="#a8d4e0" stroke-width="2.1"/><path d="M12.10,11.90 L18.18,16.46" stroke="#2a2624" stroke-width="1.9"/></svg>
<span class="t" style="left:444.4px;top:537.5px;width:100px;text-align:center;font-size:7px;line-height:8.05px;color:#2a2624;-webkit-text-stroke:0.1px #2a2624">Send</span>
<span class="t" style="left:444.4px;top:560.4px;width:100px;text-align:center;font-size:7px;line-height:8.05px;color:#2a2624;-webkit-text-stroke:0.1px #2a2624">-0.5 dB</span>
<svg style="left:483.09999999999997px;top:579.0px" width="22.6" height="22.6" viewBox="0 0 22.6 22.6"><path d="M5.43,17.17 A8.3,8.3 0 1 1 17.17,17.17" fill="none" stroke="#2a2624" stroke-width="1.7"/><path d="M10.47,11.86 L4.19,16.13" stroke="#2a2624" stroke-width="1.9"/></svg>
<span class="t" style="left:444.4px;top:574.8px;width:100px;text-align:center;font-size:7px;line-height:8.05px;color:#2a2624;-webkit-text-stroke:0.1px #2a2624">Predelay</span>
<span class="t" style="left:444.4px;top:597.5999999999999px;width:100px;text-align:center;font-size:7px;line-height:8.05px;color:#2a2624;-webkit-text-stroke:0.1px #2a2624">0.26 ms</span>
<span class="t" style="left:479.3px;top:608.6px;width:13.6px;height:7.4px;line-height:7.4px;background:#f0b03a;text-align:center;font-size:6.5px;font-weight:bold;color:#2a2624;box-shadow:0 0 0 0.7px #8a6a20">ms</span>
<div style="left:495.4px;top:608.6px;width:13.6px;height:7.4px;background:#e4dfdb;box-shadow:0 0 0 0.7px #6a645f"></div>
<svg style="left:499px;top:609.2px" width="6" height="6.5" viewBox="0 0 6 6.5"><path d="M3.8,0.5 v4.2" stroke="#2a2624" stroke-width="0.8"/><ellipse cx="2.6" cy="4.8" rx="1.5" ry="1.1" fill="#2a2624"/><path d="M3.8,0.5 l1.6,1.2" stroke="#2a2624" stroke-width="0.7"/></svg>
<span class="t" style="left:444.2px;top:624.2px;width:100px;text-align:center;font-size:7px;line-height:8.05px;color:#2a2624;-webkit-text-stroke:0.1px #2a2624">Feedback</span>
<div style="left:479.3px;top:633px;width:29.7px;height:7px;background:#e8e4e0;box-shadow:0 0 0 0.7px #6a645f"></div>
<div style="left:479.3px;top:633px;width:5px;height:7px;background:#8cc8e0;"></div>
<span class="t" style="left:444.2px;top:632.2px;width:100px;text-align:center;font-size:6.8px;line-height:7.82px;color:#2a2624;">17 %</span>
<div style="left:621.8px;top:526.1px;width:55.8px;height:11px;background:#262220;border-radius:3px 3px 0 0"></div>
<span class="t" style="left:598.9px;top:526.3px;width:100px;text-align:center;font-size:7px;line-height:8.05px;color:#c0b8b2;">Reverb</span>
<div style="left:679px;top:526.1px;width:56.6px;height:8px;background:#262220;border-radius:3px;box-shadow:0 0 0 0.8px #8a837e"></div>
<div style="left:699.7px;top:527.7px;width:4.2px;height:4.6px;background:#f0b03a;"></div>
<span class="t" style="left:706.4px;top:526.6px;font-size:7px;line-height:8.05px;color:#c0b8b2;">EQ</span>
<svg style="left:852px;top:525px" width="22" height="11" viewBox="0 0 22 11"><circle cx="5" cy="5.5" r="4.3" fill="#d8d2ce" stroke="#2a2624" stroke-width="0.9"/><path d="M3,8 L7,3" stroke="#2a2624" stroke-width="1.2"/><circle cx="15.5" cy="5.5" r="4.3" fill="#d8d2ce" stroke="#2a2624" stroke-width="0.9"/><rect x="13" y="3" width="5" height="5" fill="#2a2624"/><rect x="14.2" y="3" width="2.6" height="1.6" fill="#d8d2ce"/></svg>
<div style="left:513.7px;top:535.8px;width:324.3px;height:71.2px;background:#262220;border-radius:0 2px 2px 2px"></div>
<svg style="left:513.7px;top:535.8px" width="324.3" height="71.2" viewBox="0 0 324.3 71.2"><polygon points="2.30,16.50 2.80,9.00 3.30,4.50 3.80,5.75 4.30,7.00 4.80,8.25 5.30,9.50 5.80,17.52 6.30,16.91 6.80,17.26 7.30,16.79 7.80,16.75 8.30,17.87 8.80,17.97 9.30,16.33 9.80,13.98 10.30,14.03 10.80,16.01 11.30,16.89 11.80,16.66 12.30,17.36 12.80,17.37 13.30,18.22 13.80,17.79 14.30,17.68 14.80,18.32 15.30,18.21 15.80,18.47 16.30,19.43 16.80,18.68 17.30,19.04 17.80,19.56 18.30,20.05 18.80,19.09 19.30,19.73 19.80,19.53 20.30,19.43 20.80,19.75 21.30,19.59 21.80,20.37 22.30,19.94 22.80,20.49 23.30,19.94 23.80,20.09 24.30,21.19 24.80,21.21 25.30,21.18 25.80,20.27 26.30,21.03 26.80,20.84 27.30,21.32 27.80,21.11 28.30,21.33 28.80,21.42 29.30,21.17 29.80,21.22 30.30,20.85 30.80,21.18 31.30,20.90 31.80,21.03 32.30,20.90 32.80,21.35 33.30,22.04 33.80,21.17 34.30,21.07 34.80,21.17 35.30,21.64 35.80,21.48 36.30,22.16 36.80,21.38 37.30,21.74 37.80,22.14 38.30,22.45 38.80,21.44 39.30,21.28 39.80,22.47 40.30,21.57 40.80,22.09 41.30,22.44 41.80,22.27 42.30,21.67 42.80,20.35 43.30,21.44 43.80,20.71 44.30,22.67 44.80,21.80 45.30,22.32 45.80,21.62 46.30,23.06 46.80,23.20 47.30,23.05 47.80,23.26 48.30,23.33 48.80,23.17 49.30,23.34 49.80,23.29 50.30,23.23 50.80,23.17 51.30,23.30 51.80,23.34 52.30,23.09 52.80,23.26 53.30,23.06 53.80,23.08 54.30,23.24 54.80,23.21 55.30,23.19 55.80,23.16 56.30,23.17 56.80,23.18 57.30,23.16 57.80,23.07 58.30,23.20 58.80,23.22 59.30,23.13 59.80,23.28 60.30,23.26 60.80,23.06 61.30,23.19 61.80,23.19 62.30,23.35 62.80,23.23 63.30,23.18 63.80,23.34 64.30,23.17 64.80,23.16 65.30,23.33 65.80,23.16 66.30,23.21 66.80,23.15 67.30,23.24 67.80,23.14 68.30,23.13 68.80,23.34 69.30,23.33 69.80,23.15 70.30,23.06 70.80,23.27 71.30,23.21 71.80,23.17 72.30,23.25 72.80,23.24 73.30,23.26 73.80,23.24 74.30,23.17 74.80,23.26 75.30,23.24 75.80,23.12 76.30,23.34 76.80,23.18 77.30,23.13 77.80,23.26 78.30,23.28 78.80,23.11 79.30,23.28 79.80,23.29 80.30,23.22 80.80,23.14 81.30,23.32 81.80,23.25 82.30,23.25 82.80,23.10 83.30,23.22 83.80,23.09 84.30,23.30 84.80,23.25 85.30,23.15 85.80,23.08 86.30,23.21 86.80,23.28 87.30,23.31 87.80,23.19 88.30,23.29 88.80,22.31 89.30,22.30 89.80,22.49 90.30,23.27 90.80,23.11 91.30,23.16 91.80,23.11 92.30,23.25 92.80,23.31 93.30,23.26 93.80,23.11 94.30,23.27 94.80,23.25 95.30,23.22 95.80,23.22 96.30,23.23 96.80,23.07 97.30,23.30 97.80,23.35 98.30,23.07 98.80,23.09 99.30,23.05 99.80,23.22 100.30,23.06 100.80,23.07 101.30,23.28 101.80,23.13 102.30,23.10 102.80,23.15 103.30,23.19 103.80,23.26 104.30,23.25 104.80,23.28 105.30,23.33 105.80,23.17 106.30,23.26 106.80,23.11 107.30,23.34 107.80,23.08 108.30,23.14 108.80,23.07 109.30,23.08 109.80,23.08 110.30,23.18 110.80,23.35 111.30,23.13 111.80,23.30 112.30,23.26 112.80,23.15 113.30,23.19 113.80,23.23 114.30,23.07 114.80,23.17 115.30,23.25 115.80,23.27 116.30,23.09 116.80,23.21 117.30,23.12 117.80,23.24 118.30,23.29 118.80,23.19 119.30,23.10 119.80,23.30 120.30,23.11 120.80,23.07 121.30,23.11 121.80,23.10 122.30,23.35 122.80,23.16 123.30,23.09 123.80,23.34 124.30,23.27 124.80,23.27 125.30,23.19 125.80,23.22 126.30,23.21 126.80,23.12 127.30,23.35 127.80,23.33 128.30,23.31 128.80,23.31 129.30,23.33 129.80,23.06 130.30,23.09 130.80,23.32 131.30,23.20 131.80,23.26 132.30,23.26 132.80,23.24 133.30,23.16 133.80,23.17 134.30,23.24 134.80,23.29 135.30,23.25 135.80,23.31 136.30,23.18 136.80,23.14 137.30,23.24 137.80,23.33 138.30,23.30 138.80,23.24 139.30,23.17 139.80,23.12 140.30,23.24 140.80,23.11 141.30,23.16 141.80,23.22 142.30,23.24 142.80,23.20 143.30,23.14 143.80,23.22 144.30,23.14 144.80,23.21 145.30,23.28 145.80,23.19 146.30,23.14 146.80,23.33 147.30,23.22 147.80,23.22 148.30,23.09 148.80,23.07 149.30,23.24 149.80,23.08 150.30,23.11 150.80,23.27 151.30,23.21 151.80,23.31 152.30,23.11 152.80,23.15 153.30,23.08 153.80,23.11 154.30,23.15 154.80,23.13 155.30,23.18 155.80,23.32 156.30,23.17 156.80,23.35 157.30,23.31 157.80,23.12 158.30,23.34 158.80,23.32 159.30,23.32 159.80,23.09 160.30,23.30 160.80,23.34 161.30,23.10 161.80,23.31 162.30,23.10 162.80,23.15 163.30,23.10 163.80,23.06 164.30,23.18 164.80,23.11 165.30,23.34 165.80,23.12 166.30,23.20 166.80,23.14 167.30,23.32 167.80,23.13 168.30,23.07 168.80,23.33 169.30,23.25 169.80,23.18 170.30,23.10 170.80,23.28 171.30,23.30 171.80,23.28 172.30,23.17 172.80,23.12 173.30,23.23 173.80,23.24 174.30,23.23 174.80,23.24 175.30,23.22 175.80,23.33 176.30,23.20 176.80,23.06 177.30,23.23 177.80,23.13 178.30,23.30 178.80,23.14 179.30,23.12 179.80,23.15 180.30,23.19 180.80,23.20 181.30,23.16 181.80,23.08 182.30,23.31 182.80,23.32 183.30,23.13 183.80,23.08 184.30,23.19 184.80,23.22 185.30,23.13 185.80,23.29 186.30,23.27 186.80,23.29 187.30,23.17 187.80,23.26 188.30,23.28 188.80,23.14 189.30,23.06 189.80,23.26 190.30,23.14 190.80,23.23 191.30,23.09 191.80,23.17 192.30,23.27 192.80,23.28 193.30,23.34 193.80,23.21 194.30,23.24 194.80,23.30 195.30,23.24 195.80,23.25 196.30,23.12 196.80,23.31 197.30,23.05 197.80,23.21 198.30,23.17 198.80,23.21 199.30,23.10 199.80,23.10 200.30,23.18 200.80,23.21 201.30,23.13 201.80,23.09 202.30,23.23 202.80,23.13 203.30,23.06 203.80,23.21 204.30,23.28 204.80,23.28 205.30,23.13 205.80,23.15 206.30,23.06 206.80,23.09 207.30,23.28 207.80,23.29 208.30,23.27 208.80,23.29 209.30,23.14 209.80,23.09 210.30,23.08 210.80,23.27 211.30,23.09 211.80,23.26 212.30,23.22 212.80,23.13 213.30,23.32 213.80,23.32 214.30,23.10 214.80,23.26 215.30,23.24 215.80,23.18 216.30,23.15 216.80,23.35 217.30,23.25 217.80,23.22 218.30,23.20 218.80,23.29 219.30,23.17 219.80,23.06 220.30,23.23 220.80,23.19 221.30,23.31 221.80,23.27 222.30,23.15 222.80,23.32 223.30,23.08 223.80,23.08 224.30,23.32 224.80,23.07 225.30,23.24 225.80,23.12 226.30,23.12 226.80,23.26 227.30,23.15 227.80,23.15 228.30,23.11 228.80,23.27 229.30,23.12 229.80,23.06 230.30,23.15 230.80,23.19 231.30,23.32 231.80,23.20 232.30,23.24 232.80,23.13 233.30,23.15 233.80,23.18 234.30,23.30 234.80,23.16 235.30,23.16 235.80,23.30 236.30,23.08 236.80,23.15 237.30,23.31 237.80,23.07 238.30,23.31 238.80,23.25 239.30,23.13 239.80,23.17 240.30,23.18 240.80,23.16 241.30,23.21 241.80,23.26 242.30,23.30 242.80,23.33 243.30,23.14 243.80,23.12 244.30,23.19 244.80,23.13 245.30,23.24 245.80,23.27 246.30,23.23 246.80,23.09 247.30,23.34 247.80,23.20 248.30,23.28 248.80,23.12 249.30,23.24 249.80,23.25 250.30,23.23 250.80,23.19 251.30,23.12 251.80,23.24 252.30,23.10 252.80,23.32 253.30,23.27 253.80,23.32 254.30,23.32 254.80,23.12 255.30,23.13 255.80,23.29 256.30,23.29 256.80,23.23 257.30,23.13 257.80,23.11 258.30,23.13 258.80,23.17 259.30,23.31 259.80,23.23 260.30,23.29 260.80,23.19 261.30,23.18 261.80,23.29 262.30,23.27 262.80,23.12 263.30,23.34 263.80,23.11 264.30,23.08 264.80,23.07 265.30,23.24 265.80,23.18 266.30,23.18 266.80,23.16 267.30,23.06 267.80,23.14 268.30,23.26 268.80,23.09 269.30,23.20 269.80,23.17 270.30,23.13 270.80,23.35 271.30,23.12 271.80,23.15 272.30,23.20 272.80,23.19 273.30,23.21 273.80,23.29 274.30,23.19 274.80,23.34 275.30,23.20 275.80,23.16 276.30,23.22 276.80,23.18 277.30,23.06 277.80,23.08 278.30,23.31 278.80,23.11 279.30,23.16 279.80,23.33 280.30,23.24 280.80,23.28 281.30,23.33 281.80,23.19 282.30,23.07 282.80,23.25 283.30,23.09 283.80,23.14 284.30,23.31 284.80,23.09 285.30,23.17 285.80,23.07 286.30,23.14 286.80,23.13 287.30,23.25 287.80,23.11 288.30,23.07 288.80,23.09 289.30,23.22 289.80,23.12 290.30,23.20 290.80,23.32 291.30,23.34 291.80,23.33 292.30,23.29 292.80,23.30 293.30,23.20 293.80,23.14 294.30,23.19 294.80,23.22 295.30,23.16 295.80,23.26 296.30,23.21 296.80,23.12 297.30,23.23 297.80,23.30 298.30,23.08 298.80,23.13 299.30,23.24 299.80,23.24 300.30,23.19 300.80,23.17 301.30,23.28 301.80,23.35 302.30,23.29 302.80,23.12 303.30,23.31 303.80,23.21 304.30,23.29 304.80,23.29 305.30,23.30 305.80,23.23 306.30,23.30 306.80,23.34 307.30,23.32 307.80,23.30 308.30,23.20 308.80,23.33 309.30,23.34 309.80,23.22 310.30,23.23 310.80,23.14 311.30,23.33 311.80,23.23 312.30,23.23 312.80,23.34 313.30,23.06 313.80,23.28 314.30,23.32 314.80,23.21 315.30,23.30 315.80,23.16 316.30,23.25 316.80,23.31 317.30,23.33 317.80,23.13 318.30,23.27 318.80,23.11 319.30,23.21 319.80,23.07 320.30,23.26 320.80,23.28 321.30,23.27 321.80,23.11 322.30,23.16 322.30,25.91 321.80,25.96 321.30,25.79 320.80,25.79 320.30,25.80 319.80,26.00 319.30,25.85 318.80,25.96 318.30,25.79 317.80,25.94 317.30,25.72 316.80,25.75 316.30,25.82 315.80,25.90 315.30,25.76 314.80,25.86 314.30,25.74 313.80,25.78 313.30,26.01 312.80,25.72 312.30,25.83 311.80,25.83 311.30,25.72 310.80,25.93 310.30,25.84 309.80,25.85 309.30,25.71 308.80,25.73 308.30,25.86 307.80,25.76 307.30,25.74 306.80,25.72 306.30,25.76 305.80,25.83 305.30,25.76 304.80,25.77 304.30,25.77 303.80,25.85 303.30,25.75 302.80,25.95 302.30,25.77 301.80,25.71 301.30,25.78 300.80,25.90 300.30,25.87 299.80,25.82 299.30,25.82 298.80,25.93 298.30,25.99 297.80,25.76 297.30,25.83 296.80,25.95 296.30,25.85 295.80,25.80 295.30,25.91 294.80,25.84 294.30,25.88 293.80,25.93 293.30,25.86 292.80,25.76 292.30,25.77 291.80,25.73 291.30,25.72 290.80,25.74 290.30,25.86 289.80,25.95 289.30,25.85 288.80,25.98 288.30,26.00 287.80,25.96 287.30,25.82 286.80,25.94 286.30,25.93 285.80,26.00 285.30,25.90 284.80,25.98 284.30,25.75 283.80,25.93 283.30,25.98 282.80,25.81 282.30,26.00 281.80,25.88 281.30,25.73 280.80,25.78 280.30,25.82 279.80,25.72 279.30,25.90 278.80,25.96 278.30,25.75 277.80,25.99 277.30,26.01 276.80,25.89 276.30,25.85 275.80,25.91 275.30,25.87 274.80,25.72 274.30,25.87 273.80,25.77 273.30,25.85 272.80,25.87 272.30,25.86 271.80,25.92 271.30,25.95 270.80,25.71 270.30,25.94 269.80,25.90 269.30,25.86 268.80,25.98 268.30,25.80 267.80,25.92 267.30,26.02 266.80,25.91 266.30,25.89 265.80,25.88 265.30,25.83 264.80,26.01 264.30,25.99 263.80,25.96 263.30,25.72 262.80,25.95 262.30,25.79 261.80,25.77 261.30,25.89 260.80,25.87 260.30,25.77 259.80,25.83 259.30,25.75 258.80,25.89 258.30,25.94 257.80,25.96 257.30,25.94 256.80,25.84 256.30,25.77 255.80,25.77 255.30,25.94 254.80,25.95 254.30,25.74 253.80,25.74 253.30,25.79 252.80,25.74 252.30,25.97 251.80,25.82 251.30,25.95 250.80,25.88 250.30,25.83 249.80,25.81 249.30,25.82 248.80,25.95 248.30,25.79 247.80,25.87 247.30,25.72 246.80,25.98 246.30,25.83 245.80,25.79 245.30,25.82 244.80,25.94 244.30,25.88 243.80,25.95 243.30,25.93 242.80,25.73 242.30,25.76 241.80,25.81 241.30,25.85 240.80,25.91 240.30,25.88 239.80,25.90 239.30,25.93 238.80,25.81 238.30,25.75 237.80,26.00 237.30,25.75 236.80,25.91 236.30,25.99 235.80,25.76 235.30,25.91 234.80,25.91 234.30,25.76 233.80,25.89 233.30,25.92 232.80,25.93 232.30,25.82 231.80,25.86 231.30,25.74 230.80,25.88 230.30,25.92 229.80,26.01 229.30,25.95 228.80,25.79 228.30,25.96 227.80,25.91 227.30,25.92 226.80,25.80 226.30,25.95 225.80,25.95 225.30,25.83 224.80,26.00 224.30,25.74 223.80,25.99 223.30,25.99 222.80,25.74 222.30,25.92 221.80,25.79 221.30,25.75 220.80,25.88 220.30,25.83 219.80,26.01 219.30,25.89 218.80,25.77 218.30,25.86 217.80,25.84 217.30,25.81 216.80,25.71 216.30,25.92 215.80,25.89 215.30,25.82 214.80,25.80 214.30,25.97 213.80,25.74 213.30,25.73 212.80,25.94 212.30,25.84 211.80,25.81 211.30,25.98 210.80,25.79 210.30,25.99 209.80,25.98 209.30,25.93 208.80,25.77 208.30,25.79 207.80,25.77 207.30,25.78 206.80,25.98 206.30,26.01 205.80,25.92 205.30,25.93 204.80,25.78 204.30,25.78 203.80,25.85 203.30,26.01 202.80,25.94 202.30,25.83 201.80,25.98 201.30,25.93 200.80,25.86 200.30,25.88 199.80,25.97 199.30,25.97 198.80,25.85 198.30,25.90 197.80,25.86 197.30,26.02 196.80,25.75 196.30,25.95 195.80,25.81 195.30,25.82 194.80,25.76 194.30,25.83 193.80,25.86 193.30,25.71 192.80,25.78 192.30,25.79 191.80,25.89 191.30,25.98 190.80,25.84 190.30,25.93 189.80,25.80 189.30,26.01 188.80,25.93 188.30,25.78 187.80,25.81 187.30,25.89 186.80,25.77 186.30,25.79 185.80,25.77 185.30,25.93 184.80,25.85 184.30,25.87 183.80,26.00 183.30,25.94 182.80,25.74 182.30,25.75 181.80,25.99 181.30,25.91 180.80,25.86 180.30,25.87 179.80,25.92 179.30,25.95 178.80,25.93 178.30,25.76 177.80,25.94 177.30,25.84 176.80,26.01 176.30,25.87 175.80,25.73 175.30,25.84 174.80,25.82 174.30,25.83 173.80,25.82 173.30,25.83 172.80,25.94 172.30,25.90 171.80,25.79 171.30,25.76 170.80,25.78 170.30,25.97 169.80,25.89 169.30,25.81 168.80,25.73 168.30,26.00 167.80,25.94 167.30,25.74 166.80,25.93 166.30,25.87 165.80,25.95 165.30,25.72 164.80,25.96 164.30,25.89 163.80,26.01 163.30,25.97 162.80,25.92 162.30,25.97 161.80,25.75 161.30,25.97 160.80,25.71 160.30,25.76 159.80,25.98 159.30,25.74 158.80,25.74 158.30,25.72 157.80,25.95 157.30,25.75 156.80,25.71 156.30,25.89 155.80,25.74 155.30,25.89 154.80,25.94 154.30,25.92 153.80,25.96 153.30,25.99 152.80,25.92 152.30,25.96 151.80,25.75 151.30,25.85 150.80,25.79 150.30,25.96 149.80,25.99 149.30,25.83 148.80,26.00 148.30,25.98 147.80,25.84 147.30,25.84 146.80,25.73 146.30,25.93 145.80,25.88 145.30,25.78 144.80,25.85 144.30,25.93 143.80,25.84 143.30,25.93 142.80,25.86 142.30,25.82 141.80,25.84 141.30,25.90 140.80,25.96 140.30,25.83 139.80,25.95 139.30,25.90 138.80,25.83 138.30,25.76 137.80,25.73 137.30,25.83 136.80,25.93 136.30,25.88 135.80,25.75 135.30,25.81 134.80,25.77 134.30,25.82 133.80,25.89 133.30,25.91 132.80,25.82 132.30,25.81 131.80,25.81 131.30,25.87 130.80,25.73 130.30,25.98 129.80,26.01 129.30,25.73 128.80,25.75 128.30,25.75 127.80,25.72 127.30,25.71 126.80,25.95 126.30,25.86 125.80,25.84 125.30,25.87 124.80,25.79 124.30,25.79 123.80,25.72 123.30,25.98 122.80,25.91 122.30,25.71 121.80,25.97 121.30,25.96 120.80,26.00 120.30,25.96 119.80,25.76 119.30,25.96 118.80,25.88 118.30,25.77 117.80,25.82 117.30,25.95 116.80,25.86 116.30,25.98 115.80,25.79 115.30,25.82 114.80,25.90 114.30,26.00 113.80,25.84 113.30,25.87 112.80,25.92 112.30,25.80 111.80,25.76 111.30,25.94 110.80,25.71 110.30,25.89 109.80,25.99 109.30,25.99 108.80,26.00 108.30,25.93 107.80,25.99 107.30,25.72 106.80,25.96 106.30,25.80 105.80,25.89 105.30,25.73 104.80,25.78 104.30,25.81 103.80,25.80 103.30,25.87 102.80,25.92 102.30,25.97 101.80,25.94 101.30,25.78 100.80,26.00 100.30,26.01 99.80,25.84 99.30,26.02 98.80,25.98 98.30,26.00 97.80,25.71 97.30,25.76 96.80,26.00 96.30,25.84 95.80,25.84 95.30,25.84 94.80,25.82 94.30,25.79 93.80,25.96 93.30,25.80 92.80,25.75 92.30,25.82 91.80,25.96 91.30,25.91 90.80,25.96 90.30,25.80 89.80,26.61 89.30,26.81 88.80,26.80 88.30,25.77 87.80,25.87 87.30,25.75 86.80,25.78 86.30,25.85 85.80,25.99 85.30,25.91 84.80,25.81 84.30,25.76 83.80,25.98 83.30,25.85 82.80,25.97 82.30,25.81 81.80,25.81 81.30,25.74 80.80,25.93 80.30,25.84 79.80,25.77 79.30,25.78 78.80,25.96 78.30,25.78 77.80,25.81 77.30,25.94 76.80,25.89 76.30,25.72 75.80,25.95 75.30,25.83 74.80,25.80 74.30,25.90 73.80,25.82 73.30,25.81 72.80,25.82 72.30,25.81 71.80,25.89 71.30,25.85 70.80,25.79 70.30,26.01 69.80,25.92 69.30,25.73 68.80,25.71 68.30,25.94 67.80,25.93 67.30,25.82 66.80,25.92 66.30,25.85 65.80,25.91 65.30,25.73 64.80,25.91 64.30,25.90 63.80,25.71 63.30,25.89 62.80,25.84 62.30,25.71 61.80,25.88 61.30,25.87 60.80,26.02 60.30,25.80 59.80,25.78 59.30,25.93 58.80,25.84 58.30,25.87 57.80,26.00 57.30,25.90 56.80,25.88 56.30,25.90 55.80,25.91 55.30,25.87 54.80,25.85 54.30,25.83 53.80,25.99 53.30,26.01 52.80,25.81 52.30,25.98 51.80,25.72 51.30,25.76 50.80,25.90 50.30,25.84 49.80,25.77 49.30,25.72 48.80,25.90 48.30,25.73 47.80,25.81 47.30,26.02 46.80,25.87 46.30,26.02 45.80,27.53 45.30,26.79 44.80,27.33 44.30,26.42 43.80,28.47 43.30,27.71 42.80,28.86 42.30,27.47 41.80,26.84 41.30,26.66 40.80,27.03 40.30,27.58 39.80,26.63 39.30,27.88 38.80,27.71 38.30,26.66 37.80,26.98 37.30,27.40 36.80,27.78 36.30,26.96 35.80,27.67 35.30,27.50 34.80,27.99 34.30,28.11 33.80,28.00 33.30,27.08 32.80,27.81 32.30,28.28 31.80,28.14 31.30,28.28 30.80,27.99 30.30,28.34 29.80,27.95 29.30,28.00 28.80,27.73 28.30,27.83 27.80,28.06 27.30,27.83 26.80,28.34 26.30,28.15 25.80,28.94 25.30,27.99 24.80,27.95 24.30,27.98 23.80,29.13 23.30,29.29 22.80,28.71 22.30,29.29 21.80,28.84 21.30,29.66 20.80,29.48 20.30,29.82 19.80,29.72 19.30,29.51 18.80,30.18 18.30,29.17 17.80,29.68 17.30,30.23 16.80,30.61 16.30,29.83 15.80,30.83 15.30,31.10 14.80,30.99 14.30,31.66 13.80,31.54 13.30,31.10 12.80,31.99 12.30,32.00 11.80,32.74 11.30,32.49 10.80,33.42 10.30,35.49 9.80,35.54 9.30,33.08 8.80,31.35 8.30,31.46 7.80,32.64 7.30,32.59 6.80,32.10 6.30,32.47 5.80,31.82 5.30,40.25 4.80,41.56 4.30,42.88 3.80,44.19 3.30,45.50 2.80,40.77 2.30,32.90" fill="#f0b030"/><line x1="5" y1="24.5" x2="322" y2="24.5" stroke="#c89030" stroke-width="1"/></svg>
<span class="t" style="left:787px;top:538px;font-size:7px;line-height:8.05px;color:#b8b0aa;-webkit-text-stroke:0.15px #b8b0aa">100 % / 2.05 s</span>
<div style="left:518px;top:588.3px;width:5.8px;height:5.9px;background:#f0b03a;"></div>
<span class="t" style="left:527.9px;top:586.9px;font-size:7px;line-height:8.05px;color:#b8b0aa;-webkit-text-stroke:0.1px #b8b0aa">Attack</span>
<span class="t" style="left:527.2px;top:597.0999999999999px;font-size:7px;line-height:8.05px;color:#f0b03a;font-weight:bold;-webkit-text-stroke:0.1px #f0b03a">0.06 ms</span>
<span class="t" style="left:520.2px;top:586.9px;width:100px;text-align:center;font-size:7px;line-height:8.05px;color:#b8b0aa;-webkit-text-stroke:0.1px #b8b0aa">Decay</span>
<span class="t" style="left:520.2px;top:597.1px;width:100px;text-align:center;font-size:7px;line-height:8.05px;color:#f0b03a;font-weight:bold;">17.0 s</span>
<span class="t" style="left:552.4px;top:586.9px;width:100px;text-align:center;font-size:7px;line-height:8.05px;color:#b8b0aa;-webkit-text-stroke:0.1px #b8b0aa">Size</span>
<span class="t" style="left:552.4px;top:597.1px;width:100px;text-align:center;font-size:7px;line-height:8.05px;color:#f0b03a;font-weight:bold;">186 %</span>
<div style="left:621.3px;top:585.7px;width:0.8px;height:20.5px;background:#4e4844;"></div>
<div style="left:659px;top:585.7px;width:0.8px;height:20.5px;background:#4e4844;"></div>
<svg style="left:627px;top:588px" width="25" height="7" viewBox="0 0 25 7"><path d="M0.5,3.5 h24" stroke="#c09030" stroke-width="0.8"/><circle cx="7" cy="3.5" r="2" fill="#f0b030"/><circle cx="12.5" cy="3.5" r="1.6" fill="#f8e8a0"/><circle cx="18" cy="3.5" r="2" fill="#8cc8e0"/><path d="M7,5.8 h11" stroke="#8cc8e0" stroke-width="0.6"/></svg>
<span class="t" style="left:624.3px;top:597.0999999999999px;font-size:7px;line-height:8.05px;color:#f0b03a;font-weight:bold;-webkit-text-stroke:0.1px #f0b03a">Serial</span>
<svg style="left:651px;top:599px" width="4" height="3" viewBox="0 0 4 3"><path d="M0,0 h4 l-2,2.5z" fill="#c0b8b2"/></svg>
<span class="t" style="left:663.3px;top:586.9px;font-size:7px;line-height:8.05px;color:#b8b0aa;-webkit-text-stroke:0.1px #b8b0aa">Algorithm</span>
<span class="t" style="left:663.3px;top:597.0999999999999px;font-size:7px;line-height:8.05px;color:#8cc8e0;font-weight:bold;-webkit-text-stroke:0.1px #8cc8e0">Dark Hall</span>
<svg style="left:700px;top:599px" width="4" height="3" viewBox="0 0 4 3"><path d="M0,0 h4 l-2,2.5z" fill="#c0b8b2"/></svg>
<span class="t" style="left:668.6px;top:586.9px;width:100px;text-align:center;font-size:7px;line-height:8.05px;color:#b8b0aa;-webkit-text-stroke:0.1px #b8b0aa">Freeze</span>
<div style="left:709.8px;top:596.7px;width:7.6px;height:8.5px;border:0.8px solid #9a938e;box-sizing:border-box"></div>
<svg style="left:711px;top:598.5px" width="6" height="5" viewBox="0 0 6 5"><path d="M0.5,2.5 h4 M3,1 l1.5,1.5 l-1.5,1.5" fill="none" stroke="#b8b0aa" stroke-width="0.7"/></svg>
<div style="left:720px;top:596.7px;width:8.4px;height:8.5px;border:0.8px solid #8cc8e0;box-sizing:border-box"></div>
<svg style="left:721px;top:598px" width="6.5" height="6" viewBox="0 0 6.5 6"><path d="M3.2,0.5 v5 M0.8,1.8 l4.8,2.6 M0.8,4.2 l4.8,-2.6" stroke="#8cc8e0" stroke-width="0.7"/></svg>
<span class="t" style="left:698.8px;top:586.9px;width:100px;text-align:center;font-size:7px;line-height:8.05px;color:#b8b0aa;-webkit-text-stroke:0.1px #b8b0aa">Delay</span>
<span class="t" style="left:698.8px;top:597.1px;width:100px;text-align:center;font-size:7px;line-height:8.05px;color:#8cc8e0;font-weight:bold;">0.00 ms</span>
<span class="t" style="left:733.1px;top:586.9px;width:100px;text-align:center;font-size:7px;line-height:8.05px;color:#b8b0aa;-webkit-text-stroke:0.1px #b8b0aa">Mod</span>
<span class="t" style="left:733.1px;top:597.1px;width:100px;text-align:center;font-size:7px;line-height:8.05px;color:#8cc8e0;font-weight:bold;">50 %</span>
<span class="t" style="left:767.5px;top:586.9px;width:100px;text-align:center;font-size:7px;line-height:8.05px;color:#b8b0aa;-webkit-text-stroke:0.1px #b8b0aa">Bass X</span>
<span class="t" style="left:767.5px;top:597.1px;width:100px;text-align:center;font-size:7px;line-height:8.05px;color:#8cc8e0;font-weight:bold;">440 Hz</span>
<span class="t" style="left:516.6px;top:611.6999999999999px;font-size:7px;line-height:8.05px;color:#2a2624;-webkit-text-stroke:0.1px #2a2624">Convolution IR</span>
<div style="left:597.8px;top:612.8px;width:18.7px;height:6.8px;background:#e4dfdb;border-radius:3.4px;box-shadow:0 0 0 0.7px #6a645f"></div>
<div style="left:607px;top:613px;width:0.7px;height:6.4px;background:#6a645f;"></div>
<svg style="left:600px;top:614px" width="14" height="5" viewBox="0 0 14 5"><path d="M3.5,0.5 L1,2.5 L3.5,4.5z M10.5,0.5 L13,2.5 L10.5,4.5z" fill="#2a2624"/></svg>
<div style="left:515.7px;top:623.3px;width:100.8px;height:6.8px;background:#ebe7e3;box-shadow:0 0 0 0.7px #6a645f"></div>
<span class="t" style="left:517px;top:622.6999999999999px;font-size:6.9px;line-height:7.93px;color:#2a2624;-webkit-text-stroke:0.15px #2a2624">Chambers and Large Rooms</span>
<svg style="left:610px;top:624.8px" width="5" height="4" viewBox="0 0 5 4"><path d="M0,0 h5 l-2.5,3.5z" fill="#1a1816"/></svg>
<div style="left:515.7px;top:633.5px;width:100.8px;height:6.8px;background:#ebe7e3;box-shadow:0 0 0 0.7px #6a645f"></div>
<span class="t" style="left:517px;top:632.9px;font-size:6.9px;line-height:7.93px;color:#2a2624;-webkit-text-stroke:0.15px #2a2624">Concrete Bar LR</span>
<svg style="left:610px;top:635.0px" width="5" height="4" viewBox="0 0 5 4"><path d="M0,0 h5 l-2.5,3.5z" fill="#1a1816"/></svg>
<svg style="left:628.2px;top:615.1px" width="22.6" height="22.6" viewBox="0 0 22.6 22.6"><path d="M5.43,17.17 A8.3,8.3 0 1 1 17.17,17.17" fill="none" stroke="#2a2624" stroke-width="1.7"/><path d="M5.43,17.17 A8.3,8.3 0 0 1 4.59,6.42" fill="none" stroke="#a8d4e0" stroke-width="2.1"/><path d="M10.49,10.71 L4.34,6.25" stroke="#2a2624" stroke-width="1.9"/></svg>
<span class="t" style="left:589.5px;top:610.3px;width:100px;text-align:center;font-size:7px;line-height:8.05px;color:#2a2624;-webkit-text-stroke:0.1px #2a2624">Blend</span>
<span class="t" style="left:589.5px;top:633.1999999999999px;width:100px;text-align:center;font-size:7px;line-height:8.05px;color:#2a2624;-webkit-text-stroke:0.1px #2a2624">63/37</span>
<svg style="left:668.9000000000001px;top:615.1px" width="22.6" height="22.6" viewBox="0 0 22.6 22.6"><path d="M5.43,17.17 A8.3,8.3 0 1 1 17.17,17.17" fill="none" stroke="#2a2624" stroke-width="1.7"/><path d="M5.43,17.17 A8.3,8.3 0 0 1 9.36,3.23" fill="none" stroke="#a8d4e0" stroke-width="2.1"/><path d="M11.07,10.33 L9.29,2.94" stroke="#2a2624" stroke-width="1.9"/></svg>
<span class="t" style="left:630.2px;top:610.3px;width:100px;text-align:center;font-size:7px;line-height:8.05px;color:#2a2624;-webkit-text-stroke:0.1px #2a2624">Decay</span>
<span class="t" style="left:630.2px;top:633.1999999999999px;width:100px;text-align:center;font-size:7px;line-height:8.05px;color:#2a2624;-webkit-text-stroke:0.1px #2a2624">3.05 s</span>
<svg style="left:703.6px;top:615.1px" width="22.6" height="22.6" viewBox="0 0 22.6 22.6"><path d="M5.43,17.17 A8.3,8.3 0 1 1 17.17,17.17" fill="none" stroke="#2a2624" stroke-width="1.7"/><path d="M5.43,17.17 A8.3,8.3 0 1 1 17.26,5.52" fill="none" stroke="#a8d4e0" stroke-width="2.1"/><path d="M12.02,10.60 L17.48,5.32" stroke="#2a2624" stroke-width="1.9"/></svg>
<span class="t" style="left:664.9px;top:610.3px;width:100px;text-align:center;font-size:7px;line-height:8.05px;color:#2a2624;-webkit-text-stroke:0.1px #2a2624">Size</span>
<span class="t" style="left:664.9px;top:633.1999999999999px;width:100px;text-align:center;font-size:7px;line-height:8.05px;color:#2a2624;-webkit-text-stroke:0.1px #2a2624">67 %</span>
<svg style="left:737.5px;top:615.1px" width="22.6" height="22.6" viewBox="0 0 22.6 22.6"><path d="M5.43,17.17 A8.3,8.3 0 1 1 17.17,17.17" fill="none" stroke="#2a2624" stroke-width="1.7"/><path d="M5.43,17.17 A8.3,8.3 0 0 1 15.75,4.29" fill="none" stroke="#a8d4e0" stroke-width="2.1"/><path d="M11.84,10.46 L15.91,4.04" stroke="#2a2624" stroke-width="1.9"/></svg>
<span class="t" style="left:698.8px;top:610.3px;width:100px;text-align:center;font-size:7px;line-height:8.05px;color:#2a2624;-webkit-text-stroke:0.1px #2a2624">Damping</span>
<span class="t" style="left:698.8px;top:633.1999999999999px;width:100px;text-align:center;font-size:7px;line-height:8.05px;color:#2a2624;-webkit-text-stroke:0.1px #2a2624">62 %</span>
<svg style="left:771.8000000000001px;top:615.1px" width="22.6" height="22.6" viewBox="0 0 22.6 22.6"><path d="M5.43,17.17 A8.3,8.3 0 1 1 17.17,17.17" fill="none" stroke="#2a2624" stroke-width="1.7"/><path d="M5.43,17.17 A8.3,8.3 0 0 1 3.26,9.24" fill="none" stroke="#a8d4e0" stroke-width="2.1"/><path d="M10.33,11.05 L2.97,9.16" stroke="#2a2624" stroke-width="1.9"/></svg>
<span class="t" style="left:733.1px;top:610.3px;width:100px;text-align:center;font-size:7px;line-height:8.05px;color:#2a2624;-webkit-text-stroke:0.1px #2a2624">Shape</span>
<span class="t" style="left:733.1px;top:633.1999999999999px;width:100px;text-align:center;font-size:7px;line-height:8.05px;color:#2a2624;-webkit-text-stroke:0.1px #2a2624">25.4</span>
<svg style="left:806.2px;top:615.1px" width="22.6" height="22.6" viewBox="0 0 22.6 22.6"><path d="M5.43,17.17 A8.3,8.3 0 1 1 17.17,17.17" fill="none" stroke="#2a2624" stroke-width="1.7"/><path d="M5.43,17.17 A8.3,8.3 0 0 1 11.30,3.00" fill="none" stroke="#a8d4e0" stroke-width="2.1"/><path d="M11.30,10.30 L11.30,2.70" stroke="#2a2624" stroke-width="1.9"/></svg>
<span class="t" style="left:767.5px;top:610.3px;width:100px;text-align:center;font-size:7px;line-height:8.05px;color:#2a2624;-webkit-text-stroke:0.1px #2a2624">Bass Mult</span>
<span class="t" style="left:767.5px;top:633.1999999999999px;width:100px;text-align:center;font-size:7px;line-height:8.05px;color:#2a2624;-webkit-text-stroke:0.1px #2a2624">100 %</span>
<svg style="left:846.5px;top:543.4000000000001px" width="22.6" height="22.6" viewBox="0 0 22.6 22.6"><path d="M5.43,17.17 A8.3,8.3 0 1 1 17.17,17.17" fill="none" stroke="#2a2624" stroke-width="1.7"/><path d="M5.43,17.17 A8.3,8.3 0 1 1 19.34,9.24" fill="none" stroke="#a8d4e0" stroke-width="2.1"/><path d="M12.27,11.05 L19.63,9.16" stroke="#2a2624" stroke-width="1.9"/></svg>
<span class="t" style="left:807.8px;top:537.6999999999999px;width:100px;text-align:center;font-size:7px;line-height:8.05px;color:#2a2624;-webkit-text-stroke:0.1px #2a2624">Stereo</span>
<span class="t" style="left:807.8px;top:560.5999999999999px;width:100px;text-align:center;font-size:7px;line-height:8.05px;color:#2a2624;-webkit-text-stroke:0.1px #2a2624">154 %</span>
<span class="t" style="left:807px;top:570.3px;width:100px;text-align:center;font-size:7px;line-height:8.05px;color:#2a2624;-webkit-text-stroke:0.1px #2a2624">Vintage</span>
<div style="left:842px;top:579px;width:29.2px;height:7.3px;background:#e8e4e0;box-shadow:0 0 0 0.7px #6a645f"></div>
<div style="left:842px;top:579px;width:21px;height:7.3px;background:#8cc8e0;"></div>
<span class="t" style="left:806.6px;top:578.6px;width:100px;text-align:center;font-size:6.8px;line-height:7.82px;color:#2a2624;">Old</span>
<span class="t" style="left:807px;top:589.8px;width:100px;text-align:center;font-size:7px;line-height:8.05px;color:#2a2624;-webkit-text-stroke:0.1px #2a2624">Bass</span>
<div style="left:842px;top:598.8px;width:29.2px;height:6.8px;background:#ddd8d4;box-shadow:0 0 0 0.7px #6a645f"></div>
<span class="t" style="left:806.6px;top:598.2px;width:100px;text-align:center;font-size:6.8px;line-height:7.82px;color:#2a2624;">Mono</span>
<svg style="left:846.5px;top:615.1px" width="22.6" height="22.6" viewBox="0 0 22.6 22.6"><path d="M5.43,17.17 A8.3,8.3 0 1 1 17.17,17.17" fill="none" stroke="#2a2624" stroke-width="1.7"/><path d="M5.43,17.17 A8.3,8.3 0 0 1 7.88,3.74" fill="none" stroke="#a8d4e0" stroke-width="2.1"/><path d="M10.89,10.39 L7.76,3.46" stroke="#2a2624" stroke-width="1.9"/></svg>
<span class="t" style="left:807.8px;top:610.5999999999999px;width:100px;text-align:center;font-size:7px;line-height:8.05px;color:#2a2624;-webkit-text-stroke:0.1px #2a2624">Dry/Wet</span>
<span class="t" style="left:807.8px;top:633.1999999999999px;width:100px;text-align:center;font-size:7px;line-height:8.05px;color:#2a2624;-webkit-text-stroke:0.1px #2a2624">41 %</span>
<div style="left:877.5px;top:579.4px;width:2.8px;height:18.3px;background:#78c850;"></div>
<div style="left:877px;top:573px;width:3.8px;height:2px;background:#8a837e;"></div>
<div style="left:877px;top:576px;width:3.8px;height:2px;background:#8a837e;"></div>
<div style="left:882.2px;top:524.7px;width:85.8px;height:120.3px;background:#b6aea9;border-radius:3px 0 0 3px"></div>
<svg style="left:883.2px;top:525px" width="11" height="11" viewBox="0 0 11 11"><circle cx="5.5" cy="5.5" r="4.2" fill="#f2b632" stroke="#c88a20" stroke-width="0.9"/></svg>
<svg style="left:893.7px;top:525px" width="11" height="11" viewBox="0 0 11 11"><circle cx="5.5" cy="5.5" r="4.3" fill="#d8d2ce" stroke="#2a2624" stroke-width="0.9"/><path d="M3,7 h5 l-2.5,-4z" fill="#2a2624"/></svg>
<span class="t" style="left:906.3px;top:526.6px;font-size:7.2px;line-height:8.28px;color:#2a2624;font-weight:bold;">EQ Eight</span>
<div style="left:883.3px;top:535.3px;width:31px;height:108px;background:#aca49f;"></div>
<div style="left:915.5px;top:535.3px;width:29px;height:108px;background:#a49c97;"></div>
<div style="left:946px;top:535.3px;width:22px;height:108px;background:#a49c97;"></div>
<span class="t" style="left:886.5px;top:554.8px;font-size:7px;line-height:8.05px;color:#2a2624;-webkit-text-stroke:0.1px #2a2624">Analyze</span>
<span class="t" style="left:886.5px;top:566.1999999999999px;font-size:7px;line-height:8.05px;color:#2a2624;-webkit-text-stroke:0.1px #2a2624">Block</span>
<div style="left:886.5px;top:575.2px;width:25.8px;height:6.8px;background:#ebe7e3;box-shadow:0 0 0 0.7px #6a645f"></div>
<span class="t" style="left:887.5px;top:574.6px;font-size:6.8px;line-height:7.82px;color:#2a2624;">8192</span>
<svg style="left:905.5px;top:576.8px" width="5" height="4" viewBox="0 0 5 4"><path d="M0,0 h5 l-2.5,3.5z" fill="#1a1816"/></svg>
<span class="t" style="left:886.5px;top:586.0px;font-size:7px;line-height:8.05px;color:#2a2624;-webkit-text-stroke:0.1px #2a2624">Refresh</span>
<div style="left:886.5px;top:594.9px;width:25.8px;height:7px;background:#ebe7e3;box-shadow:0 0 0 0.7px #6a645f"></div>
<div style="left:886.5px;top:594.9px;width:4px;height:7px;background:#8cc8e0;"></div>
<span class="t" style="left:849.4px;top:594.5px;width:100px;text-align:center;font-size:6.8px;line-height:7.82px;color:#2a2624;">60.00</span>
<span class="t" style="left:886.5px;top:606.0px;font-size:7px;line-height:8.05px;color:#2a2624;-webkit-text-stroke:0.1px #2a2624">Avg</span>
<div style="left:886.5px;top:614.2px;width:25.8px;height:7.3px;background:#ebe7e3;box-shadow:0 0 0 0.7px #6a645f"></div>
<span class="t" style="left:849.4px;top:614px;width:100px;text-align:center;font-size:6.8px;line-height:7.82px;color:#2a2624;">1.00</span>
<svg style="left:919.3000000000001px;top:540.2px" width="22.6" height="22.6" viewBox="0 0 22.6 22.6"><path d="M5.43,17.17 A8.3,8.3 0 1 1 17.17,17.17" fill="none" stroke="#2a2624" stroke-width="1.7"/><path d="M5.43,17.17 A8.3,8.3 0 0 1 4.16,7.07" fill="none" stroke="#a8d4e0" stroke-width="2.1"/><path d="M10.44,10.79 L3.90,6.92" stroke="#2a2624" stroke-width="1.9"/></svg>
<span class="t" style="left:880.6px;top:536.0999999999999px;width:100px;text-align:center;font-size:7px;line-height:8.05px;color:#2a2624;-webkit-text-stroke:0.1px #2a2624">Freq</span>
<span class="t" style="left:880.6px;top:559.8px;width:100px;text-align:center;font-size:7px;line-height:8.05px;color:#2a2624;-webkit-text-stroke:0.1px #2a2624">78.1 Hz</span>
<svg style="left:919.3000000000001px;top:575.7px" width="22.6" height="22.6" viewBox="0 0 22.6 22.6"><path d="M5.43,17.17 A8.3,8.3 0 1 1 17.17,17.17" fill="none" stroke="#6a645f" stroke-width="1.7"/><path d="M11.30,10.30 L11.30,2.70" stroke="#6a645f" stroke-width="1.9"/></svg>
<span class="t" style="left:880.6px;top:567.8px;width:100px;text-align:center;font-size:7px;line-height:8.05px;color:#2a2624;-webkit-text-stroke:0.1px #2a2624">Gain</span>
<span class="t" style="left:880.6px;top:594.0999999999999px;width:100px;text-align:center;font-size:7px;line-height:8.05px;color:#2a2624;-webkit-text-stroke:0.1px #2a2624">0.00 dB</span>
<span class="t" style="left:880.6px;top:603.6px;width:100px;text-align:center;font-size:7px;line-height:8.05px;color:#2a2624;-webkit-text-stroke:0.1px #2a2624">Q</span>
<div style="left:918.7px;top:612.7px;width:22.6px;height:7.6px;background:#ebe7e3;box-shadow:0 0 0 0.7px #6a645f"></div>
<div style="left:918.7px;top:612.7px;width:11px;height:7.6px;background:#8cc8e0;"></div>
<span class="t" style="left:880px;top:612.3px;width:100px;text-align:center;font-size:6.8px;line-height:7.82px;color:#2a2624;">1.24</span>
<div style="left:918.7px;top:624.6px;width:22.6px;height:7.4px;background:#ddd8d4;box-shadow:0 0 0 0.7px #6a645f"></div>
<svg style="left:920px;top:625.5px" width="20" height="6" viewBox="0 0 20 6"><path d="M1,5 q1,-3.5 4,-3.5 h5" fill="none" stroke="#2a2624" stroke-width="0.8"/><path d="M14,1.5 h5 l-2.5,3.5z" fill="#1a1816"/></svg>
<div style="left:923.5px;top:635px;width:5.8px;height:5.8px;background:#8cc8e0;box-shadow:0 0 0 0.7px #6a645f"></div>
<span class="t" style="left:934.5px;top:634.5px;font-size:6.8px;line-height:7.82px;color:#2a2624;">1</span>
<svg style="left:947.7px;top:540.2px" width="22.6" height="22.6" viewBox="0 0 22.6 22.6"><path d="M5.43,17.17 A8.3,8.3 0 1 1 17.17,17.17" fill="none" stroke="#d8d2ce" stroke-width="1.7"/><path d="M10.35,11.61 L3.12,13.96" stroke="#d8d2ce" stroke-width="1.9"/></svg>
<span class="t" style="left:909px;top:536.0999999999999px;width:100px;text-align:center;font-size:7px;line-height:8.05px;color:#2a2624;-webkit-text-stroke:0.1px #2a2624">Freq</span>
<span class="t" style="left:909px;top:559.8px;width:100px;text-align:center;font-size:7px;line-height:8.05px;color:#2a2624;-webkit-text-stroke:0.1px #2a2624">251 Hz</span>
<svg style="left:947.7px;top:575.7px" width="22.6" height="22.6" viewBox="0 0 22.6 22.6"><path d="M5.43,17.17 A8.3,8.3 0 1 1 17.17,17.17" fill="none" stroke="#7a736e" stroke-width="1.7"/><path d="M10.85,10.41 L7.40,3.64" stroke="#7a736e" stroke-width="1.9"/></svg>
<span class="t" style="left:909px;top:567.8px;width:100px;text-align:center;font-size:7px;line-height:8.05px;color:#2a2624;-webkit-text-stroke:0.1px #2a2624">Gain</span>
<span class="t" style="left:909px;top:594.0999999999999px;width:100px;text-align:center;font-size:7px;line-height:8.05px;color:#2a2624;-webkit-text-stroke:0.1px #2a2624">-4.05</span>
<span class="t" style="left:909px;top:603.6px;width:100px;text-align:center;font-size:7px;line-height:8.05px;color:#2a2624;-webkit-text-stroke:0.1px #2a2624">Q</span>
<div style="left:947.5px;top:612.7px;width:22px;height:7.6px;background:#c8c2be;box-shadow:0 0 0 0.7px #6a645f"></div>
<span class="t" style="left:950px;top:612.3px;font-size:6.8px;line-height:7.82px;color:#2a2624;">1.00</span>
<div style="left:947.5px;top:624.6px;width:22px;height:7.4px;background:#c8c2be;box-shadow:0 0 0 0.7px #6a645f"></div>
<svg style="left:949px;top:625.5px" width="12" height="6" viewBox="0 0 12 6"><path d="M1,3 l3,-2.5 l3,2.5 l-3,2.5z" fill="none" stroke="#2a2624" stroke-width="0.8"/></svg>
<div style="left:953px;top:635px;width:5.8px;height:5.8px;background:#c8c2be;box-shadow:0 0 0 0.7px #6a645f"></div>
<div style="left:968px;top:519px;width:3px;height:150px;background:#716a65;"></div>
<svg style="left:57.5px;top:653.5px" width="12" height="12" viewBox="0 0 12 12"><circle cx="6" cy="6" r="5" fill="#8a837e" stroke="#57514c" stroke-width="1.2"/><path d="M4.5,3.3 L8.5,6 L4.5,8.7z" fill="#b5ada8"/></svg>
<div style="left:75.9px;top:652.8px;width:590px;height:12.6px;background:#a39b96;border:1px solid #57514c;border-radius:1.5px;box-sizing:border-box"></div>
<div style="left:674.2px;top:652.8px;width:128px;height:12.6px;background:#a39b96;border:1px solid #57514c;border-radius:1.5px;box-sizing:border-box"></div>
<div style="left:787px;top:653.3px;width:15px;height:11.2px;background:#b6aea9;"></div>
<div style="left:794.5px;top:653.3px;width:0.8px;height:11px;background:#6a645f;"></div>
<div style="left:790px;top:658.5px;width:9px;height:0.8px;background:#6a645f;"></div>
<div style="left:808.6px;top:648.5px;width:140px;height:22.5px;background:#6b645f;border-radius:2px"></div>
<span class="t" style="left:811.5px;top:655.2px;font-size:7px;line-height:8.05px;color:#2a2624;-webkit-text-stroke:0.1px #2a2624">21-Electric</span>
<div style="left:849px;top:653.6px;width:74px;height:11.6px;background:#2a2624;"></div>
<div style="left:850px;top:654.5px;width:19.5px;height:4.8px;background:#b8b0aa;"></div>
<div style="left:870.5px;top:654.5px;width:13.5px;height:10px;background:#c8c0ba;"></div>
<div style="left:872px;top:655.5px;width:9px;height:3.5px;background:#2a2624;"></div>
<div style="left:885px;top:654.5px;width:37px;height:10px;background:#b8b0aa;"></div>
<div style="left:889.5px;top:656.4px;width:26.5px;height:4.8px;background:#2a2624;"></div>
<div style="left:923px;top:653.6px;width:24.7px;height:11.6px;background:#a8a09b;"></div>
<div style="left:925.0px;top:654.5px;width:0.7px;height:10px;background:#d8d2ce;"></div>
<div style="left:929.8px;top:654.5px;width:0.7px;height:10px;background:#d8d2ce;"></div>
<div style="left:934.6px;top:654.5px;width:0.7px;height:10px;background:#d8d2ce;"></div>
<div style="left:939.4px;top:654.5px;width:0.7px;height:10px;background:#d8d2ce;"></div>
<div style="left:944.2px;top:654.5px;width:0.7px;height:10px;background:#d8d2ce;"></div>
<div style="left:923px;top:658.8px;width:24.7px;height:0.7px;background:#d8d2ce;"></div>
<svg style="left:953.5px;top:652.5px" width="14" height="14" viewBox="0 0 14 14"><circle cx="7" cy="7" r="5.8" fill="#8a837e" stroke="#57514c" stroke-width="1.2"/><path d="M3.8,9 L7,3.8 L10.2,9z" fill="#d8d2ce"/></svg>
</body></html>
